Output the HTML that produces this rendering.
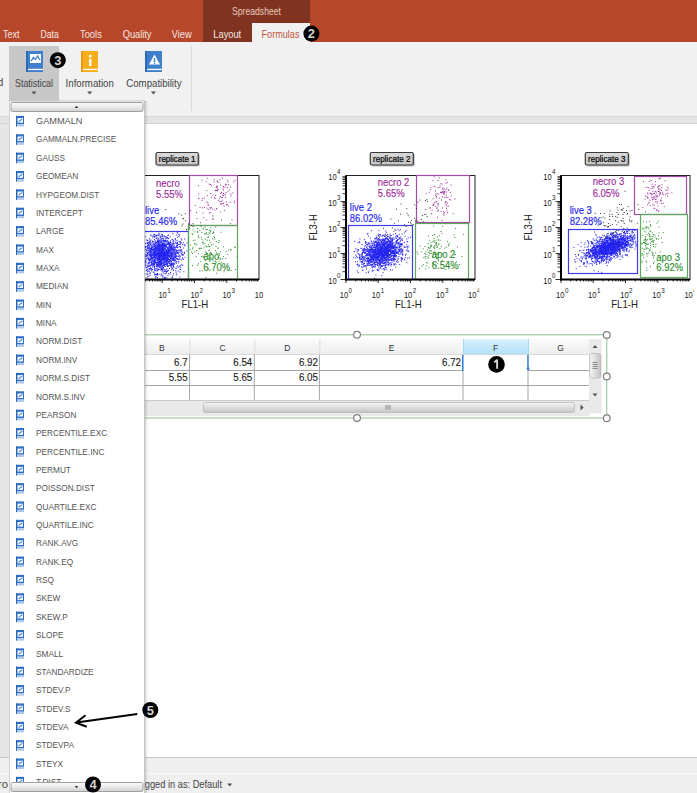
<!DOCTYPE html>
<html><head><meta charset="utf-8"><style>
html,body{margin:0;padding:0;width:697px;height:793px;overflow:hidden;background:#fff}
svg{display:block}
text{font-family:"Liberation Sans", sans-serif}
</style></head><body>
<svg width="697" height="793" viewBox="0 0 697 793" shape-rendering="auto">
<rect x="0" y="0" width="697" height="42" fill="#B7472A" />
<rect x="203" y="0" width="107" height="42" fill="#7F3320" />
<rect x="252" y="23" width="58" height="20" fill="#F1F1F1" />
<text x="232" y="15" font-size="11" fill="#EBC8BC" text-anchor="start" font-weight="normal" textLength="49" lengthAdjust="spacingAndGlyphs" >Spreadsheet</text>
<text x="3.1" y="38" font-size="11" fill="#F8E6E0" text-anchor="start" font-weight="normal" textLength="16.5" lengthAdjust="spacingAndGlyphs" >Text</text>
<text x="40.5" y="38" font-size="11" fill="#F8E6E0" text-anchor="start" font-weight="normal" textLength="18.3" lengthAdjust="spacingAndGlyphs" >Data</text>
<text x="80" y="38" font-size="11" fill="#F8E6E0" text-anchor="start" font-weight="normal" textLength="21.8" lengthAdjust="spacingAndGlyphs" >Tools</text>
<text x="122.7" y="38" font-size="11" fill="#F8E6E0" text-anchor="start" font-weight="normal" textLength="28.8" lengthAdjust="spacingAndGlyphs" >Quality</text>
<text x="171.8" y="38" font-size="11" fill="#F8E6E0" text-anchor="start" font-weight="normal" textLength="19.8" lengthAdjust="spacingAndGlyphs" >View</text>
<text x="213.3" y="38" font-size="11" fill="#F8E6E0" text-anchor="start" font-weight="normal" textLength="27.9" lengthAdjust="spacingAndGlyphs" >Layout</text>
<text x="261.5" y="38" font-size="11" fill="#C2553A" text-anchor="start" font-weight="normal" textLength="38" lengthAdjust="spacingAndGlyphs" >Formulas</text>
<rect x="0" y="42" width="697" height="72" fill="#F1F1F1" />
<rect x="0" y="114" width="697" height="2" fill="#F3F3F3" />
<rect x="0" y="116" width="697" height="1" fill="#D8D8D8" />
<rect x="0" y="117" width="697" height="6" fill="#E4E4E4" />
<rect x="0" y="123" width="697" height="1" fill="#D5D5D5" />
<rect x="9" y="46" width="50" height="55" fill="#C8C8C8" />
<rect x="191" y="46" width="1" height="65" fill="#DADADA" />
<g transform="translate(26,51)">
<rect x="0" y="0" width="17" height="21" fill="#3F7FCB"/>
<rect x="0" y="0" width="2" height="21" fill="#2F6BB5"/>
<rect x="2" y="17.8" width="15" height="1.3" fill="#FFFFFF"/>
<rect x="4" y="3" width="11" height="9" fill="#fff"/><path d="M5 10 L7.5 6.5 L9.5 8.5 L11.5 5 L14 9" stroke="#3F7FCB" stroke-width="1.3" fill="none"/>
</g>
<g transform="translate(81,51)">
<rect x="0" y="0" width="17" height="21" fill="#F8AD1A"/>
<rect x="0" y="0" width="2" height="21" fill="#EB9C0E"/>
<rect x="2" y="17.8" width="15" height="1.3" fill="#FFFFFF"/>
<rect x="8" y="4" width="2.5" height="2.5" fill="#fff"/><rect x="8" y="8" width="2.5" height="7" fill="#fff"/>
</g>
<g transform="translate(145,51)">
<rect x="0" y="0" width="17" height="21" fill="#3F7FCB"/>
<rect x="0" y="0" width="2" height="21" fill="#2F6BB5"/>
<rect x="2" y="17.8" width="15" height="1.3" fill="#FFFFFF"/>
<path d="M9.5 3.5 L15 13.5 L4 13.5 Z" fill="#fff"/><rect x="8.8" y="7" width="1.4" height="4" fill="#3F7FCB"/><rect x="8.8" y="11.6" width="1.4" height="1.3" fill="#3F7FCB"/>
</g>
<text x="15" y="86.5" font-size="10.5" fill="#444444" text-anchor="start" font-weight="normal" textLength="38" lengthAdjust="spacingAndGlyphs" >Statistical</text>
<text x="65.6" y="86.5" font-size="10.5" fill="#444444" text-anchor="start" font-weight="normal" textLength="48.2" lengthAdjust="spacingAndGlyphs" >Information</text>
<text x="126.3" y="86.5" font-size="10.5" fill="#444444" text-anchor="start" font-weight="normal" textLength="55.2" lengthAdjust="spacingAndGlyphs" >Compatibility</text>
<text x="-2.2" y="86" font-size="10.5" fill="#444444" text-anchor="start" font-weight="normal" textLength="5.5" lengthAdjust="spacingAndGlyphs" >d</text>
<path d="M31.5 91.5 h5 l-2.5 3 z" fill="#555"/>
<path d="M87.2 91.5 h5 l-2.5 3 z" fill="#555"/>
<path d="M150.9 91.5 h5 l-2.5 3 z" fill="#555"/>
<rect x="0" y="124" width="697" height="633" fill="#FFFFFF" />
<rect x="0" y="124" width="10" height="633" fill="#E5E5E5" />
<rect x="0" y="757" width="697" height="1" fill="#C8C8C8" />
<rect x="0" y="758" width="697" height="15" fill="#EFEFEF" />
<rect x="0" y="773" width="697" height="1" fill="#F8F8F8" />
<rect x="0" y="774" width="697" height="19" fill="#EFEFEF" />
<text x="-2" y="788" font-size="10.5" fill="#444444" text-anchor="start" font-weight="normal" textLength="10" lengthAdjust="spacingAndGlyphs" >ro</text>
<text x="134.5" y="788" font-size="11" fill="#444444" text-anchor="start" font-weight="normal" textLength="87.5" lengthAdjust="spacingAndGlyphs" >Logged in as: Default</text>
<path d="M227.2 783.5 h5 l-2.5 3 z" fill="#555"/>
<defs><linearGradient id="btng" x1="0" y1="0" x2="0" y2="1"><stop offset="0" stop-color="#DADADA"/><stop offset="1" stop-color="#C4C4C4"/></linearGradient></defs>
<g>
<rect x="157.5" y="154" width="42.3" height="12.5" rx="1.5" fill="#BDBDBD"/>
<rect x="156" y="152.5" width="42.3" height="12.5" rx="1.5" fill="url(#btng)" stroke="#3A3A3A" stroke-width="1.2"/>
<text x="177.15" y="161.8" font-size="8.6" fill="#000" text-anchor="middle" font-weight="normal" textLength="36.8" lengthAdjust="spacingAndGlyphs" stroke="#000" stroke-width="0.2">replicate 1</text>
<rect x="130" y="175.5" width="129" height="104.0" fill="#fff" stroke="#222" stroke-width="1"/>
<rect x="130.5" y="231.5" width="58.0" height="48.0" fill="none" stroke="#3C3CE8" stroke-width="1.2"/>
<rect x="189.5" y="175.5" width="48.0" height="50.0" fill="none" stroke="#A84AA8" stroke-width="1.2"/>
<rect x="188.5" y="225.5" width="49.0" height="54.0" fill="none" stroke="#5AAA5A" stroke-width="1.2"/>
<path d="M161.0 257.8h1M158.3 246.8h1M156.5 246.1h1M161.6 267.6h1M156.1 249.6h1M165.9 257.9h1M162.1 246.1h1M160.7 261.6h1M147.6 252.0h1M142.0 244.6h1M142.6 254.5h1M148.3 258.8h1M162.6 253.1h1M135.8 252.3h1M160.5 256.1h1M145.7 251.9h1M151.2 248.3h1M171.6 246.4h1M160.7 263.4h1M155.2 254.5h1M162.1 255.5h1M148.7 256.9h1M174.6 239.1h1M169.6 255.3h1M154.6 274.5h1M168.6 242.9h1M161.7 260.4h1M159.1 261.6h1M160.3 261.4h1M175.4 247.2h1M163.0 250.4h1M162.3 243.7h1M155.2 253.7h1M170.0 265.0h1M147.8 248.7h1M167.5 235.6h1M156.4 254.5h1M173.6 260.3h1M157.7 251.8h1M158.5 269.6h1M156.7 252.5h1M164.5 253.5h1M159.0 244.7h1M160.9 250.8h1M172.7 260.1h1M160.8 261.3h1M157.6 265.3h1M160.9 260.5h1M148.1 259.5h1M144.1 237.4h1M158.0 246.8h1M162.6 276.1h1M152.7 249.9h1M163.1 259.5h1M159.2 253.2h1M168.0 259.2h1M150.7 255.2h1M161.4 245.0h1M163.6 246.6h1M170.7 255.9h1M161.9 249.3h1M159.8 236.2h1M149.7 259.5h1M139.7 265.0h1M143.5 263.8h1M152.5 263.2h1M162.3 240.3h1M173.5 267.4h1M160.3 252.5h1M159.4 245.9h1M172.0 248.8h1M160.5 247.6h1M154.7 243.5h1M173.6 252.3h1M170.7 254.2h1M154.1 252.6h1M155.4 255.6h1M157.2 252.5h1M147.2 248.7h1M177.5 247.1h1M150.5 259.2h1M175.1 239.9h1M158.9 249.2h1M143.4 263.6h1M160.8 255.7h1M153.5 260.0h1M155.6 254.2h1M149.9 244.6h1M174.4 248.9h1M163.9 254.4h1M156.6 250.6h1M167.3 251.5h1M159.5 255.4h1M172.8 260.3h1M164.8 249.3h1M147.2 265.3h1M170.7 252.8h1M166.4 261.9h1M169.3 262.9h1M156.4 269.8h1M148.5 264.3h1M165.9 262.8h1M179.8 267.2h1M149.5 240.1h1M169.2 244.6h1M160.9 262.9h1M144.6 236.6h1M163.6 255.2h1M158.5 255.6h1M152.4 241.5h1M159.3 246.0h1M144.6 261.3h1M160.4 258.9h1M151.1 249.7h1M151.0 247.6h1M163.0 247.4h1M164.6 257.9h1M181.3 239.9h1M169.9 253.3h1M160.9 241.3h1M156.4 262.5h1M160.2 255.8h1M158.1 266.2h1M160.8 234.2h1M154.1 237.0h1M174.3 254.2h1M149.3 247.2h1M172.3 255.4h1M161.5 254.4h1M161.4 262.6h1M166.5 256.5h1M150.6 260.8h1M154.2 266.0h1M148.3 254.9h1M160.9 242.5h1M178.2 267.2h1M156.4 262.7h1M163.5 254.2h1M161.8 244.7h1M158.3 253.6h1M172.9 257.0h1M160.9 269.5h1M155.4 251.8h1M142.8 271.6h1M170.6 262.8h1M167.7 255.4h1M163.2 252.4h1M159.0 255.7h1M176.1 258.8h1M160.4 249.6h1M154.7 270.8h1M166.1 255.2h1M157.5 244.8h1M160.3 263.3h1M157.1 253.2h1M158.8 256.2h1M145.1 254.3h1M152.5 264.2h1M153.3 261.2h1M176.2 250.6h1M155.0 257.4h1M161.0 245.6h1M165.6 273.6h1M158.4 253.3h1M150.6 259.0h1M148.5 245.7h1M173.8 245.2h1M171.8 268.4h1M163.6 260.0h1M180.5 251.3h1M155.1 242.8h1M161.4 268.9h1M170.6 245.2h1M152.4 251.0h1M163.9 252.8h1M163.1 257.6h1M158.0 254.9h1M163.1 254.0h1M166.0 272.2h1M166.9 255.0h1M144.1 260.3h1M141.5 243.5h1M169.5 260.9h1M159.5 239.0h1M157.3 248.9h1M167.4 275.7h1M163.2 247.4h1M149.3 255.6h1M159.2 244.3h1M162.2 244.0h1M172.1 264.0h1M171.8 249.5h1M166.1 253.3h1M157.1 252.2h1M148.0 242.6h1M168.9 252.4h1M163.2 264.3h1M143.7 249.2h1M162.8 258.5h1M157.2 265.1h1M163.1 243.3h1M151.7 263.5h1M165.6 236.6h1M174.5 259.4h1M174.4 250.1h1M158.0 244.6h1M186.4 250.9h1M176.9 247.4h1M162.6 239.0h1M157.2 264.7h1M148.5 266.3h1M164.4 244.8h1M156.0 251.1h1M160.5 250.0h1M152.7 252.9h1M150.7 243.8h1M160.5 263.4h1M145.7 256.5h1M154.5 246.4h1M169.5 249.3h1M176.0 246.2h1M164.9 252.5h1M153.5 261.3h1M159.5 260.8h1M160.5 244.8h1M160.0 255.6h1M170.6 245.5h1M160.6 238.8h1M167.5 244.2h1M142.9 256.2h1M172.1 239.5h1M150.1 249.0h1M149.7 259.7h1M152.9 248.9h1M166.8 247.3h1M165.3 245.4h1M148.9 238.8h1M179.6 250.2h1M163.4 254.5h1M162.6 255.3h1M180.1 243.4h1M145.4 246.9h1M147.7 263.3h1M169.2 245.1h1M147.1 253.0h1M166.3 244.3h1M171.4 243.8h1M158.1 241.0h1M151.2 269.0h1M169.2 250.4h1M152.3 237.9h1M157.1 255.1h1M160.2 254.2h1M149.8 255.4h1M160.6 267.2h1M179.7 251.9h1M153.3 255.1h1M154.9 248.6h1M160.4 245.2h1M167.1 253.4h1M163.5 253.0h1M153.7 246.7h1M158.6 250.0h1M163.3 254.7h1M147.4 256.9h1M147.6 250.4h1M158.1 235.7h1M161.9 256.3h1M159.4 251.1h1M157.3 246.1h1M158.3 250.0h1M161.9 243.5h1M163.4 256.1h1M159.6 251.0h1M166.5 238.7h1M165.6 256.9h1M163.8 258.4h1M154.5 253.2h1M167.4 258.5h1M163.1 240.5h1M166.4 265.5h1M171.1 256.3h1M145.4 265.4h1M164.8 240.5h1M148.0 250.2h1M173.7 250.3h1M163.7 271.3h1M176.9 252.5h1M158.6 243.3h1M154.1 259.7h1M165.0 255.7h1M170.9 246.8h1M160.4 262.0h1M166.8 264.6h1M165.0 251.7h1M164.6 245.2h1M144.6 262.0h1M160.4 258.0h1M144.0 253.2h1M155.0 247.4h1M138.4 254.0h1M170.0 257.7h1M155.0 255.4h1M159.8 260.3h1M167.8 270.4h1M172.4 256.9h1M164.0 262.2h1M155.6 255.1h1M170.1 272.6h1M159.4 254.7h1M163.0 267.5h1M160.7 268.9h1M151.3 254.2h1M159.0 262.6h1M171.5 239.7h1M151.8 259.1h1M154.4 241.2h1M171.4 258.7h1M165.9 250.0h1M171.3 251.8h1M172.0 245.3h1M152.5 257.7h1M154.0 262.1h1M163.6 246.0h1M161.7 251.6h1M170.2 248.2h1M156.6 266.9h1M183.4 271.8h1M161.6 257.0h1M176.3 252.4h1M151.2 257.0h1M165.5 246.7h1M144.5 243.0h1M167.7 247.2h1M159.6 257.1h1M167.2 251.2h1M166.0 246.1h1M157.4 245.7h1M172.3 253.7h1M153.6 252.4h1M158.8 261.8h1M145.0 246.7h1M170.6 253.0h1M168.1 273.8h1M158.7 251.8h1M173.1 258.5h1M167.7 249.6h1M180.2 269.3h1M166.7 260.9h1M140.7 263.0h1M159.1 259.3h1M167.8 251.1h1M144.1 260.1h1M153.6 252.6h1M155.0 252.3h1M137.9 268.7h1M163.5 265.3h1M180.8 253.3h1M143.0 248.3h1M148.9 251.4h1M161.8 236.0h1M164.4 240.4h1M164.0 253.7h1M157.9 254.6h1M155.6 249.7h1M144.2 256.3h1M179.5 272.0h1M174.2 260.4h1M154.2 269.3h1M160.4 254.4h1M158.1 256.1h1M156.6 254.6h1M150.2 252.5h1M183.8 252.2h1M158.6 260.3h1M168.1 243.8h1M158.9 263.9h1M163.7 255.9h1M176.5 247.1h1M161.8 250.0h1M175.9 235.1h1M154.3 250.6h1M167.6 260.1h1M175.0 238.8h1M168.5 251.5h1M154.3 260.7h1M151.8 236.2h1M157.3 241.2h1M154.5 259.1h1M164.1 269.7h1M159.0 240.7h1M153.4 247.0h1M148.8 260.3h1M154.5 236.9h1M168.0 253.3h1M164.6 255.7h1M167.3 254.8h1M173.4 257.8h1M164.9 258.5h1M146.4 254.8h1M158.4 257.2h1M147.4 271.7h1M162.0 243.5h1M143.9 254.0h1M160.1 248.3h1M161.9 248.9h1M166.5 247.6h1M160.6 264.3h1M186.7 243.0h1M156.4 247.5h1M168.8 243.4h1M156.2 255.2h1M151.2 246.9h1M156.2 235.6h1M146.5 252.5h1M162.5 253.1h1M143.3 252.3h1M169.0 259.5h1M160.2 246.7h1M167.3 248.9h1M149.3 248.5h1M175.5 255.7h1M172.6 249.4h1M170.4 248.4h1M168.7 249.5h1M160.2 258.2h1M173.1 249.2h1M143.6 254.0h1M161.2 256.0h1M174.2 256.7h1M169.1 243.8h1M169.7 274.0h1M168.7 256.7h1M162.5 271.7h1M151.7 254.8h1M165.6 261.6h1M156.6 258.3h1M158.2 256.4h1M159.7 244.3h1M160.8 263.3h1M151.3 253.6h1M167.6 244.3h1M162.8 244.8h1M172.3 275.8h1M181.2 251.0h1M168.4 255.4h1M162.0 269.5h1M147.8 266.2h1M160.5 268.4h1M162.9 248.5h1M163.8 261.7h1M161.4 259.6h1M155.8 235.3h1M170.0 260.8h1M162.5 255.5h1M171.4 249.7h1M153.9 253.9h1M172.9 240.8h1M172.9 247.8h1M150.0 268.0h1M160.0 242.8h1M157.4 264.1h1M172.9 249.8h1M165.1 261.4h1M154.6 259.0h1M160.7 250.0h1M156.1 256.1h1M161.3 249.6h1M156.7 265.9h1M163.1 263.2h1M173.0 259.4h1M183.7 245.0h1M169.1 251.2h1M179.6 269.3h1M141.5 247.7h1M167.6 261.8h1M168.4 253.6h1M165.6 260.7h1M160.2 264.8h1M138.4 263.1h1M150.7 265.0h1M158.7 246.8h1M164.7 246.0h1M151.9 241.1h1M160.7 259.7h1M171.2 252.7h1M171.5 254.2h1M160.1 260.5h1M171.6 250.8h1M158.6 253.7h1M161.8 246.4h1M171.3 250.2h1M165.6 246.8h1M164.6 258.4h1M156.8 274.5h1M164.7 271.4h1M170.6 247.8h1M157.2 259.5h1M161.6 255.4h1M158.1 238.2h1M158.7 234.2h1M164.7 247.8h1M153.8 253.6h1M163.7 241.2h1M143.5 246.6h1M140.6 247.8h1M176.9 243.5h1M167.5 241.4h1M164.0 251.7h1M160.4 260.4h1M178.6 255.2h1M162.2 245.7h1M166.8 252.1h1M169.3 253.8h1M178.4 234.6h1M158.0 263.6h1M157.5 247.8h1M158.3 242.2h1M162.2 278.0h1M172.5 243.4h1M152.3 252.0h1M171.0 246.3h1M154.1 264.0h1M169.6 250.6h1M149.8 241.4h1M154.0 234.6h1M168.5 248.3h1M165.8 272.2h1M172.7 243.0h1M169.7 265.1h1M153.5 246.7h1M159.9 240.0h1M149.9 253.5h1M158.7 256.8h1M163.7 252.7h1M172.4 233.7h1M161.0 248.2h1M162.3 257.0h1M151.9 249.8h1M168.9 257.5h1M154.2 274.9h1M184.1 239.0h1M164.0 278.4h1M168.8 256.3h1M158.9 250.1h1M158.9 250.0h1M168.4 250.5h1M156.6 244.1h1M160.5 246.6h1M159.2 265.0h1M164.7 259.4h1M164.6 255.2h1M159.7 252.2h1M168.6 244.0h1M174.4 254.0h1M153.5 251.1h1M154.2 257.2h1M153.8 266.5h1M153.2 234.3h1M153.7 236.7h1M160.6 265.0h1M167.5 241.7h1M153.4 272.5h1M164.2 254.7h1M171.6 277.2h1M174.0 255.1h1M164.5 260.5h1M154.9 245.6h1M161.5 246.0h1M160.4 256.0h1M184.4 244.7h1M159.8 253.6h1M165.4 264.5h1M156.1 247.7h1M144.6 247.8h1M166.4 254.9h1M150.8 252.4h1M161.3 259.7h1M155.1 253.2h1M142.8 245.8h1M177.2 232.8h1M157.6 257.4h1M157.3 247.7h1M160.4 255.0h1M160.2 237.3h1M159.5 247.1h1M155.5 257.7h1M167.4 262.9h1M156.0 264.2h1M172.7 264.6h1M174.9 252.3h1M159.3 263.0h1M147.3 258.3h1M155.7 252.0h1M143.6 248.2h1M160.8 263.4h1M170.9 253.3h1M159.1 247.3h1M165.0 252.3h1M167.1 271.0h1M160.7 240.9h1M152.4 242.0h1M149.0 268.5h1M163.3 240.4h1M167.5 266.3h1M157.4 249.0h1M157.6 258.0h1M167.4 265.6h1M173.1 265.1h1M174.6 260.0h1M145.7 255.2h1M164.1 251.1h1M170.1 250.7h1M151.7 269.5h1M167.7 256.4h1M170.3 264.2h1M154.2 251.3h1M151.2 257.8h1M172.9 249.3h1M149.7 275.2h1M156.5 243.8h1M163.4 258.8h1M153.9 263.1h1M156.1 246.7h1M162.8 262.1h1M154.7 258.7h1M153.9 268.8h1M160.5 253.9h1M168.2 262.8h1M173.7 256.9h1M155.0 250.5h1M166.1 260.0h1M175.0 257.6h1M171.6 268.3h1M162.6 240.8h1M149.2 242.5h1M176.9 245.5h1M173.3 259.4h1M178.2 262.9h1M160.0 253.2h1M161.9 256.6h1M155.7 255.2h1M177.1 237.4h1M163.6 246.2h1M162.9 262.8h1M160.4 262.4h1M145.1 267.0h1M155.0 261.5h1M153.4 257.8h1M176.5 256.2h1M163.6 241.4h1M175.3 270.7h1M161.3 252.9h1M144.8 264.9h1M173.6 258.9h1M151.1 268.6h1M148.7 254.2h1M163.8 263.1h1M165.2 258.3h1M153.4 243.5h1M161.6 248.2h1M147.9 244.3h1M156.1 238.0h1M147.5 240.8h1M162.8 258.7h1M181.1 238.9h1M154.2 264.3h1M158.8 252.1h1M178.1 250.2h1M149.4 243.7h1M164.4 257.6h1M147.3 247.0h1M166.3 259.9h1M154.6 261.5h1M166.7 237.6h1M157.9 259.2h1M155.3 235.3h1M158.2 262.4h1M176.8 232.8h1M170.6 265.8h1M170.8 255.5h1M149.4 262.0h1M179.2 244.7h1M175.7 268.6h1M176.5 253.3h1M149.0 254.5h1M139.0 241.0h1M161.9 245.5h1M159.4 254.1h1M180.3 265.4h1M160.6 266.5h1M153.2 252.6h1M170.1 242.4h1M158.2 242.8h1M162.2 270.3h1M153.5 257.8h1M152.0 245.0h1M148.6 269.9h1M184.6 257.3h1M153.8 262.3h1M157.7 262.9h1M163.9 257.4h1M167.1 248.9h1M157.0 239.1h1M156.6 242.0h1M159.6 246.1h1M162.0 259.2h1M146.8 248.7h1M151.6 263.0h1M178.1 261.4h1M157.5 269.2h1M145.9 270.6h1M150.7 257.6h1M158.9 256.2h1M146.2 250.0h1M165.7 256.7h1M173.0 254.6h1M184.5 246.0h1M163.6 236.6h1M148.5 268.7h1M151.6 260.9h1M160.4 245.2h1M157.5 250.5h1M156.1 262.6h1M167.5 248.9h1M151.9 258.5h1M160.0 264.8h1M160.7 253.4h1M152.4 247.2h1M151.0 252.2h1M156.7 262.4h1M157.0 253.5h1M148.8 271.7h1M166.1 271.4h1M169.0 268.3h1M158.5 262.0h1M172.8 269.9h1M165.2 261.8h1M173.8 247.4h1M165.2 246.2h1M154.1 249.7h1M159.5 256.6h1M165.6 240.8h1M181.3 264.3h1M168.4 250.8h1M160.1 260.4h1M165.2 238.3h1M142.1 266.4h1M164.8 253.6h1M175.1 242.2h1M162.7 269.0h1M159.0 251.1h1M162.2 250.6h1M176.9 244.7h1M170.0 242.0h1M167.9 253.3h1M134.4 257.5h1M150.0 251.7h1M176.8 242.6h1M150.1 270.0h1M162.2 269.9h1M164.3 246.1h1M160.3 267.0h1M170.7 254.1h1M161.5 253.9h1M155.1 274.3h1M161.1 244.0h1M156.1 262.5h1M167.6 253.0h1M154.1 255.9h1M143.8 244.0h1M169.2 249.6h1M164.9 266.5h1M167.7 254.6h1M182.9 259.4h1M157.4 262.5h1M165.2 246.3h1M161.8 253.3h1M140.8 255.2h1M158.1 251.0h1M144.1 253.2h1M160.6 256.0h1M149.3 262.3h1M148.5 254.0h1M174.4 247.0h1M155.7 265.9h1M157.1 252.5h1M163.3 265.0h1M138.4 249.1h1M150.7 245.4h1M152.2 247.7h1M164.1 246.1h1M162.3 258.8h1M153.5 257.0h1M177.8 256.5h1M154.5 255.0h1M151.6 258.5h1M169.8 246.2h1M158.9 266.0h1M155.9 257.3h1M150.5 248.1h1M155.8 276.1h1M156.9 250.4h1M155.4 254.0h1M167.6 256.2h1M181.6 255.1h1M175.5 256.2h1M167.1 240.8h1M159.7 254.5h1M158.6 234.9h1M169.8 250.5h1M156.6 253.0h1M158.7 259.1h1M148.3 247.4h1M163.9 256.1h1M157.2 249.9h1M152.7 255.2h1M172.8 243.9h1M176.2 261.5h1M156.5 262.8h1M146.3 240.0h1M148.1 252.4h1M157.7 250.4h1M162.0 234.7h1M166.0 241.1h1M154.4 251.7h1M149.4 243.1h1M150.9 255.8h1M166.9 259.8h1M151.1 248.5h1M151.8 260.1h1M140.6 268.6h1M156.2 248.1h1M164.4 264.4h1M164.4 264.6h1M162.3 266.5h1M173.5 252.9h1M175.4 255.2h1M161.9 246.2h1M158.1 262.6h1M147.9 262.4h1M164.5 257.3h1M138.9 256.1h1M167.5 247.2h1M167.7 248.1h1M169.7 236.8h1M167.9 252.1h1M169.1 245.5h1M154.8 276.8h1M152.7 249.1h1M158.2 245.6h1M172.9 270.2h1M154.0 239.4h1M172.7 264.4h1M169.2 265.2h1M152.3 254.2h1M147.2 242.9h1M170.8 247.7h1M183.8 253.5h1M154.6 263.2h1M179.0 257.9h1M148.8 259.7h1M174.8 249.0h1M153.3 265.3h1M162.4 244.4h1M157.2 248.2h1M164.0 255.8h1M172.5 260.6h1M145.4 260.3h1M170.0 258.5h1M171.3 248.8h1M151.5 264.7h1M150.3 235.6h1M171.3 247.2h1M157.9 242.1h1M147.7 245.3h1M157.4 258.8h1M138.0 264.3h1M149.2 246.0h1M167.8 253.7h1M145.6 273.9h1M152.4 258.2h1M163.0 268.2h1M156.4 265.0h1M153.6 266.3h1M153.4 252.3h1M180.0 256.2h1M162.1 276.1h1M164.6 246.9h1M168.3 243.1h1M172.3 265.3h1M155.3 249.6h1M162.8 255.0h1M151.2 261.3h1M140.6 252.8h1M157.0 252.8h1M164.1 243.1h1M166.9 252.7h1M154.5 242.7h1M149.2 259.5h1M151.4 256.5h1M171.6 263.8h1M176.6 250.7h1M150.1 265.7h1M164.1 265.3h1M161.1 266.3h1M169.5 261.0h1M166.0 258.3h1M163.3 256.9h1M170.9 249.2h1M178.4 252.3h1M170.9 253.2h1M158.5 274.4h1M157.9 243.2h1M153.9 252.7h1M182.6 254.9h1M170.3 244.6h1M164.5 261.0h1M179.0 246.7h1M167.0 257.3h1M150.8 255.8h1M158.4 233.3h1M167.0 259.5h1M156.6 242.8h1M175.8 256.1h1M171.2 267.4h1M155.8 263.2h1M158.6 254.6h1M160.1 255.1h1M172.1 255.1h1M159.5 252.5h1M164.4 246.2h1M156.0 255.0h1M155.3 254.4h1M154.9 274.5h1M174.3 258.0h1M160.5 275.8h1M164.2 253.9h1M164.0 257.6h1M175.1 253.5h1M182.0 244.7h1M167.9 244.9h1M179.2 250.1h1M160.4 263.8h1M173.6 243.3h1M157.5 242.1h1M162.4 253.9h1M157.5 248.9h1M157.1 248.3h1M166.3 268.8h1M141.7 255.7h1M156.8 260.1h1M151.5 254.5h1M150.6 262.6h1M162.0 253.4h1M164.7 252.3h1M145.5 262.1h1M163.9 253.3h1M170.8 265.6h1M150.1 248.7h1M176.5 266.9h1M153.6 244.5h1M154.6 250.9h1M145.2 256.8h1M148.2 244.8h1M170.2 247.7h1M160.3 261.0h1M169.1 251.0h1M161.4 247.2h1M178.5 259.5h1M150.0 256.1h1M168.1 258.9h1M179.3 266.2h1M155.6 254.7h1M148.2 258.6h1M162.0 235.1h1M154.3 256.7h1M148.4 248.0h1M157.3 258.6h1M159.3 246.8h1M168.9 249.2h1M156.0 242.4h1M153.1 261.9h1M144.8 255.9h1M168.2 250.8h1M163.4 244.2h1M174.1 264.2h1M163.4 238.2h1M150.5 265.2h1M178.1 256.2h1M173.5 248.1h1M159.1 255.2h1M165.2 240.1h1M170.4 266.6h1M149.5 243.3h1M164.5 248.5h1M137.3 264.9h1M162.6 250.3h1M182.1 254.3h1M153.5 256.7h1M150.6 248.8h1M164.9 249.4h1M156.5 271.2h1M169.6 261.8h1M166.3 259.1h1M175.6 253.4h1M179.6 244.2h1M158.4 242.2h1M157.6 260.2h1M175.5 247.4h1M161.1 251.6h1M153.6 244.5h1M161.6 238.6h1M162.1 255.1h1M154.4 246.1h1M147.2 274.0h1M147.6 271.0h1M167.0 251.0h1M149.4 266.0h1M178.3 244.5h1M158.0 265.2h1M164.4 273.6h1M155.3 260.7h1M148.5 276.0h1M153.7 234.8h1M159.7 253.8h1M180.2 250.0h1M160.9 260.6h1M176.9 252.9h1M171.4 258.9h1M158.0 256.0h1M161.3 246.3h1M173.1 240.7h1M172.7 262.9h1M160.1 247.9h1M158.7 259.7h1M168.4 257.0h1M170.9 248.8h1M163.3 240.0h1M168.6 255.7h1M156.8 266.4h1M161.4 241.2h1M171.7 277.5h1M155.8 256.2h1M158.5 258.6h1M167.4 266.6h1M151.1 270.8h1M151.7 258.5h1M172.6 260.6h1M151.6 249.3h1M156.4 255.0h1M172.5 241.7h1M165.7 260.3h1M166.6 258.9h1M176.2 258.2h1M169.6 259.5h1M178.9 235.3h1M173.8 251.3h1M158.2 246.1h1M142.3 253.2h1M154.1 260.3h1M146.3 269.9h1M163.7 252.4h1M153.9 248.2h1M149.7 250.9h1M161.1 253.3h1M146.9 253.8h1M152.1 257.4h1M179.6 259.1h1M157.9 239.9h1M146.9 240.4h1M168.3 247.1h1M161.6 249.1h1M161.9 268.2h1M154.2 252.4h1M152.9 264.0h1M150.7 245.3h1M147.1 243.0h1M151.0 264.9h1M163.5 244.3h1M158.2 253.1h1M154.1 273.9h1M141.9 260.4h1M164.3 249.2h1M162.5 263.2h1M162.5 258.8h1M167.9 235.1h1M175.8 275.1h1M170.8 263.6h1M146.9 255.2h1M152.9 250.2h1M170.7 246.5h1M159.7 237.1h1M159.4 256.0h1M154.0 248.9h1M179.9 241.8h1M150.5 248.4h1M173.0 273.7h1M164.3 247.9h1M156.7 265.5h1M151.9 269.6h1M175.2 254.3h1M167.5 261.5h1M176.5 243.6h1M172.8 250.3h1M153.3 256.7h1M158.9 245.9h1M145.0 247.6h1M175.5 272.2h1M167.5 265.6h1M155.8 254.8h1M163.8 244.5h1M151.1 256.9h1M157.8 245.3h1M164.9 252.1h1M171.2 254.0h1M158.0 256.5h1M159.3 248.8h1M157.0 262.5h1M167.5 266.5h1M144.1 252.9h1M156.9 257.0h1M156.5 250.6h1M168.8 255.9h1M149.3 268.7h1M171.0 248.6h1M169.3 247.3h1M172.3 251.9h1M153.0 252.2h1M153.3 257.5h1M162.8 255.2h1M161.9 237.0h1M163.4 265.5h1M163.7 251.1h1M159.2 253.9h1M155.5 250.0h1M151.8 267.1h1M160.8 264.1h1M158.5 255.9h1M159.3 259.5h1M169.3 256.5h1M154.3 248.3h1M177.6 250.8h1M158.1 269.1h1M171.9 259.0h1M157.0 277.6h1M164.9 259.8h1M159.3 241.8h1M147.7 260.1h1M164.9 252.4h1M149.3 242.5h1M157.7 241.5h1M170.0 265.0h1M155.1 247.3h1M159.2 264.3h1M167.1 260.0h1M163.1 261.0h1M175.5 243.6h1M156.4 242.3h1M177.2 265.7h1M168.5 243.0h1M162.7 252.6h1M161.8 253.1h1M166.2 250.8h1M169.5 256.5h1M158.1 254.2h1M156.6 263.1h1M158.3 258.0h1M157.1 241.3h1M170.1 244.1h1M167.8 258.3h1M144.4 247.6h1M155.9 247.7h1M149.2 263.1h1M158.6 258.9h1M156.7 258.3h1M153.5 255.5h1M166.8 254.9h1M156.4 245.2h1M162.7 258.1h1M158.4 248.0h1M166.4 277.9h1M158.0 258.5h1M162.2 248.2h1M174.8 251.3h1M153.2 253.7h1M162.7 249.5h1M160.5 242.2h1M158.7 262.5h1M180.7 259.8h1M163.7 265.9h1M171.2 269.8h1M171.8 252.9h1M163.6 256.4h1M164.0 256.6h1M153.2 235.9h1M154.3 236.5h1M161.7 255.0h1M144.2 263.1h1M169.7 255.1h1M177.7 271.1h1M148.9 265.9h1M165.4 258.5h1M170.3 247.3h1M155.1 247.7h1M153.5 254.8h1M146.5 246.5h1M166.8 253.8h1M164.8 236.8h1M153.2 250.5h1M161.3 249.4h1M170.3 253.6h1M161.2 255.1h1M168.1 249.9h1M172.2 258.3h1M162.5 255.2h1M166.2 264.1h1M170.5 257.7h1M169.8 255.3h1M173.5 253.6h1M140.2 269.6h1M162.1 243.8h1M159.0 246.8h1M182.0 257.7h1M145.3 261.7h1M157.0 273.5h1M150.5 234.8h1M161.7 251.6h1M156.8 235.2h1M165.3 270.4h1M141.9 267.9h1M155.3 277.7h1M165.4 252.8h1M172.1 258.9h1M155.1 262.3h1M155.9 238.6h1M181.3 249.8h1M154.9 258.8h1M145.4 243.7h1M156.0 250.6h1M161.7 265.5h1M156.3 260.1h1M167.0 244.2h1M163.3 245.9h1M171.6 258.3h1M161.2 242.3h1M162.2 247.6h1M168.1 253.2h1M152.9 264.5h1M168.2 248.7h1M172.6 251.1h1M157.9 256.5h1M153.5 251.5h1M159.4 269.6h1M176.0 251.1h1M177.1 253.1h1M164.8 263.0h1M163.9 277.6h1M163.4 243.4h1M174.1 249.9h1M171.0 261.8h1M169.0 263.5h1M177.9 253.0h1M170.4 247.1h1M157.5 265.3h1M164.9 242.0h1M164.6 252.9h1M152.8 259.9h1M157.0 240.5h1M149.9 272.8h1M145.9 258.5h1M167.1 260.5h1M148.7 253.1h1M162.4 262.4h1M154.6 244.6h1M171.0 264.5h1M164.7 248.9h1M165.1 255.6h1M169.4 242.4h1M162.2 253.4h1M149.9 258.1h1M161.3 251.1h1M165.0 241.2h1M160.5 259.1h1M163.8 264.9h1M149.0 241.9h1M163.4 259.1h1M182.2 258.8h1M152.3 263.4h1M152.5 241.8h1M168.1 259.6h1M179.1 256.0h1M173.2 244.1h1M147.1 269.8h1M175.7 258.4h1M163.3 256.4h1M154.1 270.2h1M167.6 259.2h1M164.8 264.5h1M166.1 261.6h1M149.3 260.9h1M182.9 248.0h1M159.7 263.6h1M170.6 260.0h1M144.8 261.3h1M149.2 248.3h1M166.5 251.7h1M168.8 261.1h1M152.0 249.8h1M150.4 251.0h1M150.1 249.8h1M158.9 245.7h1M146.8 243.5h1M165.5 255.1h1M171.3 263.9h1M157.6 261.7h1M146.6 277.9h1M173.0 251.8h1M149.4 259.7h1M142.3 249.4h1M168.5 255.0h1M156.1 264.5h1M150.6 258.7h1M156.0 247.5h1M165.6 245.2h1M180.0 247.7h1M180.9 242.8h1M167.1 243.1h1M147.6 257.8h1M167.8 242.3h1M172.8 246.3h1M162.3 258.5h1M166.9 237.4h1M177.2 258.8h1M156.7 245.7h1M144.1 243.7h1M166.4 251.3h1M149.7 251.1h1M176.6 250.4h1M155.2 268.3h1M165.6 255.0h1M154.9 240.9h1M149.3 251.6h1M158.8 258.6h1M166.5 256.6h1M163.2 245.3h1M139.5 252.1h1M151.5 249.7h1M158.3 243.5h1M149.9 255.1h1M162.2 248.7h1M166.0 252.5h1M150.8 256.4h1M179.8 246.8h1M172.7 266.9h1M176.0 245.8h1M181.2 254.2h1M158.5 253.1h1M167.0 254.9h1M159.2 267.3h1M153.8 245.8h1M168.9 260.9h1M171.9 243.8h1M171.8 258.5h1M178.6 241.5h1M163.2 252.2h1M145.1 249.8h1M172.3 249.5h1M153.8 263.9h1M170.9 263.4h1M153.1 255.2h1M171.3 247.8h1M153.5 263.5h1M176.6 242.6h1M135.0 243.8h1M150.9 254.7h1M167.2 253.0h1M154.0 257.1h1M151.4 255.5h1M169.2 246.3h1M151.0 251.8h1M144.6 249.7h1M153.6 264.1h1M156.7 247.9h1M147.6 245.2h1M160.3 253.0h1M172.3 248.0h1M171.6 256.4h1M161.0 236.0h1M148.1 263.2h1M175.0 255.6h1M168.6 250.4h1M157.3 249.1h1M170.7 257.3h1M158.7 252.1h1M166.6 257.5h1M152.7 272.0h1M163.6 254.9h1M175.8 263.3h1M160.1 260.1h1M150.3 250.0h1M138.4 268.7h1M142.0 263.2h1M152.7 246.5h1M159.0 257.7h1M167.1 271.2h1M164.6 263.0h1M155.0 262.3h1M162.5 250.5h1M160.0 254.5h1M162.9 258.6h1M155.9 248.5h1M168.5 238.3h1M154.8 270.3h1M133.9 251.0h1M167.9 238.7h1M175.4 268.4h1M170.2 252.0h1M164.6 246.2h1M169.1 243.6h1M158.3 264.7h1M149.9 252.6h1M162.6 242.2h1M172.6 257.1h1M145.8 256.0h1M153.2 249.5h1M161.8 248.2h1M170.6 247.4h1M170.8 253.7h1M169.6 249.1h1M155.9 244.6h1M166.8 263.3h1M182.2 265.2h1M163.5 252.8h1M164.9 254.4h1M175.6 262.5h1M152.6 249.3h1M174.7 256.6h1M158.7 266.4h1M157.1 252.7h1M156.4 236.9h1M169.6 242.8h1M155.3 248.5h1M168.3 253.7h1M161.2 239.1h1M160.1 241.1h1M164.1 258.2h1M160.8 274.3h1M166.3 260.1h1M162.4 253.0h1M170.7 264.5h1M148.0 266.2h1M166.1 263.6h1M165.7 242.8h1M149.3 273.4h1M163.5 241.4h1M164.5 251.2h1M142.6 235.1h1M145.0 259.1h1M160.5 252.7h1M163.8 260.4h1M140.0 254.2h1M152.7 244.1h1M155.5 254.4h1M158.3 241.5h1M156.2 274.5h1M150.5 240.1h1M163.8 260.4h1M165.6 244.0h1M171.0 246.6h1M149.7 250.3h1M159.9 261.9h1M167.2 254.2h1M170.3 254.9h1M170.0 240.9h1M145.3 263.8h1M147.1 253.5h1M160.0 250.5h1M156.5 268.6h1M135.7 265.8h1M184.0 253.0h1M160.8 261.9h1M179.3 242.0h1M161.9 253.2h1M166.6 256.0h1M167.6 250.4h1M161.5 248.6h1M154.4 254.3h1M159.6 244.1h1M176.7 252.2h1M147.2 266.7h1M153.5 260.5h1M160.8 257.4h1M162.7 249.4h1M161.4 274.2h1M138.6 257.7h1M165.3 244.6h1M147.3 276.7h1M157.3 275.0h1M166.4 255.2h1M165.8 260.6h1M172.8 258.0h1M162.4 256.5h1M174.5 261.4h1M151.0 249.9h1M164.3 248.8h1M157.2 246.3h1M158.4 259.3h1M171.0 254.1h1M181.7 252.3h1M166.0 249.8h1M132.8 256.2h1M162.8 273.0h1M147.2 274.3h1M158.5 262.1h1M135.6 258.7h1M157.6 261.8h1M161.9 244.1h1M170.5 260.7h1M167.0 264.0h1M172.0 253.7h1M147.4 243.2h1M174.5 260.4h1M162.0 250.8h1M161.3 255.2h1M157.6 248.7h1M182.6 255.1h1M154.9 243.3h1M153.7 262.5h1M168.6 252.2h1M161.5 252.1h1M149.9 268.4h1M164.7 278.1h1M153.4 254.4h1M169.8 251.8h1M147.1 247.3h1M162.0 258.1h1M160.1 264.6h1M170.9 257.1h1M161.3 252.6h1M166.5 263.2h1M161.6 259.2h1M157.8 242.0h1M151.0 263.2h1M165.5 269.6h1M161.6 263.1h1M174.2 263.1h1M154.9 253.8h1M162.3 245.6h1M165.7 264.2h1M156.2 274.1h1M158.1 253.4h1M158.6 248.5h1M165.2 254.8h1M177.6 259.2h1M166.4 252.4h1M146.9 255.5h1M152.5 264.8h1M160.7 270.8h1M168.4 262.2h1M163.3 256.8h1M167.5 263.1h1M153.9 260.3h1M158.4 248.7h1M146.5 267.6h1M161.6 257.8h1M179.4 277.0h1M152.1 265.8h1M167.2 258.2h1M165.8 254.3h1M176.9 259.3h1M164.5 266.5h1M170.0 258.5h1M164.3 271.3h1M166.1 253.7h1M152.5 252.6h1M150.5 257.0h1M163.6 235.4h1M161.2 261.1h1M162.7 245.8h1M173.7 247.2h1M148.7 246.0h1M160.9 264.3h1M172.7 255.9h1M149.1 249.9h1M152.0 254.2h1M143.3 257.7h1M167.5 253.0h1M165.6 245.7h1M146.5 250.4h1M172.6 263.6h1M156.4 266.8h1M157.8 269.6h1M165.8 250.3h1M169.0 246.9h1M151.6 242.2h1M163.6 254.3h1M160.2 251.2h1M175.4 249.6h1M153.8 267.5h1M175.2 256.9h1M143.6 251.0h1M167.1 254.6h1M176.5 240.6h1M167.8 248.4h1M174.2 253.0h1M171.3 247.9h1M146.9 245.8h1M154.9 245.9h1M173.0 266.5h1M163.7 245.0h1M159.8 248.6h1M175.5 256.6h1M165.9 250.8h1M140.9 249.6h1M149.8 259.6h1M162.0 247.3h1M157.1 270.2h1M151.4 247.2h1M158.7 248.6h1M156.7 260.4h1M178.3 236.5h1M160.8 255.4h1M160.2 253.3h1M157.6 264.8h1M156.3 254.2h1M161.0 256.0h1M159.3 264.6h1M160.9 256.7h1M160.5 245.6h1M152.7 245.9h1M162.9 248.1h1M150.4 258.3h1M166.3 237.9h1M177.9 253.7h1M159.9 265.2h1M161.7 249.2h1M182.9 242.8h1M160.0 263.1h1M150.3 255.1h1M164.9 277.3h1M152.1 255.4h1M167.6 255.1h1M149.0 260.0h1M162.1 259.1h1M172.3 263.5h1M165.1 257.5h1M150.0 254.8h1M163.2 251.0h1M162.0 247.1h1M176.3 273.9h1M157.1 259.2h1M158.7 267.2h1M165.3 255.3h1M158.8 256.4h1M151.0 262.3h1M153.9 260.7h1M162.3 265.2h1M160.8 264.7h1M151.8 261.6h1M158.8 257.0h1M161.7 263.8h1M140.8 260.0h1M146.1 267.8h1M141.3 247.4h1" stroke="#2424F0" stroke-width="1" opacity="1.0"/>
<ellipse cx="161" cy="255" rx="7.0" ry="6.2509999999999994" fill="#2424F0" opacity="0.45" transform="rotate(4.0 161 255)"/>
<path d="M192.0 253.5h1.0M202.5 228.6h1.0M205.3 260.6h1.0M207.4 264.2h1.0M204.9 252.1h1.0M204.6 256.5h1.0M236.6 256.7h1.0M212.7 244.0h1.0M199.4 271.0h1.0M194.4 240.1h1.0M208.6 246.5h1.0M215.1 261.3h1.0M194.3 243.6h1.0M216.1 273.2h1.0M197.1 231.5h1.0M223.6 271.8h1.0M230.3 249.4h1.0M225.7 251.4h1.0M204.7 246.1h1.0M230.6 270.6h1.0M234.9 247.2h1.0M191.0 252.1h1.0M208.5 250.7h1.0M203.3 248.0h1.0M203.6 256.3h1.0M198.6 248.2h1.0M208.0 269.0h1.0M215.2 250.6h1.0M217.5 257.3h1.0M225.2 258.6h1.0M235.1 269.5h1.0M209.4 246.6h1.0M222.4 258.7h1.0M208.7 232.8h1.0M220.8 262.4h1.0M192.0 265.5h1.0M202.5 257.0h1.0M215.8 241.6h1.0M197.2 228.6h1.0M216.1 252.8h1.0M222.8 256.6h1.0M201.1 256.5h1.0M204.5 259.9h1.0M214.4 239.1h1.0M210.0 252.7h1.0M205.7 263.6h1.0M234.0 247.2h1.0M208.2 246.3h1.0M218.3 242.5h1.0M204.8 239.4h1.0M220.7 232.3h1.0M205.6 277.4h1.0M210.7 258.1h1.0M207.9 236.7h1.0M209.5 257.3h1.0M195.7 256.4h1.0M227.4 265.9h1.0M218.5 261.1h1.0M197.7 236.8h1.0M211.1 253.3h1.0M198.0 253.8h1.0M219.0 255.0h1.0M206.4 254.1h1.0M206.4 246.4h1.0M200.3 261.3h1.0M209.3 253.6h1.0M196.4 243.9h1.0M212.3 238.9h1.0M192.4 247.7h1.0M226.8 254.5h1.0M230.4 250.3h1.0M205.7 233.9h1.0M201.9 270.7h1.0M214.6 261.5h1.0M219.9 251.9h1.0M207.1 253.5h1.0M219.4 258.0h1.0M216.9 254.0h1.0M199.2 248.6h1.0M196.8 265.1h1.0M194.1 251.8h1.0M228.1 249.9h1.0M218.6 253.3h1.0M211.0 245.0h1.0M203.1 256.9h1.0M215.7 262.0h1.0M212.0 233.4h1.0M217.4 248.0h1.0M206.0 232.7h1.0M202.0 242.6h1.0M209.5 233.1h1.0M210.7 253.6h1.0M194.3 243.9h1.0M198.0 263.8h1.0" stroke="#2E8E2E" stroke-width="1.0" opacity="1.0"/>
<path d="M207.6 234.3h1.0M201.2 232.4h1.0M217.5 248.2h1.0M210.1 228.0h1.0M190.1 249.7h1.0M198.3 237.7h1.0M203.0 228.7h1.0M207.0 240.2h1.0M204.3 234.0h1.0M204.6 233.7h1.0M208.6 250.2h1.0M208.2 244.6h1.0M207.5 237.5h1.0M200.9 237.4h1.0M205.9 252.8h1.0M194.4 231.9h1.0M213.1 232.1h1.0M218.7 240.5h1.0M192.0 248.9h1.0M215.2 227.1h1.0M214.0 237.5h1.0M213.4 236.6h1.0M208.3 258.9h1.0M215.5 246.3h1.0M197.9 235.3h1.0M197.3 232.5h1.0M201.6 239.7h1.0M223.1 246.8h1.0M195.7 245.1h1.0M205.3 229.4h1.0M199.5 248.5h1.0M204.5 243.4h1.0M192.3 234.3h1.0M200.9 248.3h1.0M192.5 229.9h1.0M210.3 231.6h1.0M209.7 242.2h1.0M207.9 255.7h1.0M206.2 247.0h1.0M191.7 233.7h1.0M205.8 253.8h1.0M212.5 260.8h1.0M202.8 241.8h1.0M209.1 240.2h1.0M199.4 230.6h1.0M208.9 230.4h1.0M204.6 227.2h1.0M209.9 230.7h1.0M196.0 250.6h1.0M192.8 240.6h1.0M202.8 243.9h1.0M190.0 245.2h1.0" stroke="#2E8E2E" stroke-width="1.0" opacity="1.0"/>
<path d="M213.6 182.0h1.0M220.1 185.2h1.0M225.9 201.9h1.0M224.5 187.2h1.0M223.1 203.4h1.0M217.0 181.4h1.0M198.2 194.0h1.0M212.6 195.1h1.0M221.9 178.2h1.0M233.8 202.8h1.0M226.8 180.2h1.0M216.7 186.5h1.0M216.7 180.8h1.0M223.5 194.3h1.0M222.9 186.9h1.0M230.3 193.9h1.0M198.1 185.6h1.0M219.5 201.7h1.0M217.6 189.5h1.0M214.7 198.7h1.0M216.4 186.0h1.0M214.1 197.6h1.0M225.0 185.0h1.0M222.9 195.7h1.0M229.6 202.4h1.0M215.4 190.3h1.0M209.7 208.8h1.0M223.5 205.9h1.0M232.3 192.9h1.0M221.1 192.6h1.0M225.2 197.3h1.0M207.3 202.9h1.0M215.8 187.3h1.0M233.8 201.2h1.0M221.3 197.4h1.0M219.4 179.5h1.0M213.7 179.4h1.0M221.7 200.2h1.0M228.2 184.7h1.0M221.9 197.5h1.0M215.9 190.5h1.0M227.1 187.7h1.0M219.8 203.9h1.0M225.5 192.5h1.0M215.2 190.4h1.0M224.9 184.1h1.0M227.5 182.2h1.0M205.8 181.9h1.0M206.7 178.3h1.0M229.1 190.0h1.0M221.7 203.6h1.0M230.1 187.0h1.0M230.6 195.8h1.0M220.0 196.4h1.0M208.6 184.1h1.0M219.1 198.1h1.0M217.0 190.7h1.0M227.8 206.1h1.0M226.1 204.7h1.0M216.8 188.9h1.0M222.5 189.0h1.0M215.9 208.5h1.0M218.4 182.3h1.0M223.9 210.4h1.0M220.6 204.3h1.0M216.5 187.1h1.0M214.5 190.6h1.0M234.7 180.4h1.0M233.1 181.9h1.0M218.1 200.4h1.0M225.0 194.8h1.0M206.8 195.6h1.0" stroke="#9C2C9C" stroke-width="1.0" opacity="1.0"/>
<path d="M209.4 207.6h1.0M198.2 198.3h1.0M196.5 218.7h1.0M208.9 212.9h1.0M203.8 198.0h1.0M227.5 191.4h1.0M190.4 210.7h1.0M198.3 198.8h1.0M222.9 193.5h1.0M222.5 195.5h1.0M229.9 223.6h1.0M206.3 202.0h1.0M202.0 207.8h1.0M225.8 184.7h1.0M223.0 186.5h1.0M201.7 180.0h1.0M214.9 195.5h1.0M207.4 205.2h1.0M220.1 193.6h1.0M212.3 218.5h1.0M214.3 210.2h1.0M207.8 209.4h1.0M220.7 201.6h1.0M221.1 192.2h1.0M223.1 190.1h1.0M206.5 208.1h1.0M226.7 204.7h1.0M210.8 197.3h1.0M231.6 219.9h1.0M210.9 185.4h1.0M202.5 213.1h1.0M203.3 217.5h1.0M216.3 209.1h1.0M219.8 212.0h1.0M201.7 200.4h1.0M206.3 219.9h1.0M210.1 193.6h1.0M196.1 212.5h1.0M212.6 219.6h1.0M199.6 207.4h1.0M203.9 207.4h1.0M221.0 220.0h1.0M200.1 222.7h1.0M206.3 190.6h1.0M210.0 184.5h1.0M212.1 209.1h1.0M209.6 212.5h1.0M208.2 205.1h1.0M194.7 205.6h1.0M201.8 198.7h1.0M210.9 207.7h1.0" stroke="#9C2C9C" stroke-width="1.0" opacity="1.0"/>
<path d="M165.2 209.5h1.0M181.4 225.8h1.0M189.3 229.1h1.0M200.6 226.0h1.0M184.8 213.7h1.0M173.6 218.3h1.0M188.2 223.8h1.0M185.1 220.8h1.0M192.6 223.7h1.0M188.6 224.5h1.0M178.4 213.8h1.0M190.9 225.3h1.0M182.4 218.7h1.0M212.3 215.9h1.0M182.4 224.1h1.0M171.1 222.9h1.0M206.6 229.5h1.0M192.6 226.7h1.0M186.3 229.7h1.0M183.1 218.6h1.0M186.2 229.2h1.0M189.0 227.4h1.0M160.7 231.5h1.0M213.1 232.7h1.0M181.2 215.2h1.0" stroke="#333333" stroke-width="1.0" opacity="1.0"/>
<rect x="129" y="175.5" width="2" height="105.0" fill="#000" />
<rect x="129" y="278.5" width="130" height="2" fill="#000" />
<path d="M130.0 279.5v3.5M139.7 279.5v2M145.4 279.5v2M149.4 279.5v2M152.5 279.5v2M155.1 279.5v2M157.3 279.5v2M159.1 279.5v2M160.8 279.5v2M162.2 279.5v3.5M172.0 279.5v2M177.6 279.5v2M181.7 279.5v2M184.8 279.5v2M187.3 279.5v2M189.5 279.5v2M191.4 279.5v2M193.0 279.5v2M194.5 279.5v3.5M204.2 279.5v2M209.9 279.5v2M213.9 279.5v2M217.0 279.5v2M219.6 279.5v2M221.8 279.5v2M223.6 279.5v2M225.3 279.5v2M226.8 279.5v3.5M236.5 279.5v2M242.1 279.5v2M246.2 279.5v2M249.3 279.5v2M251.8 279.5v2M254.0 279.5v2M255.9 279.5v2M257.5 279.5v2M129 279.5h-4.5M129 271.7h-2.5M129 267.1h-2.5M129 263.8h-2.5M129 261.3h-2.5M129 259.3h-2.5M129 257.5h-2.5M129 256.0h-2.5M129 254.7h-2.5M129 253.5h-4.5M129 245.7h-2.5M129 241.1h-2.5M129 237.8h-2.5M129 235.3h-2.5M129 233.3h-2.5M129 231.5h-2.5M129 230.0h-2.5M129 228.7h-2.5M129 227.5h-4.5M129 219.7h-2.5M129 215.1h-2.5M129 211.8h-2.5M129 209.3h-2.5M129 207.3h-2.5M129 205.5h-2.5M129 204.0h-2.5M129 202.7h-2.5M129 201.5h-4.5M129 193.7h-2.5M129 189.1h-2.5M129 185.8h-2.5M129 183.3h-2.5M129 181.3h-2.5M129 179.5h-2.5M129 178.0h-2.5M129 176.7h-2.5" stroke="#000" stroke-width="0.8"/>
<text x="156" y="187" font-size="11" fill="#9C2C9C" text-anchor="start" font-weight="normal" textLength="23.7" lengthAdjust="spacingAndGlyphs" stroke="#9C2C9C" stroke-width="0.15">necro</text>
<text x="156" y="198.3" font-size="11" fill="#9C2C9C" text-anchor="start" font-weight="normal" textLength="26.8" lengthAdjust="spacingAndGlyphs" stroke="#9C2C9C" stroke-width="0.15">5.55%</text>
<text x="145" y="213.6" font-size="11" fill="#2424F0" text-anchor="start" font-weight="normal" textLength="14.2" lengthAdjust="spacingAndGlyphs" stroke="#2424F0" stroke-width="0.15">live</text>
<text x="145" y="224.7" font-size="11" fill="#2424F0" text-anchor="start" font-weight="normal" textLength="32.1" lengthAdjust="spacingAndGlyphs" stroke="#2424F0" stroke-width="0.15">85.46%</text>
<text x="203.5" y="260.3" font-size="11" fill="#2E8E2E" text-anchor="start" font-weight="normal" textLength="18.4" lengthAdjust="spacingAndGlyphs" stroke="#2E8E2E" stroke-width="0.15">apo.</text>
<text x="203.3" y="271.3" font-size="11" fill="#2E8E2E" text-anchor="start" font-weight="normal" textLength="26.8" lengthAdjust="spacingAndGlyphs" stroke="#2E8E2E" stroke-width="0.15">6.70%</text>
<text x="126.3" y="297.7" font-size="9.5" fill="#222" text-anchor="start" font-weight="normal" textLength="8.4" lengthAdjust="spacingAndGlyphs" >10</text>
<text x="135.2" y="292.8" font-size="6.4" fill="#222" text-anchor="start" font-weight="normal" textLength="3.5" lengthAdjust="spacingAndGlyphs" >0</text>
<text x="158.4" y="297.7" font-size="9.5" fill="#222" text-anchor="start" font-weight="normal" textLength="8.4" lengthAdjust="spacingAndGlyphs" >10</text>
<text x="167.3" y="292.8" font-size="6.4" fill="#222" text-anchor="start" font-weight="normal" textLength="3.5" lengthAdjust="spacingAndGlyphs" >1</text>
<text x="190.5" y="297.7" font-size="9.5" fill="#222" text-anchor="start" font-weight="normal" textLength="8.4" lengthAdjust="spacingAndGlyphs" >10</text>
<text x="199.4" y="292.8" font-size="6.4" fill="#222" text-anchor="start" font-weight="normal" textLength="3.5" lengthAdjust="spacingAndGlyphs" >2</text>
<text x="222.6" y="297.7" font-size="9.5" fill="#222" text-anchor="start" font-weight="normal" textLength="8.4" lengthAdjust="spacingAndGlyphs" >10</text>
<text x="231.5" y="292.8" font-size="6.4" fill="#222" text-anchor="start" font-weight="normal" textLength="3.5" lengthAdjust="spacingAndGlyphs" >3</text>
<text x="254.7" y="297.7" font-size="9.5" fill="#222" text-anchor="start" font-weight="normal" textLength="8.4" lengthAdjust="spacingAndGlyphs" >10</text>
<clipPath id="sc130"><rect x="90" y="280" width="173.2" height="20"/></clipPath>
<g clip-path="url(#sc130)">
<text x="263.6" y="292.8" font-size="6.4" fill="#222" text-anchor="start" font-weight="normal" textLength="3.5" lengthAdjust="spacingAndGlyphs" >4</text>
</g>
<text x="194.9" y="307.5" font-size="10.5" fill="#222" text-anchor="middle" font-weight="normal" textLength="26.7" lengthAdjust="spacingAndGlyphs" >FL1-H</text>
<text x="112.3" y="284.0" font-size="9.5" fill="#222" text-anchor="start" font-weight="normal" textLength="8.4" lengthAdjust="spacingAndGlyphs" >10</text>
<text x="121" y="277.5" font-size="6.4" fill="#222" text-anchor="start" font-weight="normal" textLength="3.5" lengthAdjust="spacingAndGlyphs" >0</text>
<text x="112.3" y="258.0" font-size="9.5" fill="#222" text-anchor="start" font-weight="normal" textLength="8.4" lengthAdjust="spacingAndGlyphs" >10</text>
<text x="121" y="251.5" font-size="6.4" fill="#222" text-anchor="start" font-weight="normal" textLength="3.5" lengthAdjust="spacingAndGlyphs" >1</text>
<text x="112.3" y="232.0" font-size="9.5" fill="#222" text-anchor="start" font-weight="normal" textLength="8.4" lengthAdjust="spacingAndGlyphs" >10</text>
<text x="121" y="225.5" font-size="6.4" fill="#222" text-anchor="start" font-weight="normal" textLength="3.5" lengthAdjust="spacingAndGlyphs" >2</text>
<text x="112.3" y="206.0" font-size="9.5" fill="#222" text-anchor="start" font-weight="normal" textLength="8.4" lengthAdjust="spacingAndGlyphs" >10</text>
<text x="121" y="199.5" font-size="6.4" fill="#222" text-anchor="start" font-weight="normal" textLength="3.5" lengthAdjust="spacingAndGlyphs" >3</text>
<text x="112.3" y="180.0" font-size="9.5" fill="#222" text-anchor="start" font-weight="normal" textLength="8.4" lengthAdjust="spacingAndGlyphs" >10</text>
<text x="121" y="173.5" font-size="6.4" fill="#222" text-anchor="start" font-weight="normal" textLength="3.5" lengthAdjust="spacingAndGlyphs" >4</text>
<text x="0" y="0" font-size="10.5" fill="#222" text-anchor="middle" textLength="26.2" lengthAdjust="spacingAndGlyphs" transform="translate(100.7,227.3) rotate(-90)">FL3-H</text>
</g>
<g>
<rect x="371.8" y="154" width="43" height="12.5" rx="1.5" fill="#BDBDBD"/>
<rect x="370.3" y="152.5" width="43" height="12.5" rx="1.5" fill="url(#btng)" stroke="#3A3A3A" stroke-width="1.2"/>
<text x="391.8" y="161.8" font-size="8.6" fill="#000" text-anchor="middle" font-weight="normal" textLength="37.5" lengthAdjust="spacingAndGlyphs" stroke="#000" stroke-width="0.2">replicate 2</text>
<rect x="346" y="175.5" width="129" height="104.0" fill="#fff" stroke="#222" stroke-width="1"/>
<rect x="348.5" y="225.5" width="64.0" height="54.0" fill="none" stroke="#3C3CE8" stroke-width="1.2"/>
<rect x="416.5" y="175.5" width="53.0" height="47.0" fill="none" stroke="#A84AA8" stroke-width="1.2"/>
<rect x="415.5" y="223.5" width="53.0" height="56.0" fill="none" stroke="#5AAA5A" stroke-width="1.2"/>
<path d="M385.1 243.8h1M390.0 246.2h1M392.6 260.1h1M359.6 259.1h1M374.3 242.9h1M375.2 251.8h1M393.4 237.9h1M393.6 264.9h1M388.6 254.7h1M381.9 243.1h1M387.9 253.6h1M390.0 269.8h1M390.0 253.5h1M399.2 238.0h1M369.4 251.9h1M374.8 258.9h1M378.5 266.0h1M398.7 254.2h1M377.8 257.6h1M390.9 241.9h1M385.8 256.6h1M384.4 263.5h1M395.4 242.8h1M383.4 245.3h1M388.4 244.0h1M392.2 252.7h1M392.7 248.6h1M366.0 269.0h1M380.1 262.9h1M386.7 256.1h1M402.1 250.2h1M397.4 237.3h1M391.6 248.1h1M380.5 252.4h1M385.8 263.8h1M361.6 256.8h1M374.1 262.6h1M377.3 256.5h1M377.6 258.1h1M393.2 246.5h1M382.5 241.0h1M385.4 257.8h1M375.9 261.9h1M359.2 242.8h1M366.7 251.6h1M382.2 251.4h1M381.3 257.7h1M376.8 243.5h1M368.3 271.1h1M356.1 256.3h1M398.0 252.2h1M372.9 254.0h1M391.5 259.1h1M372.1 260.0h1M384.8 259.8h1M397.3 246.0h1M366.1 258.5h1M401.5 253.0h1M384.5 269.8h1M370.6 261.4h1M375.7 253.7h1M383.0 263.3h1M371.7 250.2h1M364.5 259.5h1M377.0 256.3h1M370.2 251.8h1M393.4 248.2h1M388.9 254.5h1M378.1 240.9h1M392.8 250.9h1M392.8 234.3h1M363.8 239.6h1M372.4 262.1h1M388.2 250.4h1M383.4 257.5h1M378.7 255.7h1M383.5 235.0h1M377.8 263.3h1M377.6 251.9h1M375.3 249.8h1M394.4 247.3h1M370.8 230.7h1M375.7 238.4h1M361.9 262.4h1M389.8 235.7h1M391.4 253.5h1M373.4 259.5h1M364.1 246.7h1M366.2 247.0h1M391.7 239.7h1M369.3 247.5h1M384.2 248.9h1M391.5 244.5h1M367.8 251.2h1M382.4 244.8h1M385.0 265.2h1M375.5 253.7h1M396.8 243.8h1M372.6 245.6h1M386.2 254.9h1M380.2 252.6h1M395.8 255.5h1M366.4 255.2h1M382.9 257.1h1M379.3 247.5h1M376.7 239.4h1M381.4 247.4h1M386.8 242.9h1M376.9 245.4h1M369.9 259.7h1M376.5 256.3h1M369.3 255.2h1M363.0 252.2h1M376.1 257.4h1M383.5 250.0h1M390.8 251.2h1M387.5 256.3h1M380.8 249.7h1M385.1 247.8h1M385.8 259.3h1M390.9 246.8h1M367.4 254.4h1M380.1 260.5h1M377.3 251.1h1M389.6 246.4h1M379.7 265.2h1M397.8 253.0h1M384.4 243.7h1M387.6 250.9h1M383.9 247.3h1M381.3 250.4h1M384.9 261.9h1M385.4 238.3h1M370.8 242.0h1M372.8 257.9h1M385.9 246.2h1M384.4 245.3h1M365.9 244.4h1M372.0 264.6h1M366.8 264.4h1M396.0 247.2h1M380.9 247.2h1M381.2 256.8h1M381.6 259.3h1M394.5 251.5h1M385.0 250.5h1M385.2 242.4h1M385.9 252.3h1M372.0 270.2h1M370.8 247.4h1M384.5 236.3h1M372.7 242.0h1M370.8 253.0h1M384.9 259.4h1M390.3 258.8h1M387.9 246.7h1M393.7 245.3h1M374.7 264.8h1M390.1 251.5h1M389.7 256.6h1M366.4 254.3h1M368.4 255.5h1M374.0 263.7h1M387.1 244.3h1M381.2 242.5h1M381.8 255.8h1M384.3 236.4h1M377.7 256.4h1M384.7 259.8h1M367.3 258.8h1M374.2 254.8h1M385.8 256.0h1M375.0 254.5h1M368.5 243.7h1M387.5 250.0h1M363.6 249.1h1M381.6 263.5h1M392.9 255.3h1M361.7 255.2h1M386.6 253.6h1M385.9 248.9h1M400.7 258.7h1M380.3 244.4h1M403.9 242.6h1M394.5 263.4h1M371.0 256.2h1M377.5 256.5h1M384.9 265.8h1M387.8 250.2h1M393.7 246.9h1M377.3 269.6h1M372.3 249.9h1M381.8 243.5h1M358.2 264.8h1M372.7 249.4h1M377.3 245.1h1M369.5 255.5h1M407.7 251.6h1M389.6 238.4h1M381.1 242.7h1M389.8 248.1h1M381.8 250.9h1M374.9 241.5h1M387.7 239.7h1M368.4 252.3h1M373.6 255.4h1M392.5 251.2h1M383.5 251.4h1M390.8 235.5h1M385.4 243.7h1M367.8 254.7h1M377.1 257.1h1M393.5 231.3h1M380.6 266.8h1M390.9 260.6h1M382.5 240.5h1M369.0 259.8h1M391.9 243.8h1M378.4 254.3h1M362.1 253.2h1M399.2 264.5h1M380.2 265.9h1M375.6 246.8h1M356.7 264.4h1M377.2 270.4h1M385.0 252.3h1M361.5 267.5h1M377.4 251.3h1M357.1 264.1h1M392.2 244.7h1M382.4 254.5h1M392.0 250.2h1M400.3 245.7h1M374.7 249.6h1M353.5 251.6h1M392.5 251.3h1M372.4 256.3h1M359.2 254.4h1M387.2 255.8h1M372.9 260.5h1M402.0 244.0h1M389.6 238.1h1M359.8 261.1h1M381.9 253.1h1M375.0 250.9h1M390.3 262.9h1M379.0 239.6h1M395.4 253.3h1M388.9 251.5h1M407.0 246.7h1M387.1 236.3h1M375.1 247.9h1M381.1 254.5h1M373.2 266.7h1M369.7 250.9h1M384.1 241.6h1M387.7 255.2h1M378.2 267.0h1M382.3 253.7h1M370.9 241.3h1M374.5 250.8h1M376.4 258.7h1M355.2 248.8h1M361.3 266.4h1M375.2 249.2h1M369.3 261.2h1M376.9 254.4h1M359.0 265.6h1M385.8 255.0h1M395.1 247.3h1M379.6 257.6h1M386.1 248.8h1M381.9 247.8h1M389.3 257.2h1M381.5 266.1h1M364.5 253.7h1M400.3 244.4h1M363.8 266.3h1M387.5 241.3h1M390.0 242.1h1M366.7 253.8h1M376.2 244.5h1M377.4 244.9h1M382.1 251.4h1M389.7 246.5h1M366.8 244.9h1M378.8 264.1h1M390.8 244.8h1M391.9 240.6h1M392.7 246.4h1M390.0 254.7h1M378.4 254.9h1M369.7 253.8h1M389.2 250.7h1M370.3 262.3h1M363.2 249.6h1M385.4 241.7h1M398.5 256.4h1M375.2 248.9h1M366.9 244.2h1M386.4 255.5h1M385.4 252.9h1M375.3 255.9h1M365.2 255.4h1M397.8 258.3h1M376.4 250.3h1M396.7 262.1h1M365.0 252.1h1M384.1 260.5h1M372.2 258.7h1M378.2 270.7h1M386.2 249.7h1M377.8 260.7h1M389.0 241.8h1M383.9 241.0h1M373.2 243.7h1M366.9 249.7h1M370.7 258.2h1M390.3 248.0h1M369.1 260.6h1M359.1 241.8h1M389.5 255.0h1M392.3 247.8h1M367.6 250.9h1M387.8 244.5h1M373.8 242.8h1M368.7 261.0h1M386.5 241.8h1M369.6 250.1h1M387.6 241.5h1M379.6 235.7h1M367.6 258.0h1M391.4 240.7h1M373.0 259.7h1M377.2 248.6h1M387.2 252.0h1M393.8 255.2h1M375.2 252.2h1M380.9 241.5h1M370.8 261.6h1M364.0 263.2h1M384.7 250.0h1M387.5 254.1h1M394.9 245.8h1M379.0 250.4h1M402.3 254.5h1M371.3 251.5h1M373.7 253.6h1M383.9 268.8h1M361.4 264.1h1M386.4 245.4h1M379.9 248.4h1M382.1 259.4h1M364.8 265.5h1M377.4 264.2h1M386.1 260.3h1M387.8 258.8h1M382.2 245.3h1M389.0 255.6h1M404.8 231.4h1M379.4 260.4h1M367.8 253.1h1M405.0 257.6h1M371.9 264.9h1M394.7 254.9h1M385.8 252.7h1M372.1 250.0h1M389.7 251.2h1M402.0 244.8h1M355.2 255.1h1M384.7 254.1h1M382.4 245.4h1M398.2 243.2h1M389.5 247.9h1M368.5 265.5h1M354.1 251.4h1M386.5 248.1h1M390.0 249.3h1M376.7 269.5h1M379.3 251.2h1M369.8 248.8h1M388.9 254.6h1M381.8 246.5h1M389.3 237.2h1M378.0 250.8h1M372.5 255.1h1M374.4 247.4h1M401.6 253.2h1M395.0 249.4h1M392.5 255.6h1M395.2 267.1h1M379.4 254.5h1M366.5 255.4h1M388.9 246.0h1M394.4 259.0h1M377.4 263.8h1M401.2 251.3h1M371.1 265.5h1M380.2 249.5h1M383.2 247.6h1M393.8 255.4h1M395.4 253.5h1M373.3 252.7h1M391.6 246.8h1M375.5 262.2h1M390.2 250.0h1M379.5 255.8h1M391.2 255.8h1M378.7 256.0h1M391.3 255.8h1M373.5 252.1h1M384.0 258.6h1M388.8 249.5h1M382.3 265.4h1M375.3 255.8h1M399.2 250.9h1M359.5 259.8h1M377.7 252.1h1M393.6 253.1h1M379.1 259.4h1M386.8 251.8h1M385.3 253.2h1M378.3 249.3h1M382.3 244.7h1M368.2 264.9h1M379.4 252.4h1M380.5 252.5h1M382.2 252.4h1M373.1 261.0h1M374.4 261.6h1M360.9 248.5h1M392.9 248.5h1M374.6 256.5h1M370.5 255.1h1M357.6 253.9h1M374.9 257.7h1M391.6 243.4h1M399.7 243.6h1M359.4 238.8h1M398.9 247.6h1M374.9 247.8h1M370.0 264.9h1M381.1 265.9h1M379.8 234.5h1M391.3 247.2h1M379.4 264.5h1M379.1 261.5h1M381.9 246.3h1M387.6 246.2h1M395.5 256.4h1M382.7 256.5h1M388.2 248.5h1M391.8 248.1h1M388.8 243.3h1M383.1 254.9h1M373.3 250.7h1M376.2 258.9h1M374.1 257.1h1M398.8 251.1h1M364.3 256.9h1M393.5 247.4h1M394.3 254.1h1M386.7 249.0h1M376.4 251.3h1M382.8 255.9h1M386.7 248.7h1M382.8 254.9h1M364.2 250.1h1M373.3 252.4h1M379.1 250.8h1M372.5 259.3h1M385.2 238.9h1M382.3 243.4h1M400.9 244.5h1M377.8 253.7h1M380.0 252.1h1M399.2 250.1h1M391.4 258.7h1M371.5 267.3h1M389.8 257.7h1M372.7 260.4h1M386.7 247.0h1M407.3 250.9h1M379.6 254.2h1M392.2 258.5h1M388.6 260.0h1M398.4 239.1h1M376.9 246.1h1M383.3 262.9h1M389.4 242.6h1M379.0 260.7h1M376.4 252.6h1M385.6 237.5h1M390.8 252.8h1M388.5 243.3h1M373.8 249.4h1M385.0 252.0h1M383.6 265.5h1M396.6 243.5h1M375.0 266.8h1M378.7 263.4h1M399.8 244.1h1M379.3 253.4h1M372.7 246.7h1M377.8 259.6h1M377.3 251.6h1M377.1 242.8h1M398.5 230.7h1M375.0 257.9h1M366.9 260.1h1M396.0 242.5h1M384.5 243.1h1M387.8 251.6h1M384.6 262.0h1M387.4 261.2h1M389.2 241.4h1M385.1 255.2h1M366.3 265.7h1M383.0 254.7h1M372.4 254.8h1M385.5 248.9h1M383.1 235.7h1M397.2 240.3h1M358.2 250.0h1M373.0 258.3h1M372.2 256.5h1M371.7 271.2h1M388.2 265.7h1M371.0 259.6h1M371.7 258.8h1M389.7 238.3h1M369.7 245.9h1M365.6 250.1h1M371.6 243.4h1M383.2 256.0h1M367.7 251.0h1M382.2 250.3h1M374.4 259.9h1M391.5 255.2h1M379.8 267.7h1M401.3 244.8h1M380.8 261.4h1M373.3 257.0h1M382.6 246.6h1M379.6 240.6h1M376.1 238.1h1M407.2 258.1h1M395.6 251.4h1M393.1 259.4h1M393.3 256.6h1M372.0 257.5h1M376.2 244.3h1M369.5 258.0h1M393.6 239.1h1M401.3 259.0h1M377.9 249.4h1M381.2 259.7h1M377.8 244.5h1M385.8 235.4h1M383.6 260.5h1M385.4 257.2h1M387.4 256.4h1M383.6 245.3h1M379.5 252.0h1M395.8 261.4h1M386.6 245.2h1M374.0 252.3h1M397.3 251.2h1M381.4 246.3h1M391.7 252.1h1M381.4 252.9h1M400.6 246.7h1M400.6 257.4h1M382.6 258.6h1M380.6 246.0h1M379.1 245.7h1M387.6 250.9h1M388.2 256.9h1M362.2 257.6h1M372.3 254.9h1M397.0 235.7h1M384.1 250.9h1M361.2 261.5h1M382.4 248.0h1M374.1 278.2h1M377.7 239.2h1M371.8 251.4h1M377.8 252.3h1M370.5 258.6h1M376.7 242.8h1M373.0 251.0h1M391.3 253.7h1M378.3 253.0h1M384.4 267.0h1M375.2 257.0h1M390.0 243.0h1M384.1 252.8h1M376.8 257.5h1M393.3 258.2h1M379.9 253.9h1M407.9 237.9h1M384.4 258.3h1M383.7 256.6h1M383.9 257.3h1M396.1 247.2h1M384.2 251.1h1M377.6 252.8h1M369.6 260.4h1M400.7 260.9h1M396.0 241.6h1M398.7 242.9h1M381.4 266.2h1M370.2 261.0h1M385.1 250.2h1M372.4 257.3h1M376.9 261.1h1M395.5 238.5h1M376.4 250.8h1M369.0 246.3h1M383.0 250.2h1M363.8 251.9h1M387.7 241.5h1M371.8 266.3h1M396.5 236.5h1M367.1 258.1h1M368.9 252.9h1M377.0 257.4h1M354.2 241.3h1M368.5 262.7h1M380.3 239.3h1M387.4 256.2h1M379.3 250.1h1M386.8 260.2h1M383.7 255.7h1M381.5 249.2h1M371.9 256.2h1M378.7 250.9h1M392.2 253.5h1M391.6 237.9h1M388.1 246.2h1M373.1 247.4h1M395.3 255.4h1M374.1 245.0h1M382.2 248.5h1M400.3 236.9h1M361.9 254.4h1M382.1 253.0h1M390.3 266.0h1M378.2 248.7h1M362.6 258.1h1M391.4 248.0h1M395.0 249.4h1M398.7 250.9h1M370.4 249.7h1M365.1 242.4h1M384.9 258.0h1M403.5 246.9h1M379.4 244.1h1M392.9 252.6h1M375.5 258.7h1M388.2 236.4h1M390.2 251.3h1M377.7 249.8h1M401.2 259.5h1M402.1 238.9h1M374.8 260.5h1M368.7 249.4h1M362.2 270.5h1M393.7 252.9h1M384.4 248.3h1M377.6 257.7h1M374.2 263.1h1M376.6 246.5h1M396.3 247.8h1M388.1 247.5h1M357.2 261.6h1M367.2 263.5h1M364.9 241.5h1M385.4 254.5h1M383.2 242.5h1M391.8 238.7h1M376.9 247.1h1M377.8 259.4h1M375.0 257.8h1M389.6 237.3h1M369.2 251.9h1M375.5 255.8h1M360.8 262.1h1M390.2 248.9h1M366.8 255.4h1M376.1 257.6h1M381.1 257.8h1M377.2 264.0h1M356.6 249.8h1M387.4 239.3h1M390.1 240.9h1M383.0 244.8h1M377.1 254.4h1M380.8 249.3h1M405.7 246.9h1M371.3 261.4h1M391.0 259.4h1M401.7 240.5h1M393.7 258.2h1M382.0 253.9h1M401.7 234.1h1M376.1 255.5h1M388.3 263.1h1M362.6 256.6h1M391.5 239.9h1M381.6 266.5h1M396.5 253.0h1M353.2 257.3h1M386.3 248.7h1M381.3 275.7h1M379.6 245.1h1M384.7 249.0h1M378.6 252.1h1M390.5 252.0h1M368.8 253.9h1M387.2 247.3h1M394.6 255.2h1M371.1 256.8h1M403.8 259.1h1M381.4 259.0h1M374.6 242.6h1M388.1 252.6h1M387.7 250.6h1M385.6 247.3h1M387.2 257.2h1M381.4 258.4h1M362.5 250.3h1M397.9 262.0h1M384.8 250.6h1M368.1 257.8h1M390.6 238.8h1M388.1 254.4h1M386.8 242.3h1M388.0 239.3h1M398.4 249.5h1M369.2 265.1h1M394.7 244.3h1M406.2 239.0h1M385.4 260.3h1M357.0 265.1h1M381.3 252.0h1M370.2 257.1h1M369.8 247.3h1M377.1 243.7h1M399.3 238.1h1M373.7 251.4h1M382.0 258.0h1M391.0 247.7h1M377.8 253.2h1M391.0 255.3h1M376.3 237.5h1M405.6 254.1h1M384.9 254.0h1M376.3 245.6h1M378.3 251.1h1M375.1 242.4h1M378.6 257.2h1M376.6 253.4h1M359.2 255.4h1M380.7 242.9h1M363.0 259.3h1M373.1 257.7h1M377.4 257.8h1M378.3 241.3h1M381.0 249.7h1M389.2 247.0h1M377.7 259.5h1M394.8 255.0h1M393.4 253.0h1M390.5 256.9h1M386.4 251.5h1M383.6 270.0h1M382.2 250.2h1M378.0 252.6h1M384.7 242.8h1M360.2 259.0h1M364.3 257.8h1M383.5 260.5h1M400.4 250.8h1M375.9 244.4h1M373.3 254.2h1M359.2 257.5h1M381.9 256.9h1M378.3 253.6h1M373.9 250.2h1M362.5 257.2h1M399.0 249.5h1M386.0 243.6h1M397.7 242.7h1M390.8 250.9h1M371.4 262.1h1M382.2 253.3h1M387.0 250.8h1M377.8 256.5h1M377.5 253.5h1M374.7 242.2h1M374.6 249.8h1M382.2 261.0h1M363.4 257.0h1M357.7 249.3h1M376.4 236.0h1M361.6 257.6h1M382.9 250.9h1M373.2 270.4h1M380.2 245.8h1M400.5 252.7h1M377.9 262.0h1M383.7 256.5h1M384.6 243.6h1M392.7 250.9h1M370.9 248.6h1M392.5 246.9h1M382.5 256.9h1M383.4 240.0h1M389.0 257.6h1M391.5 262.3h1M386.0 257.1h1M399.5 246.0h1M401.1 261.1h1M390.6 264.2h1M391.4 243.2h1M394.5 251.8h1M386.5 252.2h1M397.0 253.0h1M374.3 257.4h1M390.0 244.7h1M377.2 250.1h1M375.3 256.1h1M393.2 264.0h1M395.1 256.9h1M394.6 259.4h1M377.9 258.2h1M385.5 250.2h1M377.0 249.2h1M379.1 243.2h1M387.7 250.6h1M383.2 254.3h1M390.0 245.7h1M380.8 240.0h1M357.6 242.5h1M398.9 234.4h1M387.2 262.1h1M377.0 265.5h1M402.3 254.8h1M408.1 251.1h1M374.0 257.7h1M377.2 243.1h1M368.0 272.7h1M376.1 253.1h1M374.8 254.7h1M379.5 249.5h1M368.8 244.2h1M373.9 256.1h1M405.0 255.1h1M402.2 251.4h1M381.2 242.2h1M382.2 235.7h1M378.9 265.2h1M385.8 259.9h1M378.0 242.5h1M376.9 250.2h1M395.5 264.3h1M374.1 251.2h1M380.6 249.8h1M368.6 255.8h1M386.2 254.2h1M369.0 254.2h1M363.1 263.3h1M371.1 252.5h1M377.4 248.8h1M370.7 241.2h1M401.4 249.9h1M385.2 267.5h1M381.2 256.6h1M382.6 261.2h1M387.9 253.4h1M379.5 254.9h1M395.1 233.5h1M380.9 249.3h1M379.0 237.8h1M390.4 244.0h1M379.9 248.9h1M364.0 252.8h1M362.1 249.4h1M378.9 252.9h1M383.0 251.0h1M405.9 250.4h1M368.9 250.4h1M375.1 252.4h1M375.7 247.1h1M400.5 248.6h1M378.7 251.1h1M380.0 263.3h1M387.6 259.6h1M394.0 264.7h1M382.7 239.0h1M388.9 246.2h1M362.7 251.8h1M394.0 258.8h1M390.3 242.5h1M410.1 237.2h1M381.5 241.4h1M396.9 252.4h1M392.2 250.8h1M381.7 253.7h1M361.7 264.3h1M392.5 247.0h1M382.3 254.5h1M399.7 251.7h1M382.9 248.2h1M365.9 251.3h1M383.3 250.1h1M383.3 257.7h1M387.3 253.3h1M389.7 252.1h1M382.2 255.9h1M363.5 265.9h1M368.3 261.7h1M382.7 260.7h1M382.9 245.0h1M394.3 251.1h1M383.8 252.6h1M393.6 256.1h1M385.1 239.9h1M378.1 254.0h1M402.3 250.9h1M381.6 261.6h1M381.4 252.3h1M384.3 240.5h1M393.1 253.2h1M379.5 244.2h1M384.9 262.5h1M375.5 245.7h1M387.2 239.1h1M358.2 254.2h1M375.0 251.8h1M376.6 256.2h1M380.2 248.3h1M377.6 258.2h1M393.2 256.9h1M371.6 252.3h1M384.9 239.5h1M398.3 251.2h1M375.8 255.0h1M378.8 247.3h1M388.2 247.6h1M367.1 250.9h1M381.4 244.4h1M396.5 241.0h1M402.0 254.9h1M372.3 255.6h1M395.7 248.0h1M369.6 256.0h1M404.6 236.2h1M388.8 251.1h1M381.4 249.7h1M379.2 261.0h1M389.3 243.3h1M399.9 238.7h1M390.0 252.2h1M395.9 252.2h1M394.4 249.6h1M393.5 252.7h1M406.4 241.9h1M395.9 253.1h1M384.7 247.6h1M387.7 240.1h1M367.7 261.1h1M365.7 267.1h1M379.8 255.0h1M383.6 255.4h1M379.7 250.3h1M381.4 260.7h1M395.3 259.4h1M386.8 250.0h1M364.4 261.3h1M392.1 247.3h1M391.7 260.3h1M383.9 260.2h1M386.2 238.4h1M377.6 250.4h1M388.7 244.5h1M378.0 246.1h1M382.4 253.0h1M393.6 256.1h1M384.7 253.8h1M384.0 253.0h1M399.9 229.7h1M380.9 255.2h1M395.3 241.3h1M386.7 258.1h1M377.9 238.9h1M378.9 244.1h1M390.0 244.3h1M402.4 249.2h1M374.0 250.5h1M370.8 258.0h1M399.3 247.2h1M393.0 243.0h1M386.2 269.2h1M367.4 265.2h1M395.8 235.2h1M367.1 248.4h1M393.5 246.8h1M381.0 258.2h1M384.1 253.8h1M379.3 261.8h1M374.3 267.0h1M379.1 247.1h1M389.9 254.3h1M361.0 258.8h1M368.0 249.3h1M391.5 243.9h1M386.7 248.6h1M404.1 247.0h1M369.9 246.8h1M372.8 255.5h1M382.7 259.8h1M384.6 252.9h1M386.3 250.6h1M386.0 257.6h1M391.4 246.3h1M363.3 250.4h1M385.8 232.7h1M377.5 256.9h1M376.5 245.1h1M402.0 258.7h1M379.8 263.0h1M397.0 240.6h1M379.8 244.6h1M383.5 242.1h1M382.6 260.6h1M385.0 249.8h1M399.6 241.7h1M393.2 247.7h1M385.0 252.0h1M384.0 251.6h1M374.0 249.8h1M387.4 250.4h1M369.7 249.7h1M374.9 253.5h1M384.5 252.5h1M375.3 253.9h1M367.4 233.5h1M381.9 239.7h1M372.0 245.3h1M389.3 241.4h1M385.4 247.8h1M368.8 243.1h1M387.4 254.0h1M390.8 264.3h1M385.3 253.6h1M380.9 253.2h1M378.4 246.1h1M404.2 233.1h1M385.0 254.9h1M383.8 244.4h1M380.1 249.0h1M370.3 254.3h1M377.6 248.8h1M389.6 242.3h1M386.9 246.3h1M386.7 251.5h1M384.7 244.0h1M373.5 247.3h1M383.9 257.3h1M393.8 245.6h1M382.9 239.4h1M357.6 250.7h1M374.6 241.7h1M362.4 260.3h1M373.1 241.1h1M407.4 247.7h1M378.4 257.8h1M373.5 265.8h1M364.9 245.6h1M380.3 246.4h1M397.2 236.3h1M373.7 255.4h1M387.9 258.1h1M385.5 267.8h1M376.5 254.3h1M391.1 247.4h1M378.4 249.0h1M374.6 244.8h1M375.5 241.4h1M385.8 238.8h1M404.2 259.8h1M393.7 247.5h1M375.1 262.5h1M383.5 255.6h1M373.6 261.6h1M372.7 254.5h1M362.5 250.9h1M387.0 247.1h1M376.6 258.8h1M380.7 261.4h1M355.0 261.8h1M387.0 238.8h1M367.2 261.5h1M369.7 249.4h1M388.0 247.8h1M386.7 244.0h1M384.7 259.2h1M385.0 234.3h1M388.6 250.6h1M371.5 264.5h1M362.3 270.1h1M374.5 265.2h1M380.9 241.7h1M382.5 254.0h1M387.3 258.5h1M371.6 257.6h1M389.5 247.9h1M371.1 246.7h1M389.6 256.0h1M372.3 243.5h1M395.0 236.9h1M383.1 245.2h1M362.2 256.8h1M379.3 263.1h1M406.3 244.9h1M392.6 257.2h1M375.7 246.4h1M399.0 245.1h1M381.1 249.6h1M379.9 247.4h1M389.6 259.5h1M377.3 242.1h1M381.9 240.3h1M374.4 262.6h1M406.8 249.0h1M369.7 260.2h1M356.8 251.8h1M398.1 253.7h1M366.3 242.4h1M390.7 249.3h1M374.9 256.3h1M375.1 238.5h1M390.2 244.9h1M370.4 244.0h1M384.1 245.0h1M388.2 248.2h1M393.2 246.2h1M374.2 238.3h1M369.4 259.8h1M370.0 256.8h1M386.6 245.4h1M382.3 239.3h1M378.1 259.3h1M399.3 246.5h1M378.6 255.8h1M393.5 252.8h1M373.2 256.2h1M392.0 244.0h1M366.8 258.8h1M385.4 258.2h1M382.4 246.6h1M376.6 245.0h1M371.1 249.7h1M376.1 261.3h1M368.0 254.3h1M375.0 264.4h1M384.3 248.3h1M390.4 250.3h1M376.2 264.5h1M389.2 263.2h1M394.1 254.9h1M382.9 243.2h1M389.2 250.6h1M388.9 250.1h1M374.0 245.8h1M389.2 259.9h1M378.4 255.9h1M396.6 242.1h1M377.8 244.1h1M394.4 251.0h1M376.5 240.3h1M379.6 259.8h1M378.3 249.3h1M388.6 240.9h1M382.1 256.2h1M373.0 247.4h1M384.3 250.4h1M379.0 253.9h1M384.0 244.3h1M374.3 256.8h1M393.8 259.4h1M372.3 262.1h1M389.9 249.8h1M386.9 256.9h1M401.1 239.6h1M388.2 249.3h1M379.4 261.0h1M390.6 242.2h1M378.5 254.2h1M366.2 261.7h1M380.8 253.2h1M385.3 264.7h1M382.0 249.0h1M400.6 243.9h1M375.9 242.6h1M393.4 251.3h1M386.8 252.0h1M380.2 246.2h1M373.2 257.0h1M383.0 263.9h1M373.4 250.0h1M370.6 264.7h1M368.3 260.6h1M397.3 247.4h1M389.6 234.1h1M377.5 240.3h1M383.6 251.5h1M373.3 260.8h1M385.6 247.1h1M376.1 242.0h1M379.7 268.3h1M374.0 256.7h1M375.7 259.2h1M386.5 249.1h1M362.3 252.2h1M394.8 247.2h1M388.6 246.8h1M361.4 259.5h1M385.2 246.7h1M377.7 254.9h1M375.3 255.9h1M379.5 234.6h1M380.2 247.7h1M372.6 256.9h1M376.4 257.1h1M393.6 250.4h1M364.9 250.0h1M391.7 247.8h1M373.0 253.1h1M387.2 252.6h1M388.8 244.1h1M378.8 250.6h1M381.5 236.1h1M379.2 242.3h1M396.9 260.3h1M400.1 254.0h1M376.5 260.3h1M379.6 257.0h1M372.0 249.6h1M386.8 264.2h1M381.5 269.0h1M381.5 244.8h1M380.3 248.2h1M381.1 259.3h1M392.0 251.6h1M381.9 252.8h1M383.2 255.9h1M381.9 255.7h1M367.6 261.0h1M400.8 249.2h1M366.5 265.5h1M378.3 230.2h1M379.5 257.0h1M386.0 260.4h1M388.6 251.4h1M360.4 248.2h1M383.8 256.6h1M370.7 249.8h1M387.0 236.4h1M360.7 254.8h1M384.6 247.7h1M356.9 257.6h1M367.4 260.0h1M380.8 254.2h1M388.8 246.4h1M390.9 259.4h1M386.2 261.0h1M375.0 260.3h1M384.8 243.8h1M381.0 248.1h1M375.9 253.9h1M393.4 247.0h1M383.2 240.6h1M383.0 260.4h1M390.7 253.6h1M376.1 245.8h1M380.9 242.1h1M368.4 262.0h1M371.9 267.7h1M366.3 258.6h1M369.1 256.0h1M370.5 254.7h1M380.2 248.9h1M387.5 262.1h1M375.4 260.0h1M382.8 251.5h1M405.8 230.3h1M374.5 239.9h1M378.5 251.0h1M401.4 257.5h1M377.1 256.6h1M400.1 249.3h1M384.1 255.2h1M365.5 249.4h1M385.5 255.3h1M371.9 251.7h1M380.5 251.1h1M389.4 251.1h1M383.7 240.8h1M370.4 256.9h1M364.5 257.8h1M374.6 247.4h1M388.9 245.3h1M372.5 248.9h1M382.5 272.6h1M358.7 256.8h1M379.2 259.7h1M377.8 234.1h1M396.3 240.5h1M381.1 241.7h1M369.8 250.7h1M391.1 256.2h1M375.2 257.1h1M377.7 253.6h1M383.4 256.2h1M375.0 252.3h1M384.1 252.0h1M373.0 266.8h1M376.7 258.7h1M383.9 260.6h1M357.8 272.6h1M379.4 243.0h1M383.1 268.7h1M387.2 241.3h1M376.6 263.1h1M366.3 253.8h1M378.5 269.0h1M378.5 262.5h1M374.3 247.4h1M392.6 254.2h1M362.8 260.8h1M388.7 245.7h1M384.1 253.4h1M376.3 248.6h1M374.3 251.4h1M367.1 254.7h1M365.3 256.0h1M380.7 244.2h1M391.0 264.5h1M396.1 238.3h1M395.5 250.4h1M381.1 247.4h1M381.6 262.4h1M387.6 247.4h1M374.3 250.3h1M388.0 264.6h1M370.1 254.3h1M377.4 247.0h1M386.0 255.0h1M366.2 247.4h1M394.7 251.4h1M387.3 246.8h1M377.5 256.2h1M376.2 244.6h1M381.6 258.7h1M370.4 262.3h1M389.3 243.6h1M381.7 251.5h1M388.5 255.4h1M367.4 244.7h1M392.8 250.2h1M386.2 253.4h1M398.3 239.1h1M393.5 243.0h1M389.5 260.2h1M366.6 258.2h1M378.6 250.3h1M382.1 243.8h1M371.1 259.1h1M390.8 245.5h1M365.8 272.8h1M393.6 251.9h1M370.4 249.9h1M384.3 244.0h1M399.0 249.1h1M385.9 243.1h1M371.8 248.0h1M384.6 249.2h1M378.5 254.9h1M384.1 262.5h1M379.5 244.7h1M381.5 262.9h1M375.6 253.5h1M377.8 255.7h1M384.4 245.1h1M379.2 259.4h1M393.5 256.2h1M391.0 247.3h1M377.7 259.7h1M368.9 254.2h1M361.5 253.4h1M374.0 244.5h1M387.9 244.9h1M377.7 250.8h1M373.7 264.2h1M376.3 254.5h1M367.5 251.4h1M378.1 250.3h1M375.3 254.3h1M398.5 247.2h1M380.1 249.2h1M409.0 257.9h1M387.7 255.8h1M374.0 252.4h1M383.9 252.2h1M372.4 248.0h1M387.2 253.0h1M358.9 257.5h1M395.4 244.0h1M384.2 240.4h1M390.6 241.5h1M368.2 252.4h1M407.2 241.7h1M368.0 258.3h1M384.1 263.7h1M368.0 242.9h1M378.3 255.4h1M385.5 259.1h1M365.6 249.2h1M380.2 258.4h1M386.8 247.6h1M370.7 260.8h1M391.9 269.9h1M379.8 264.4h1M368.6 250.6h1M374.4 250.0h1M372.2 249.8h1M381.1 248.6h1M388.8 249.7h1M381.7 262.9h1M385.1 252.3h1M381.5 252.4h1M387.9 244.5h1M394.0 260.9h1M394.1 245.5h1M364.5 252.3h1M383.3 257.7h1M379.7 250.0h1M398.1 243.3h1M393.2 256.1h1M367.3 257.1h1M375.7 246.1h1M361.7 244.5h1M386.1 248.0h1M384.6 243.3h1M378.2 250.6h1M365.0 243.1h1M386.4 251.9h1M371.6 253.3h1M388.8 264.0h1M372.1 258.5h1M404.5 247.4h1M397.5 229.1h1M397.3 248.4h1M361.5 262.1h1M393.0 258.4h1M394.6 248.8h1M373.6 250.2h1M381.3 255.0h1M376.5 253.3h1M391.1 252.2h1M406.4 262.6h1M369.3 250.3h1M367.6 246.2h1M387.6 243.1h1M370.4 252.3h1M390.3 247.3h1M377.8 259.6h1M386.8 254.2h1M391.9 242.0h1M384.0 246.6h1M392.8 255.5h1M370.4 264.3h1M369.1 263.4h1M383.9 244.8h1M369.6 252.2h1M381.4 246.6h1M387.8 240.0h1M381.6 251.9h1M361.4 258.6h1M368.0 236.1h1M375.0 251.6h1M391.5 246.1h1M397.6 259.2h1M393.5 259.2h1M385.5 246.8h1M388.7 257.6h1M384.3 249.4h1M364.7 260.6h1M385.5 241.2h1M382.7 257.0h1M380.5 258.0h1M389.8 238.9h1M378.4 256.2h1M391.6 260.3h1M360.9 255.9h1M389.4 259.4h1M400.0 240.8h1M377.6 244.8h1M390.5 239.9h1M394.5 256.1h1M387.0 234.3h1M374.3 259.1h1M366.3 253.4h1M380.5 258.8h1M384.7 253.2h1M376.9 252.9h1M380.2 257.6h1M379.7 260.1h1M363.2 264.9h1M379.8 260.7h1M382.6 258.1h1M397.9 244.1h1M382.5 250.4h1M383.9 239.1h1M379.8 250.4h1M373.1 252.2h1M364.9 266.0h1M386.5 265.0h1M372.1 245.1h1M384.7 238.6h1M384.1 246.0h1M378.0 254.5h1M382.1 265.8h1M388.5 240.6h1M392.3 239.4h1M382.6 242.2h1M372.6 263.7h1M375.6 248.3h1M375.5 250.8h1M397.3 239.5h1M368.2 259.1h1M364.3 252.8h1M393.9 249.1h1M376.4 247.6h1M371.6 249.5h1M383.0 260.8h1M392.0 245.2h1M373.6 258.7h1M361.8 252.8h1M378.0 244.2h1M370.7 256.7h1M363.5 248.8h1M374.4 253.9h1M366.5 263.2h1M378.1 250.5h1M377.5 247.5h1M370.7 262.7h1M383.6 250.4h1M392.1 244.0h1M388.2 250.3h1M371.6 259.5h1M365.1 260.1h1M371.7 256.8h1M396.2 252.6h1M374.7 252.8h1M377.2 243.7h1M369.2 254.6h1M387.0 237.1h1M380.4 255.6h1M382.3 243.8h1M392.3 240.0h1M388.1 262.1h1M359.0 258.3h1M384.5 252.5h1M372.8 251.0h1M365.9 255.8h1M386.8 245.3h1M371.0 250.2h1M380.9 252.0h1M379.9 252.3h1M366.8 234.1h1M387.6 260.7h1M365.7 249.9h1M384.2 257.9h1M388.0 259.5h1M380.4 254.7h1M385.4 247.3h1M393.9 253.3h1M391.5 246.3h1M392.0 241.2h1M385.2 231.0h1M370.0 259.4h1M376.1 253.8h1M363.4 266.9h1M387.3 249.9h1M385.4 253.0h1M396.2 249.8h1M365.1 253.0h1M394.7 252.7h1M376.4 257.0h1M382.2 255.8h1M363.8 248.5h1M388.1 248.3h1M384.7 265.3h1M377.6 254.0h1M374.9 248.1h1M380.1 240.8h1M358.3 266.6h1M379.8 260.1h1M382.2 252.3h1M388.1 255.3h1M368.0 263.3h1M370.5 255.3h1M408.4 246.1h1M398.8 245.0h1M387.5 250.4h1M385.4 244.1h1M371.0 256.1h1M364.1 248.9h1M387.8 245.4h1M371.4 245.3h1M382.5 248.4h1M382.5 249.7h1M400.8 243.9h1M359.9 256.9h1M380.9 252.6h1M363.7 263.7h1M380.6 251.2h1M363.9 258.7h1M380.2 261.7h1M376.5 243.3h1M382.3 244.4h1M385.4 242.5h1M379.5 250.1h1M380.6 247.7h1M372.2 252.9h1M374.7 254.0h1M378.0 235.5h1M380.3 261.9h1M384.2 255.2h1M385.8 246.9h1M366.7 260.6h1M392.2 253.2h1M385.5 253.4h1M380.6 253.6h1M381.1 253.9h1M370.9 249.0h1M387.0 247.7h1M355.2 258.0h1M356.6 270.9h1M388.6 254.8h1M373.9 244.7h1M378.7 252.1h1M372.8 254.4h1M388.2 254.3h1M370.0 238.0h1M381.0 246.7h1M385.7 262.5h1M398.3 249.8h1M392.7 261.0h1M381.5 253.4h1M390.0 249.3h1M375.8 247.2h1M381.1 247.0h1M389.5 247.3h1M396.5 257.0h1M368.0 262.3h1M376.9 262.5h1M386.5 250.1h1M388.2 246.0h1M384.6 253.6h1M379.6 254.8h1M370.7 258.0h1M368.5 258.9h1M386.1 255.7h1M375.4 275.0h1M378.9 253.3h1M373.4 263.8h1M376.3 260.0h1M371.4 256.1h1M377.4 259.3h1M378.3 246.1h1M386.1 242.0h1M371.4 259.5h1M361.8 261.5h1" stroke="#2424F0" stroke-width="1" opacity="1.0"/>
<ellipse cx="382" cy="252" rx="6.6" ry="4.512" fill="#2424F0" opacity="0.45" transform="rotate(12.0 382 252)"/>
<path d="M428.0 243.7h1.0M432.3 256.9h1.0M426.8 250.0h1.0M436.0 258.0h1.0M430.3 245.0h1.0M424.4 246.5h1.0M435.2 256.5h1.0M432.7 263.5h1.0M428.7 248.4h1.0M428.2 267.9h1.0M417.1 254.1h1.0M433.7 252.2h1.0M446.2 261.7h1.0M435.9 244.1h1.0M434.1 248.6h1.0M431.1 253.4h1.0M427.6 257.1h1.0M441.6 260.6h1.0M432.3 235.4h1.0M438.0 260.9h1.0M429.6 247.8h1.0M435.2 245.0h1.0M436.1 242.7h1.0M424.8 252.0h1.0M421.3 251.9h1.0M434.4 240.7h1.0M437.0 247.1h1.0M434.5 253.7h1.0M427.9 247.5h1.0M419.7 246.0h1.0M425.9 265.8h1.0M437.6 240.3h1.0M436.2 253.8h1.0M428.4 255.8h1.0M436.1 247.1h1.0M429.1 253.3h1.0M424.5 253.5h1.0M430.4 246.2h1.0M425.4 254.5h1.0M436.7 254.7h1.0M425.4 258.3h1.0M432.1 257.0h1.0M438.6 244.4h1.0M430.1 246.9h1.0M425.2 268.9h1.0M437.1 237.1h1.0M433.8 247.3h1.0M438.5 252.7h1.0M429.8 253.2h1.0M433.5 252.2h1.0M429.5 250.8h1.0M434.3 242.5h1.0M431.0 251.0h1.0M427.8 258.2h1.0M422.6 248.9h1.0M425.4 256.6h1.0M427.9 252.4h1.0M433.5 238.6h1.0M434.0 245.7h1.0M429.3 251.0h1.0M436.3 258.2h1.0M442.5 253.5h1.0M427.9 247.8h1.0M435.3 265.5h1.0M433.2 247.2h1.0M432.8 254.1h1.0M431.2 245.8h1.0M437.9 253.8h1.0M416.6 252.0h1.0M418.9 268.7h1.0M432.2 241.9h1.0M436.2 245.4h1.0M434.7 252.2h1.0M423.3 257.6h1.0" stroke="#2E8E2E" stroke-width="1.0" opacity="1.0"/>
<path d="M426.2 262.5h1.0M440.6 231.5h1.0M421.4 266.1h1.0M454.9 228.6h1.0M456.9 247.2h1.0M437.7 243.9h1.0M437.2 263.7h1.0M461.5 256.5h1.0M428.8 240.3h1.0M430.7 245.6h1.0M444.1 248.1h1.0M433.9 234.5h1.0M448.7 243.7h1.0M463.1 234.4h1.0M448.1 245.6h1.0M432.2 262.8h1.0M441.3 233.3h1.0M436.7 258.3h1.0M427.4 263.0h1.0M447.0 241.4h1.0M453.9 267.9h1.0M446.2 247.2h1.0M459.0 264.6h1.0M430.5 242.3h1.0M437.8 239.6h1.0M424.6 256.8h1.0M440.9 246.3h1.0M454.5 237.6h1.0M439.4 248.6h1.0M435.5 243.5h1.0M447.9 244.9h1.0M453.7 235.1h1.0M442.1 226.3h1.0M438.8 235.8h1.0M454.1 254.8h1.0M445.3 269.3h1.0M454.9 254.5h1.0M432.9 226.0h1.0M439.7 240.3h1.0M433.3 241.2h1.0M422.9 264.6h1.0M428.2 236.1h1.0M449.5 257.4h1.0" stroke="#2E8E2E" stroke-width="1.0" opacity="1.0"/>
<path d="M439.5 185.8h1.0M438.8 177.8h1.0M447.5 197.6h1.0M437.5 187.6h1.0M443.7 212.6h1.0M435.0 191.0h1.0M432.7 204.0h1.0M441.7 220.5h1.0M440.4 192.5h1.0M437.6 205.9h1.0M433.3 204.8h1.0M442.2 191.7h1.0M436.7 208.0h1.0M449.8 192.4h1.0M443.5 215.2h1.0M438.1 194.4h1.0M435.2 195.5h1.0M440.6 192.6h1.0M437.5 180.5h1.0M434.6 186.8h1.0M444.0 191.7h1.0M437.0 203.9h1.0M443.7 189.1h1.0M438.0 203.9h1.0M442.7 188.3h1.0M442.1 196.7h1.0M446.3 187.9h1.0M445.2 201.5h1.0M436.2 208.0h1.0M445.3 183.2h1.0M450.4 185.0h1.0M436.6 193.6h1.0M444.7 203.1h1.0M440.5 211.3h1.0M442.9 211.7h1.0M454.5 199.0h1.0M428.7 192.2h1.0M435.8 198.0h1.0M441.5 184.1h1.0M435.5 194.2h1.0M445.7 197.3h1.0M441.0 200.1h1.0M436.1 196.5h1.0M446.0 208.4h1.0M443.2 194.0h1.0M437.0 211.0h1.0M443.5 192.5h1.0M430.5 187.7h1.0M431.6 210.3h1.0M441.9 189.0h1.0M446.9 182.6h1.0M440.4 183.8h1.0M432.6 198.9h1.0M452.8 213.8h1.0M441.2 193.0h1.0M442.0 208.1h1.0M433.8 176.9h1.0M450.2 200.0h1.0M448.9 199.6h1.0M448.3 190.4h1.0M443.4 213.8h1.0M446.0 192.0h1.0M445.4 189.8h1.0M434.0 202.7h1.0M447.9 206.2h1.0M434.8 206.4h1.0M444.4 192.0h1.0M428.7 208.0h1.0M445.4 202.4h1.0M432.4 180.8h1.0M446.0 205.8h1.0M443.5 194.3h1.0M443.0 191.1h1.0M439.4 187.5h1.0M442.3 192.4h1.0M445.7 204.9h1.0M437.0 217.1h1.0M435.4 201.9h1.0M446.4 211.0h1.0M430.0 208.0h1.0M447.1 212.8h1.0M429.9 189.6h1.0M440.5 192.1h1.0M447.7 189.6h1.0M447.1 203.2h1.0M433.7 186.1h1.0M438.7 198.1h1.0M446.0 195.0h1.0M445.5 179.7h1.0M425.8 193.3h1.0M443.3 193.0h1.0M436.0 201.6h1.0M450.7 195.9h1.0" stroke="#9C2C9C" stroke-width="1.0" opacity="1.0"/>
<path d="M390.5 219.0h1.0M444.3 197.2h1.0M417.2 221.1h1.0M426.5 199.6h1.0M424.1 214.6h1.0M414.8 220.8h1.0M393.8 223.3h1.0M394.5 229.4h1.0M391.9 227.9h1.0M383.1 228.4h1.0M397.8 220.9h1.0M407.7 215.2h1.0M400.6 204.1h1.0M427.1 201.6h1.0M400.1 214.1h1.0M425.0 200.6h1.0M415.1 221.9h1.0M437.9 210.2h1.0M417.4 202.2h1.0M430.8 213.8h1.0M421.8 215.5h1.0M406.6 213.2h1.0M426.7 216.7h1.0M384.4 235.9h1.0M410.0 222.3h1.0M410.6 223.8h1.0M425.6 214.2h1.0M377.7 238.7h1.0M406.2 208.7h1.0M419.4 200.0h1.0M423.1 221.9h1.0M395.3 230.3h1.0M414.3 218.3h1.0M378.5 236.7h1.0M408.0 222.3h1.0M405.6 226.4h1.0M410.9 220.4h1.0M432.6 205.2h1.0M425.2 209.4h1.0M415.9 208.5h1.0M420.9 219.4h1.0M403.9 224.9h1.0M414.1 205.0h1.0M412.6 224.5h1.0M396.0 209.2h1.0" stroke="#333333" stroke-width="1.0" opacity="1.0"/>
<rect x="345" y="175.5" width="2" height="105.0" fill="#000" />
<rect x="345" y="278.5" width="130" height="2" fill="#000" />
<path d="M346.0 279.5v3.5M355.7 279.5v2M361.4 279.5v2M365.4 279.5v2M368.5 279.5v2M371.1 279.5v2M373.3 279.5v2M375.1 279.5v2M376.8 279.5v2M378.2 279.5v3.5M388.0 279.5v2M393.6 279.5v2M397.7 279.5v2M400.8 279.5v2M403.3 279.5v2M405.5 279.5v2M407.4 279.5v2M409.0 279.5v2M410.5 279.5v3.5M420.2 279.5v2M425.9 279.5v2M429.9 279.5v2M433.0 279.5v2M435.6 279.5v2M437.8 279.5v2M439.6 279.5v2M441.3 279.5v2M442.8 279.5v3.5M452.5 279.5v2M458.1 279.5v2M462.2 279.5v2M465.3 279.5v2M467.8 279.5v2M470.0 279.5v2M471.9 279.5v2M473.5 279.5v2M345 279.5h-4.5M345 271.7h-2.5M345 267.1h-2.5M345 263.8h-2.5M345 261.3h-2.5M345 259.3h-2.5M345 257.5h-2.5M345 256.0h-2.5M345 254.7h-2.5M345 253.5h-4.5M345 245.7h-2.5M345 241.1h-2.5M345 237.8h-2.5M345 235.3h-2.5M345 233.3h-2.5M345 231.5h-2.5M345 230.0h-2.5M345 228.7h-2.5M345 227.5h-4.5M345 219.7h-2.5M345 215.1h-2.5M345 211.8h-2.5M345 209.3h-2.5M345 207.3h-2.5M345 205.5h-2.5M345 204.0h-2.5M345 202.7h-2.5M345 201.5h-4.5M345 193.7h-2.5M345 189.1h-2.5M345 185.8h-2.5M345 183.3h-2.5M345 181.3h-2.5M345 179.5h-2.5M345 178.0h-2.5M345 176.7h-2.5" stroke="#000" stroke-width="0.8"/>
<text x="377.8" y="185.8" font-size="11" fill="#9C2C9C" text-anchor="start" font-weight="normal" textLength="31.6" lengthAdjust="spacingAndGlyphs" stroke="#9C2C9C" stroke-width="0.15">necro 2</text>
<text x="377.8" y="197.1" font-size="11" fill="#9C2C9C" text-anchor="start" font-weight="normal" textLength="26.8" lengthAdjust="spacingAndGlyphs" stroke="#9C2C9C" stroke-width="0.15">5.65%</text>
<text x="349.8" y="210.5" font-size="11" fill="#2424F0" text-anchor="start" font-weight="normal" textLength="22.1" lengthAdjust="spacingAndGlyphs" stroke="#2424F0" stroke-width="0.15">live 2</text>
<text x="349.8" y="221.8" font-size="11" fill="#2424F0" text-anchor="start" font-weight="normal" textLength="32.1" lengthAdjust="spacingAndGlyphs" stroke="#2424F0" stroke-width="0.15">86.02%</text>
<text x="431.7" y="257.6" font-size="11" fill="#2E8E2E" text-anchor="start" font-weight="normal" textLength="23.7" lengthAdjust="spacingAndGlyphs" stroke="#2E8E2E" stroke-width="0.15">apo 2</text>
<text x="431.8" y="269.4" font-size="11" fill="#2E8E2E" text-anchor="start" font-weight="normal" textLength="26.8" lengthAdjust="spacingAndGlyphs" stroke="#2E8E2E" stroke-width="0.15">6.54%</text>
<text x="339.7" y="297.7" font-size="9.5" fill="#222" text-anchor="start" font-weight="normal" textLength="8.4" lengthAdjust="spacingAndGlyphs" >10</text>
<text x="348.6" y="292.8" font-size="6.4" fill="#222" text-anchor="start" font-weight="normal" textLength="3.5" lengthAdjust="spacingAndGlyphs" >0</text>
<text x="371.8" y="297.7" font-size="9.5" fill="#222" text-anchor="start" font-weight="normal" textLength="8.4" lengthAdjust="spacingAndGlyphs" >10</text>
<text x="380.7" y="292.8" font-size="6.4" fill="#222" text-anchor="start" font-weight="normal" textLength="3.5" lengthAdjust="spacingAndGlyphs" >1</text>
<text x="403.9" y="297.7" font-size="9.5" fill="#222" text-anchor="start" font-weight="normal" textLength="8.4" lengthAdjust="spacingAndGlyphs" >10</text>
<text x="412.8" y="292.8" font-size="6.4" fill="#222" text-anchor="start" font-weight="normal" textLength="3.5" lengthAdjust="spacingAndGlyphs" >2</text>
<text x="436.0" y="297.7" font-size="9.5" fill="#222" text-anchor="start" font-weight="normal" textLength="8.4" lengthAdjust="spacingAndGlyphs" >10</text>
<text x="444.9" y="292.8" font-size="6.4" fill="#222" text-anchor="start" font-weight="normal" textLength="3.5" lengthAdjust="spacingAndGlyphs" >3</text>
<text x="468.1" y="297.7" font-size="9.5" fill="#222" text-anchor="start" font-weight="normal" textLength="8.4" lengthAdjust="spacingAndGlyphs" >10</text>
<clipPath id="sc346"><rect x="306" y="280" width="173.2" height="20"/></clipPath>
<g clip-path="url(#sc346)">
<text x="477.0" y="292.8" font-size="6.4" fill="#222" text-anchor="start" font-weight="normal" textLength="3.5" lengthAdjust="spacingAndGlyphs" >4</text>
</g>
<text x="408.3" y="307.5" font-size="10.5" fill="#222" text-anchor="middle" font-weight="normal" textLength="26.7" lengthAdjust="spacingAndGlyphs" >FL1-H</text>
<text x="328.3" y="284.0" font-size="9.5" fill="#222" text-anchor="start" font-weight="normal" textLength="8.4" lengthAdjust="spacingAndGlyphs" >10</text>
<text x="337" y="277.5" font-size="6.4" fill="#222" text-anchor="start" font-weight="normal" textLength="3.5" lengthAdjust="spacingAndGlyphs" >0</text>
<text x="328.3" y="258.0" font-size="9.5" fill="#222" text-anchor="start" font-weight="normal" textLength="8.4" lengthAdjust="spacingAndGlyphs" >10</text>
<text x="337" y="251.5" font-size="6.4" fill="#222" text-anchor="start" font-weight="normal" textLength="3.5" lengthAdjust="spacingAndGlyphs" >1</text>
<text x="328.3" y="232.0" font-size="9.5" fill="#222" text-anchor="start" font-weight="normal" textLength="8.4" lengthAdjust="spacingAndGlyphs" >10</text>
<text x="337" y="225.5" font-size="6.4" fill="#222" text-anchor="start" font-weight="normal" textLength="3.5" lengthAdjust="spacingAndGlyphs" >2</text>
<text x="328.3" y="206.0" font-size="9.5" fill="#222" text-anchor="start" font-weight="normal" textLength="8.4" lengthAdjust="spacingAndGlyphs" >10</text>
<text x="337" y="199.5" font-size="6.4" fill="#222" text-anchor="start" font-weight="normal" textLength="3.5" lengthAdjust="spacingAndGlyphs" >3</text>
<text x="328.3" y="180.0" font-size="9.5" fill="#222" text-anchor="start" font-weight="normal" textLength="8.4" lengthAdjust="spacingAndGlyphs" >10</text>
<text x="337" y="173.5" font-size="6.4" fill="#222" text-anchor="start" font-weight="normal" textLength="3.5" lengthAdjust="spacingAndGlyphs" >4</text>
<text x="0" y="0" font-size="10.5" fill="#222" text-anchor="middle" textLength="26.2" lengthAdjust="spacingAndGlyphs" transform="translate(316.7,227.3) rotate(-90)">FL3-H</text>
</g>
<g>
<rect x="586.8" y="154" width="43" height="12.5" rx="1.5" fill="#BDBDBD"/>
<rect x="585.3" y="152.5" width="43" height="12.5" rx="1.5" fill="url(#btng)" stroke="#3A3A3A" stroke-width="1.2"/>
<text x="606.8" y="161.8" font-size="8.6" fill="#000" text-anchor="middle" font-weight="normal" textLength="37.5" lengthAdjust="spacingAndGlyphs" stroke="#000" stroke-width="0.2">replicate 3</text>
<rect x="561" y="175.5" width="129" height="104.0" fill="#fff" stroke="#222" stroke-width="1"/>
<rect x="568.5" y="229.5" width="69.0" height="44.0" fill="none" stroke="#3C3CE8" stroke-width="1.2"/>
<rect x="634.5" y="176.5" width="52.0" height="38.0" fill="none" stroke="#A84AA8" stroke-width="1.2"/>
<rect x="640.5" y="214.5" width="47.0" height="63.0" fill="none" stroke="#5AAA5A" stroke-width="1.2"/>
<path d="M611.8 242.6h1M631.8 239.6h1M609.3 243.5h1M612.4 242.9h1M598.7 250.1h1M599.8 257.7h1M595.6 251.1h1M601.3 241.7h1M626.6 233.5h1M610.5 259.7h1M584.4 247.2h1M624.9 243.1h1M603.0 249.0h1M598.1 251.4h1M627.0 239.2h1M611.1 253.4h1M632.8 236.2h1M613.0 242.7h1M601.8 247.2h1M602.0 239.5h1M586.0 250.4h1M611.0 253.5h1M603.2 248.1h1M617.2 248.8h1M608.1 247.2h1M631.4 238.1h1M603.7 239.6h1M614.5 243.9h1M631.9 238.0h1M619.0 249.4h1M628.8 233.4h1M627.8 241.2h1M608.2 245.7h1M604.8 246.6h1M582.0 258.8h1M610.2 241.4h1M608.7 260.5h1M613.9 243.4h1M629.5 236.1h1M607.6 244.5h1M606.6 252.1h1M616.2 240.7h1M607.9 248.0h1M604.6 248.4h1M601.0 245.6h1M609.9 241.0h1M614.3 244.4h1M598.6 247.0h1M603.8 247.9h1M610.7 245.4h1M599.2 258.5h1M619.9 244.3h1M620.5 245.4h1M606.4 248.5h1M621.5 240.9h1M616.4 257.6h1M614.3 251.6h1M624.0 246.0h1M627.7 242.5h1M615.1 241.6h1M610.6 254.5h1M603.7 248.8h1M600.2 250.1h1M604.8 251.6h1M607.9 244.1h1M605.9 247.5h1M603.4 254.3h1M617.1 245.4h1M595.5 254.4h1M594.5 252.9h1M609.9 243.5h1M599.7 246.2h1M633.2 237.9h1M606.9 253.2h1M614.2 251.5h1M595.1 245.5h1M606.0 249.0h1M620.8 236.7h1M612.6 245.8h1M617.1 245.5h1M603.2 244.1h1M581.1 261.6h1M592.3 250.2h1M628.5 238.5h1M616.4 243.6h1M617.4 244.6h1M603.4 256.5h1M606.2 240.5h1M605.5 251.3h1M596.5 255.6h1M618.2 256.1h1M601.9 253.1h1M590.0 250.9h1M610.5 249.0h1M608.7 246.7h1M602.2 246.8h1M612.8 249.1h1M616.7 250.3h1M623.0 232.5h1M603.3 248.1h1M601.9 255.3h1M617.9 243.7h1M610.7 253.7h1M605.3 246.6h1M619.7 246.3h1M625.6 243.9h1M617.9 241.2h1M598.5 250.5h1M578.8 259.1h1M620.5 243.9h1M606.8 254.0h1M608.8 252.7h1M634.5 243.0h1M620.1 246.4h1M612.2 247.7h1M610.1 252.9h1M590.8 251.5h1M616.9 239.9h1M608.1 243.6h1M614.4 250.3h1M626.0 244.5h1M601.1 251.1h1M615.9 252.8h1M584.7 257.0h1M588.4 257.8h1M614.4 248.2h1M619.5 245.9h1M601.9 251.4h1M623.1 242.0h1M609.6 240.2h1M622.6 240.0h1M600.8 247.3h1M599.4 248.8h1M623.9 246.8h1M625.6 250.1h1M599.1 253.0h1M626.5 254.4h1M593.1 244.3h1M614.7 243.5h1M597.9 252.8h1M600.3 237.3h1M609.0 247.8h1M616.6 250.0h1M611.4 245.1h1M601.7 240.3h1M604.3 254.2h1M616.7 256.1h1M607.5 237.6h1M618.7 249.8h1M595.9 242.3h1M611.0 250.5h1M596.4 249.3h1M600.4 243.3h1M594.2 252.7h1M605.0 244.7h1M579.3 266.4h1M598.4 249.7h1M596.2 253.3h1M591.9 253.1h1M607.0 252.8h1M596.6 247.4h1M606.5 259.6h1M592.3 254.1h1M601.7 251.2h1M616.6 245.4h1M612.2 247.6h1M602.4 248.0h1M590.2 251.1h1M600.3 248.4h1M617.6 246.4h1M614.5 251.4h1M581.8 258.2h1M608.8 246.6h1M594.1 254.9h1M622.2 248.5h1M608.1 250.9h1M619.6 253.8h1M623.1 243.3h1M610.2 247.6h1M611.7 243.4h1M617.9 240.3h1M599.9 251.9h1M602.5 247.8h1M585.3 259.1h1M609.0 246.3h1M614.3 246.5h1M601.0 260.8h1M603.9 254.1h1M630.0 236.8h1M610.1 242.1h1M621.1 241.3h1M596.4 258.4h1M619.5 238.7h1M622.6 243.7h1M602.7 247.5h1M599.0 251.0h1M609.6 250.9h1M610.0 238.5h1M599.7 257.9h1M622.2 241.9h1M607.5 246.6h1M609.3 237.6h1M619.3 240.0h1M610.7 232.4h1M611.7 253.6h1M583.4 263.7h1M614.4 241.2h1M590.8 259.3h1M612.0 249.4h1M605.9 243.5h1M619.0 238.5h1M619.3 234.4h1M598.4 242.3h1M624.0 232.4h1M595.9 254.9h1M611.6 258.4h1M630.1 243.7h1M616.9 234.3h1M598.9 248.4h1M607.0 240.0h1M598.3 245.7h1M621.2 245.5h1M605.2 246.7h1M612.3 242.0h1M606.0 238.3h1M616.7 249.9h1M613.2 248.3h1M613.2 257.1h1M611.3 238.9h1M597.0 254.8h1M621.2 247.4h1M618.6 244.9h1M591.9 248.5h1M588.2 251.5h1M593.3 252.6h1M607.0 236.7h1M617.4 248.6h1M593.0 252.9h1M617.2 242.7h1M618.8 244.9h1M621.3 244.1h1M607.0 250.5h1M617.9 245.5h1M603.7 244.2h1M604.6 245.1h1M611.2 247.2h1M607.9 247.3h1M610.8 255.1h1M622.8 239.3h1M613.7 243.6h1M607.7 246.0h1M601.6 241.6h1M580.4 257.2h1M622.5 237.5h1M614.7 242.9h1M612.0 241.4h1M606.1 247.2h1M581.3 257.0h1M607.2 233.5h1M616.3 244.4h1M611.1 248.2h1M603.9 242.4h1M603.6 246.2h1M634.5 249.1h1M603.1 246.4h1M612.5 248.9h1M600.7 243.9h1M631.2 245.7h1M590.7 242.7h1M599.1 251.3h1M615.0 243.0h1M589.9 254.2h1M615.7 244.7h1M602.9 252.1h1M608.0 240.8h1M609.8 239.2h1M619.9 246.0h1M597.0 251.9h1M607.0 256.8h1M590.5 251.8h1M592.0 251.9h1M580.6 246.7h1M602.4 249.7h1M613.1 247.9h1M622.1 246.6h1M617.3 238.6h1M606.8 265.7h1M635.2 243.1h1M617.3 249.8h1M603.9 259.7h1M604.2 247.9h1M612.9 235.7h1M601.0 248.9h1M604.5 249.3h1M599.6 249.2h1M594.6 249.2h1M592.3 256.0h1M593.4 255.8h1M603.8 246.8h1M622.6 243.1h1M586.2 257.0h1M574.3 259.5h1M603.9 240.4h1M609.6 244.9h1M632.4 236.8h1M631.7 247.5h1M601.4 244.5h1M624.3 241.1h1M610.5 244.9h1M594.3 249.4h1M597.2 241.7h1M605.2 258.4h1M627.9 240.4h1M610.3 249.4h1M624.8 243.6h1M603.0 246.5h1M622.1 257.7h1M601.2 237.4h1M618.3 243.4h1M610.3 253.6h1M609.5 239.0h1M585.2 254.2h1M594.8 253.1h1M593.4 249.8h1M591.1 250.5h1M603.3 252.1h1M624.7 240.7h1M598.3 261.6h1M613.0 249.1h1M615.9 253.1h1M620.7 247.0h1M617.8 239.0h1M601.4 248.7h1M609.8 246.7h1M612.4 245.9h1M603.6 239.1h1M618.7 247.2h1M598.2 253.2h1M613.4 245.9h1M586.7 247.0h1M601.5 258.7h1M598.4 248.2h1M595.4 248.3h1M612.8 233.5h1M574.7 261.7h1M609.1 243.3h1M620.3 248.9h1M583.6 254.0h1M622.0 238.8h1M604.9 253.7h1M605.5 241.0h1M600.5 241.8h1M615.3 234.7h1M620.7 233.5h1M609.2 238.2h1M604.9 254.1h1M622.1 250.3h1M607.6 247.9h1M611.5 249.7h1M603.9 254.9h1M612.6 252.4h1M614.4 249.1h1M599.9 247.3h1M593.2 250.2h1M606.6 252.5h1M593.6 270.7h1M607.2 254.8h1M605.5 256.6h1M579.6 260.8h1M597.7 247.7h1M611.4 235.2h1M611.0 242.4h1M599.7 253.9h1M615.3 244.5h1M600.0 251.2h1M626.9 242.2h1M619.3 242.2h1M615.7 247.9h1M611.8 239.4h1M595.0 249.9h1M609.8 239.5h1M595.8 254.3h1M621.0 239.7h1M600.2 245.4h1M607.8 253.1h1M636.1 244.9h1M591.4 251.9h1M603.7 246.5h1M593.9 249.3h1M595.5 253.1h1M609.1 238.5h1M588.0 250.7h1M616.4 247.3h1M602.6 244.5h1M604.5 241.1h1M603.3 244.7h1M606.2 247.4h1M607.1 248.5h1M603.6 248.4h1M620.9 247.8h1M612.2 253.5h1M611.2 240.3h1M587.5 249.6h1M607.8 249.5h1M621.5 239.4h1M598.8 254.6h1M622.7 239.6h1M612.6 253.7h1M612.4 245.4h1M583.5 262.7h1M616.3 245.2h1M602.9 241.4h1M607.3 246.7h1M621.7 235.6h1M625.9 241.6h1M622.8 236.7h1M612.7 252.7h1M609.9 237.9h1M604.5 251.3h1M591.7 243.9h1M611.3 240.4h1M616.7 237.4h1M586.4 249.5h1M626.5 236.1h1M608.5 248.4h1M597.1 257.0h1M610.7 248.8h1M588.3 243.2h1M575.4 256.4h1M605.8 252.0h1M626.4 239.7h1M605.3 250.6h1M626.9 236.2h1M616.1 243.1h1M604.5 253.0h1M599.1 243.7h1M616.6 244.2h1M605.4 247.2h1M614.5 242.8h1M617.8 246.4h1M626.4 248.6h1M618.9 242.4h1M610.0 243.0h1M615.3 252.7h1M592.2 247.4h1M603.8 242.6h1M593.4 248.8h1M624.1 246.2h1M609.0 247.0h1M588.7 257.4h1M613.7 239.0h1M611.1 245.0h1M602.4 243.1h1M600.5 244.0h1M614.2 247.3h1M612.5 244.6h1M603.7 260.5h1M586.3 261.1h1M612.9 246.0h1M602.5 247.6h1M594.4 243.4h1M607.3 237.7h1M618.7 250.2h1M611.9 247.1h1M610.0 249.0h1M617.6 249.1h1M630.1 240.2h1M619.0 234.1h1M607.1 240.3h1M625.4 255.2h1M615.2 237.3h1M607.3 247.6h1M611.1 252.6h1M625.1 238.8h1M602.0 257.4h1M605.5 240.0h1M592.8 252.4h1M619.6 252.2h1M606.7 244.9h1M628.2 238.0h1M626.2 242.7h1M611.6 244.7h1M612.3 243.1h1M600.6 248.8h1M600.9 251.2h1M609.7 245.1h1M606.3 246.4h1M629.6 240.2h1M601.6 247.5h1M616.7 243.2h1M606.9 246.0h1M610.7 248.6h1M614.0 235.7h1M595.9 235.7h1M618.3 250.3h1M624.3 242.8h1M622.5 242.3h1M607.3 238.4h1M599.3 246.5h1M619.7 253.1h1M603.1 250.9h1M612.0 241.4h1M588.1 249.2h1M591.5 250.6h1M607.0 246.4h1M606.7 250.4h1M597.5 255.7h1M588.7 253.7h1M613.3 240.8h1M589.6 256.8h1M600.6 254.1h1M617.9 244.0h1M608.7 252.7h1M613.2 240.1h1M610.7 249.5h1M611.1 247.3h1M606.9 246.8h1M597.5 242.2h1M622.1 238.9h1M611.3 237.3h1M610.6 241.5h1M597.1 256.1h1M622.3 230.3h1M611.7 251.1h1M594.1 255.6h1M602.4 243.2h1M604.5 245.6h1M592.1 265.3h1M603.2 244.3h1M618.8 243.3h1M624.6 240.3h1M612.8 246.1h1M610.6 245.1h1M607.4 257.1h1M600.5 246.4h1M604.6 251.6h1M613.4 250.8h1M592.7 253.6h1M606.6 246.0h1M610.6 234.9h1M611.9 246.7h1M591.6 251.8h1M627.1 238.8h1M615.7 243.4h1M599.0 244.7h1M603.9 256.0h1M618.4 239.7h1M620.5 242.4h1M600.4 252.1h1M597.8 241.3h1M624.0 231.4h1M615.1 236.1h1M608.3 245.9h1M603.4 236.0h1M607.4 247.1h1M598.0 250.0h1M620.5 239.0h1M611.7 239.3h1M613.2 249.2h1M613.8 253.4h1M596.9 256.9h1M602.2 245.4h1M621.7 244.1h1M624.4 233.6h1M611.9 242.9h1M605.5 237.0h1M619.8 244.6h1M597.1 242.9h1M598.5 258.3h1M607.6 245.4h1M614.6 245.2h1M611.5 250.4h1M612.7 250.8h1M594.7 251.8h1M604.6 248.9h1M608.4 243.5h1M604.7 253.7h1M602.3 241.9h1M615.9 250.3h1M605.7 248.7h1M599.0 249.0h1M621.9 247.4h1M610.7 244.9h1M589.8 254.9h1M614.3 251.3h1M632.7 241.5h1M620.2 237.0h1M623.1 247.4h1M625.0 245.7h1M614.3 253.8h1M601.2 253.2h1M621.7 238.4h1M595.5 253.8h1M610.5 250.0h1M616.6 240.2h1M613.0 252.2h1M604.9 246.7h1M595.9 255.9h1M632.0 231.9h1M618.0 249.3h1M602.6 247.0h1M596.9 246.5h1M611.1 250.1h1M610.5 251.5h1M611.6 239.6h1M626.2 248.3h1M600.9 259.8h1M614.7 246.0h1M590.4 257.1h1M606.4 242.6h1M626.9 244.2h1M594.3 248.1h1M619.2 254.1h1M585.9 256.0h1M604.8 238.5h1M607.4 238.5h1M603.0 258.3h1M615.3 249.6h1M616.4 246.8h1M620.7 236.8h1M605.2 253.3h1M600.9 247.3h1M623.5 251.3h1M602.3 244.7h1M616.3 246.4h1M601.5 253.0h1M615.9 245.5h1M619.0 249.9h1M601.1 251.6h1M610.3 243.6h1M612.5 247.5h1M608.8 244.5h1M619.2 234.9h1M619.2 244.0h1M612.7 232.5h1M629.2 230.9h1M599.4 254.0h1M602.4 247.0h1M583.3 253.0h1M612.0 250.2h1M606.1 249.4h1M614.7 241.6h1M600.7 261.1h1M599.5 257.3h1M610.4 255.2h1M602.0 252.5h1M613.4 244.5h1M613.2 241.5h1M608.6 245.1h1M618.5 243.7h1M593.2 250.2h1M608.4 242.3h1M625.2 244.4h1M619.5 239.5h1M604.9 254.4h1M592.7 254.6h1M610.6 243.9h1M610.6 240.6h1M612.2 239.3h1M594.5 259.9h1M601.3 237.6h1M621.0 239.0h1M620.5 245.6h1M629.8 239.9h1M616.6 239.0h1M611.5 255.3h1M615.5 246.1h1M586.2 252.4h1M594.4 256.4h1M600.8 252.0h1M597.7 261.7h1M595.7 252.3h1M599.3 253.9h1M621.3 248.3h1M586.3 255.8h1M584.4 266.1h1M610.4 244.2h1M617.5 247.4h1M595.6 261.0h1M606.7 237.9h1M626.1 250.6h1M624.4 245.5h1M599.0 255.9h1M631.6 244.7h1M628.6 236.5h1M621.7 248.6h1M591.9 243.4h1M601.1 250.3h1M615.0 244.1h1M608.8 246.7h1M610.7 250.1h1M615.5 244.9h1M612.7 243.5h1M619.1 241.1h1M629.1 240.7h1M612.9 241.7h1M605.5 249.4h1M609.9 243.4h1M595.8 251.8h1M611.5 249.7h1M624.5 240.5h1M585.9 253.9h1M587.7 246.7h1M621.9 246.5h1M602.0 245.9h1M608.6 237.3h1M615.4 243.2h1M631.6 233.9h1M621.6 239.3h1M621.8 237.5h1M618.4 241.7h1M599.8 249.4h1M615.4 247.6h1M628.5 245.8h1M578.2 254.9h1M585.9 252.5h1M617.1 236.9h1M595.6 252.5h1M606.2 257.4h1M613.5 249.0h1M630.6 237.5h1M609.7 241.3h1M612.8 252.2h1M626.1 241.7h1M601.2 245.4h1M593.0 253.2h1M583.7 263.6h1M590.4 255.2h1M594.6 256.5h1M619.1 245.1h1M619.6 244.2h1M616.5 255.6h1M622.9 239.1h1M600.1 248.8h1M607.0 248.4h1M602.5 253.3h1M610.2 249.1h1M609.9 250.7h1M595.5 261.0h1M614.0 248.4h1M617.2 251.1h1M618.7 245.7h1M607.7 238.2h1M612.4 244.5h1M606.1 262.4h1M587.6 254.6h1M624.4 248.1h1M624.8 235.0h1M598.4 254.5h1M606.4 258.3h1M612.7 247.4h1M615.2 243.9h1M611.4 242.8h1M609.5 244.5h1M613.0 237.9h1M592.1 255.6h1M612.7 240.7h1M607.3 241.9h1M634.5 230.2h1M630.6 235.8h1M615.1 244.0h1M605.5 254.1h1M619.8 242.3h1M599.1 262.8h1M626.9 242.6h1M606.5 250.0h1M611.0 253.9h1M598.5 251.0h1M600.7 257.8h1M631.7 239.7h1M616.5 253.3h1M606.5 242.9h1M622.6 246.1h1M607.6 256.5h1M612.9 235.9h1M614.2 245.5h1M632.7 239.8h1M607.6 250.5h1M613.0 238.0h1M611.5 244.8h1M627.0 255.8h1M596.7 245.8h1M600.0 246.6h1M601.8 250.2h1M623.2 235.4h1M591.6 242.3h1M623.4 250.7h1M591.7 243.6h1M611.7 253.1h1M622.3 244.4h1M618.3 246.5h1M603.5 260.5h1M610.1 240.7h1M604.5 240.0h1M610.3 253.5h1M594.9 258.7h1M635.3 241.3h1M596.2 246.7h1M606.1 241.0h1M595.1 250.5h1M608.0 251.4h1M595.7 262.8h1M622.9 248.3h1M602.3 259.9h1M606.0 259.1h1M623.0 237.8h1M604.7 259.9h1M622.2 242.4h1M612.6 247.6h1M600.9 249.0h1M602.2 247.2h1M615.7 239.8h1M618.9 245.0h1M619.3 249.5h1M625.1 246.1h1M618.6 243.4h1M617.0 239.7h1M607.2 252.5h1M609.5 250.0h1M597.4 259.3h1M603.2 251.7h1M609.9 252.7h1M605.5 242.8h1M587.3 252.7h1M595.8 254.9h1M594.6 254.0h1M625.0 244.2h1M614.0 248.9h1M617.1 254.6h1M617.5 237.5h1M604.4 250.2h1M600.4 248.8h1M603.8 245.1h1M618.5 242.2h1M597.0 247.2h1M610.6 259.4h1M613.3 254.9h1M616.1 232.7h1M614.7 240.7h1M593.8 246.1h1M631.7 231.0h1M602.6 256.4h1M618.2 234.6h1M608.8 244.6h1M607.8 252.4h1M603.2 247.5h1M627.7 230.7h1M605.6 251.4h1M595.1 248.3h1M594.2 253.2h1M602.6 254.2h1M622.4 243.5h1M605.5 250.2h1M610.8 239.8h1M623.0 244.4h1M619.6 236.1h1M620.7 256.2h1M617.5 236.2h1M610.5 246.7h1M612.7 245.0h1M616.1 242.5h1M612.9 242.2h1M611.3 252.7h1M604.1 253.0h1M599.3 248.4h1M607.2 255.4h1M600.8 257.3h1M592.3 251.9h1M621.1 247.7h1M597.8 243.9h1M620.7 236.3h1M617.1 241.8h1M609.9 260.9h1M628.8 246.1h1M593.3 254.4h1M610.7 246.4h1M626.2 231.8h1M613.9 246.7h1M600.9 260.3h1M594.6 252.3h1M611.0 233.9h1M592.6 247.0h1M619.5 249.7h1M617.2 246.3h1M583.3 257.0h1M603.7 256.1h1M626.3 255.2h1M618.6 249.2h1M597.4 251.6h1M595.0 257.3h1M595.4 250.5h1M600.0 247.6h1M615.5 242.0h1M612.6 240.4h1M626.9 237.9h1M622.2 255.9h1M580.3 250.8h1M607.4 254.9h1M604.0 251.3h1M601.0 253.3h1M595.1 256.9h1M573.5 247.6h1M632.1 241.1h1M599.0 263.7h1M622.7 249.7h1M604.7 252.5h1M616.1 235.3h1M617.1 243.7h1M625.6 249.9h1M602.0 246.1h1M612.2 250.3h1M604.8 248.1h1M617.3 247.3h1M624.1 244.0h1M599.0 240.1h1M619.8 242.0h1M605.6 246.8h1M590.6 251.0h1M577.9 255.0h1M598.8 261.6h1M615.3 244.1h1M611.8 250.9h1M600.5 248.7h1M605.4 263.4h1M610.7 235.1h1M619.6 259.5h1M598.0 271.8h1M609.0 253.4h1M602.8 247.7h1M594.6 245.7h1M583.4 262.5h1M595.6 253.9h1M613.8 241.9h1M610.4 246.4h1M603.6 249.4h1M610.4 240.8h1M593.7 247.2h1M611.2 255.0h1M627.9 243.2h1M621.4 244.1h1M623.4 243.5h1M614.6 243.8h1M609.6 258.6h1M594.9 251.9h1M602.4 255.3h1M632.2 238.0h1M575.3 261.9h1M617.3 234.5h1M606.7 247.7h1M581.0 260.4h1M615.1 246.8h1M596.5 247.0h1M601.8 252.5h1M597.4 259.9h1M614.4 232.4h1M630.6 241.3h1M602.8 249.9h1M586.9 255.5h1M579.0 250.7h1M626.5 249.3h1M605.4 242.6h1M621.2 243.1h1M612.2 250.1h1M596.2 256.2h1M583.2 264.4h1M590.0 249.6h1M601.2 254.2h1M618.9 246.3h1M616.3 247.8h1M608.6 235.7h1M580.7 242.3h1M608.9 245.9h1M607.8 249.0h1M606.5 241.9h1M590.7 241.5h1M624.7 247.7h1M592.5 250.8h1M615.0 255.0h1M601.9 250.6h1M623.9 231.8h1M600.2 249.8h1M600.4 262.9h1M620.3 244.8h1M597.4 256.2h1M617.3 241.4h1M603.9 239.9h1M608.4 252.7h1M621.9 246.6h1M619.7 240.1h1M603.5 256.3h1M615.0 240.4h1M615.6 250.1h1M618.2 244.9h1M602.9 251.6h1M630.6 241.1h1M601.0 251.8h1M593.9 253.4h1M605.6 254.1h1M610.6 253.0h1M598.9 253.2h1M608.2 248.3h1M601.8 252.9h1M610.2 233.6h1M606.3 250.0h1M624.0 238.8h1M599.3 257.3h1M601.7 250.1h1M615.2 249.6h1M609.4 240.2h1M621.9 240.4h1M602.8 261.3h1M620.2 237.1h1M603.3 247.5h1M599.9 238.4h1M619.3 248.5h1M612.3 243.6h1M611.9 250.1h1M596.3 249.2h1M602.3 253.5h1M612.5 238.1h1M601.6 260.2h1M597.1 251.8h1M601.4 257.1h1M608.4 244.6h1M594.6 250.2h1M619.5 247.8h1M592.7 261.8h1M606.1 241.6h1M610.8 242.8h1M602.0 245.5h1M608.1 244.4h1M587.9 257.0h1M602.7 256.3h1M615.8 248.6h1M611.4 254.1h1M605.1 242.3h1M604.6 249.8h1M604.0 256.3h1M617.8 244.9h1M604.2 255.2h1M600.7 247.2h1M618.4 247.6h1M634.4 237.6h1M585.8 258.5h1M624.7 241.0h1M628.4 251.6h1M600.8 246.8h1M593.6 255.3h1M618.0 247.8h1M593.8 247.3h1M591.3 243.0h1M592.4 242.8h1M606.8 250.3h1M616.8 244.4h1M600.7 249.6h1M616.1 243.0h1M609.7 244.9h1M602.5 249.3h1M595.2 257.8h1M589.7 256.0h1M592.2 261.5h1M619.8 238.7h1M603.5 242.0h1M608.3 249.7h1M624.3 238.6h1M612.4 251.2h1M615.7 247.4h1M606.6 247.7h1M610.9 253.6h1M590.9 249.9h1M593.6 246.1h1M599.1 256.8h1M635.5 246.7h1M594.4 252.1h1M595.0 254.2h1M624.7 245.5h1M619.7 242.7h1M584.7 242.9h1M607.8 250.8h1M624.7 239.9h1M609.9 248.2h1M622.1 242.4h1M595.5 257.8h1M614.1 247.7h1M593.3 252.0h1M587.8 241.7h1M606.1 245.3h1M616.0 253.4h1M608.6 257.9h1M601.7 253.9h1M593.4 252.8h1M605.1 247.0h1M616.3 233.4h1M610.4 241.7h1M610.4 248.9h1M604.4 246.2h1M594.8 254.9h1M600.7 252.3h1M591.4 260.8h1M596.4 258.0h1M603.5 252.0h1M607.2 251.6h1M609.1 254.6h1M617.3 248.4h1M629.6 236.2h1M625.0 242.3h1M590.8 255.7h1M606.5 257.9h1M602.9 249.2h1M611.9 234.6h1M615.3 239.0h1M626.3 251.4h1M608.9 237.5h1M611.2 247.3h1M617.9 242.4h1M594.3 250.8h1M597.6 261.3h1M600.3 245.9h1M608.4 239.7h1M603.5 247.9h1M603.0 247.4h1M624.3 244.7h1M592.5 249.7h1M618.2 240.2h1M610.0 246.5h1M615.5 243.8h1M607.3 242.4h1M613.4 240.0h1M630.3 240.0h1M606.2 252.6h1M608.0 247.9h1M608.4 242.9h1M597.7 246.4h1M622.9 238.8h1M604.0 245.9h1M617.6 256.1h1M597.6 253.9h1M610.5 244.7h1M615.2 237.4h1M619.2 245.0h1M596.7 260.5h1M619.5 250.6h1M591.1 251.1h1M602.6 252.8h1M625.6 230.3h1M609.2 246.2h1M621.3 242.8h1M593.4 250.8h1M596.3 246.4h1M609.5 244.0h1M612.4 236.8h1M617.8 236.4h1M582.5 250.3h1M606.1 261.3h1M625.0 238.7h1M623.8 249.6h1M609.2 254.2h1M613.0 241.8h1M594.6 250.9h1M621.2 235.0h1M589.2 256.6h1M575.7 268.6h1M603.6 253.1h1M631.8 231.0h1M596.1 264.5h1M605.5 247.4h1M611.8 252.4h1M625.3 242.4h1M604.9 248.1h1M612.7 253.6h1M610.7 257.3h1M598.5 253.6h1M630.5 247.8h1M613.1 240.4h1M600.3 248.9h1M612.8 244.3h1M591.1 248.3h1M615.4 250.0h1M591.8 250.3h1M588.5 250.2h1M604.8 244.8h1M594.2 240.7h1M608.5 245.5h1M627.1 231.4h1M614.3 253.3h1M585.0 258.6h1M589.2 256.5h1M627.1 241.2h1M612.5 241.7h1M612.5 252.6h1M606.8 246.9h1M613.8 250.4h1M588.9 253.8h1M600.6 252.7h1M621.7 244.8h1M624.9 236.0h1M604.0 242.7h1M609.7 247.3h1M606.6 240.5h1M608.1 244.7h1M616.4 243.0h1M623.3 243.8h1M586.2 253.3h1M591.5 258.4h1M626.6 241.2h1M614.5 236.6h1M581.4 252.5h1M605.9 239.0h1M610.1 248.5h1M616.9 253.7h1M619.0 241.6h1M610.3 250.2h1M596.2 259.1h1M620.1 242.1h1M601.2 272.3h1M619.4 249.3h1M631.1 245.8h1M611.6 250.4h1M597.8 254.9h1M590.1 255.6h1M615.9 235.5h1M632.6 232.6h1M621.9 239.7h1M612.9 241.9h1M631.4 244.6h1M617.7 245.2h1M606.2 251.6h1M611.2 245.5h1M592.3 250.6h1M616.7 241.8h1M613.5 244.8h1M596.6 245.7h1M600.1 248.2h1M606.0 254.8h1M595.9 239.1h1M617.7 241.6h1M607.8 262.8h1M627.3 244.8h1M620.9 244.0h1M621.1 239.6h1M600.6 247.1h1M628.8 250.2h1M601.9 256.4h1M607.4 254.1h1M605.4 254.1h1M608.0 245.8h1M609.1 248.1h1M602.2 241.2h1M630.3 238.0h1M587.0 240.6h1M574.9 254.5h1M626.2 231.9h1M605.5 237.3h1M623.0 244.9h1M613.4 253.9h1M629.7 246.8h1M602.3 241.4h1M596.6 240.7h1M631.7 238.8h1M611.1 247.7h1M634.4 235.7h1M624.1 244.2h1M607.6 236.1h1M620.8 239.0h1M603.8 250.3h1M610.7 253.5h1M601.2 250.7h1M612.9 246.1h1M617.9 242.9h1M624.4 238.0h1M591.7 252.5h1M624.1 239.3h1M601.8 247.5h1M611.5 245.4h1M613.4 235.5h1M628.0 244.7h1M598.9 258.8h1M615.1 254.2h1M595.0 261.7h1M610.1 234.5h1M618.8 242.3h1M597.0 249.8h1M585.5 258.3h1M606.8 246.3h1M627.0 241.7h1M601.3 244.0h1M608.8 253.7h1M602.3 243.1h1M620.9 243.8h1M609.2 259.7h1M594.5 253.1h1M587.6 252.3h1M616.8 251.5h1M593.8 257.2h1M619.2 243.2h1M598.6 253.1h1M586.5 263.9h1M621.7 240.8h1M617.1 247.9h1M633.4 235.7h1M593.6 240.0h1M605.9 238.8h1M607.4 250.2h1M604.0 243.1h1M624.2 241.2h1M612.4 251.9h1M593.4 246.7h1M596.6 249.7h1M602.4 242.0h1M604.4 248.6h1M609.3 250.4h1M588.1 244.9h1M619.2 241.3h1M624.5 244.1h1M592.1 255.9h1M597.0 252.7h1M624.7 254.9h1M608.6 251.6h1M613.2 250.7h1M578.0 254.8h1M613.1 248.8h1M600.2 255.0h1M623.1 243.1h1M606.7 245.8h1M611.2 253.6h1M628.0 238.3h1M598.0 246.0h1M621.6 244.5h1M613.2 248.8h1M614.1 244.9h1M596.7 247.5h1M611.0 249.0h1M604.9 246.1h1M626.4 238.9h1M612.2 244.3h1M598.9 241.4h1M602.9 244.3h1M619.9 236.9h1M604.4 252.6h1M608.1 250.5h1M619.8 233.9h1M604.4 243.0h1M626.1 241.1h1M615.6 255.3h1M605.1 248.9h1M614.5 243.9h1M624.9 247.0h1M621.8 243.4h1M605.3 246.3h1M605.0 238.7h1M613.9 250.5h1M609.4 244.2h1M609.9 248.3h1M613.5 256.5h1M599.0 252.6h1M617.9 244.8h1M606.6 241.9h1M602.2 253.6h1M627.2 237.5h1M615.2 248.3h1M621.8 244.6h1M614.9 250.7h1M595.3 251.9h1M588.0 242.3h1M599.4 241.2h1M615.6 251.0h1M605.7 247.4h1M606.6 246.4h1M611.1 248.6h1M603.8 244.2h1M603.1 253.8h1M604.3 257.3h1M606.5 256.1h1M595.0 247.6h1M615.2 248.1h1M607.5 259.7h1M610.3 248.5h1M602.5 259.0h1M619.8 246.2h1M589.6 255.6h1M603.8 251.2h1M620.4 239.1h1M612.0 251.4h1M611.4 244.5h1M596.6 247.2h1M594.1 257.8h1M610.7 239.5h1M609.3 239.5h1M623.5 233.9h1M600.7 251.0h1M604.8 243.5h1M603.2 247.6h1M602.7 250.4h1M606.6 243.5h1M609.7 237.2h1M626.8 231.3h1M608.4 249.4h1M614.3 247.0h1M624.6 235.6h1M608.5 248.2h1M603.4 245.5h1M624.8 237.9h1M603.6 247.3h1M606.8 248.8h1M606.8 250.0h1M611.0 249.3h1M625.8 236.8h1M629.1 238.1h1M617.3 245.4h1M605.8 236.7h1M628.6 236.4h1M599.9 256.3h1M610.2 257.9h1M629.4 244.7h1M612.3 250.5h1M593.5 253.1h1M611.0 243.7h1M612.3 237.6h1M620.1 251.1h1M593.8 252.9h1M627.7 243.6h1M596.9 245.2h1M619.5 254.4h1M596.3 251.4h1M600.0 248.4h1M612.9 245.6h1M601.1 261.9h1M607.4 246.6h1M622.5 242.9h1M606.8 253.3h1M596.9 255.3h1M621.5 246.9h1M607.1 247.7h1M588.8 252.8h1M612.7 251.0h1M610.9 244.2h1M599.3 250.0h1M610.8 253.5h1M609.3 244.1h1M608.0 244.6h1M606.4 235.2h1M590.3 246.2h1M614.8 244.8h1M611.0 253.2h1M596.8 257.6h1M613.8 241.4h1M626.9 233.1h1M595.8 250.1h1M614.0 244.4h1M583.9 253.4h1M608.2 262.1h1M625.5 242.5h1M596.3 253.2h1M595.4 252.6h1M613.5 243.3h1M612.2 244.2h1M602.4 258.1h1M616.1 243.0h1M600.1 251.0h1M615.9 249.8h1M626.7 244.1h1M595.9 263.0h1M622.9 247.4h1M625.0 233.4h1M604.8 245.5h1M623.3 235.7h1M605.4 257.0h1M616.8 242.3h1M631.4 232.2h1M614.5 244.0h1M615.2 243.5h1M599.3 251.4h1M593.6 255.1h1M605.4 253.6h1M603.9 244.8h1M613.9 252.6h1M584.6 255.6h1M616.6 236.5h1M598.7 254.1h1M599.4 246.5h1M629.5 235.1h1M598.9 237.0h1M596.2 244.1h1M629.4 247.5h1M594.2 263.1h1M618.2 243.1h1M618.7 246.1h1M600.1 239.8h1M598.4 250.4h1M604.9 244.1h1M620.6 237.2h1M619.6 240.9h1M610.4 240.1h1M609.0 242.5h1M588.5 253.5h1M608.5 252.0h1M612.5 240.1h1M601.8 235.0h1M595.8 258.7h1M627.0 245.7h1M612.7 249.3h1M614.8 235.2h1M598.8 257.2h1M623.0 243.9h1M605.4 246.0h1M602.6 243.7h1M586.3 255.2h1M603.7 247.5h1M629.4 243.9h1M600.8 253.0h1M591.2 258.8h1M612.2 244.9h1M615.8 253.2h1M603.6 243.1h1M634.1 239.1h1M626.8 237.4h1M613.5 241.9h1M616.6 243.0h1M601.1 258.5h1M613.1 234.0h1M606.3 242.6h1M594.6 248.3h1M603.4 249.0h1M599.6 239.3h1M602.7 254.1h1M592.8 255.8h1M614.5 242.7h1M612.7 241.5h1M604.3 242.6h1M614.6 253.2h1M600.9 256.5h1M583.6 250.0h1M597.0 260.9h1M602.0 253.8h1M584.6 255.5h1M615.8 244.6h1M576.5 258.5h1M618.7 251.6h1M613.8 235.7h1M606.5 253.1h1M599.2 253.4h1M603.3 249.4h1M618.1 240.0h1M613.1 241.4h1M609.7 245.2h1M591.5 243.7h1M612.4 245.4h1M577.5 244.6h1M605.3 247.8h1M616.3 237.4h1M616.1 242.9h1M602.9 248.1h1M620.8 246.5h1M619.7 239.6h1M605.6 241.3h1M602.4 246.8h1M603.4 253.0h1M614.1 249.8h1M610.5 252.8h1M610.4 252.2h1M615.0 249.4h1M608.2 240.0h1M591.7 264.0h1M613.7 248.1h1M607.0 245.0h1M608.2 246.9h1M595.4 243.9h1M600.6 247.7h1M603.2 253.6h1M594.9 253.9h1M626.6 246.6h1M595.3 234.1h1M619.1 246.6h1M602.0 256.7h1M604.1 249.2h1M596.5 252.9h1M603.8 245.7h1M622.0 244.1h1M591.1 256.8h1M619.0 238.9h1M604.3 248.8h1M606.0 248.7h1M616.8 241.6h1M634.0 234.8h1M602.5 260.6h1M606.8 241.4h1M622.7 243.6h1M598.8 252.6h1M625.4 245.7h1M635.5 245.3h1M614.3 245.1h1M615.6 252.0h1M619.3 249.9h1M611.7 250.6h1M623.6 241.4h1M593.4 262.1h1M616.0 242.2h1M611.8 244.7h1M588.5 252.5h1M591.9 253.7h1M607.7 254.0h1M607.6 249.6h1M605.4 245.9h1M592.2 258.2h1M611.0 242.9h1M611.5 243.8h1M600.3 251.2h1M623.6 240.7h1M591.9 248.9h1M630.6 235.3h1M623.3 241.0h1M617.9 243.5h1M590.1 250.7h1M634.3 238.1h1M615.8 242.9h1M607.4 249.4h1M614.7 258.2h1M608.8 246.0h1M601.1 241.9h1M589.7 257.1h1M586.7 262.4h1M619.3 242.0h1M595.2 251.6h1M609.3 253.5h1M600.1 247.7h1M608.4 245.6h1M601.5 239.4h1M589.4 249.4h1M606.3 253.7h1M613.8 256.5h1M607.6 244.4h1M604.1 247.1h1M626.6 237.9h1M618.4 241.6h1M594.4 253.1h1M611.1 239.6h1M598.7 245.7h1M620.6 246.0h1M611.9 249.0h1M603.3 251.6h1M601.8 241.6h1M600.6 250.9h1M610.1 252.8h1M588.8 252.2h1M613.8 239.9h1M612.1 243.7h1M595.5 257.9h1M592.4 258.2h1M604.1 243.1h1M598.5 246.1h1M598.9 251.8h1M586.7 261.5h1M619.1 251.9h1M597.3 237.3h1M601.6 248.4h1M612.7 242.8h1M608.1 248.2h1M590.5 263.5h1M595.6 252.9h1M622.0 238.3h1M609.2 256.5h1M605.7 254.2h1M612.6 247.2h1M617.7 242.9h1M606.6 253.4h1M612.3 248.9h1M594.8 251.7h1M623.7 247.6h1M613.3 242.7h1M601.8 251.9h1M626.2 241.8h1M624.8 240.3h1M623.6 236.6h1M611.4 240.1h1M617.1 247.8h1M597.8 246.3h1M603.9 240.0h1M598.1 245.5h1M618.6 252.1h1M603.9 247.1h1M611.7 243.2h1M605.8 253.0h1M611.9 245.6h1M602.3 257.8h1M601.8 250.1h1M596.8 247.5h1M610.3 244.4h1M615.6 245.4h1M592.6 238.9h1M621.1 239.8h1M626.9 241.4h1M600.0 253.2h1M605.9 248.1h1M598.0 254.3h1M622.3 239.7h1M630.5 236.8h1M612.2 236.5h1M586.1 266.7h1M626.2 248.3h1M588.8 254.9h1M614.2 245.9h1M612.7 240.5h1M607.2 241.0h1M605.0 250.5h1M599.8 248.4h1M604.0 248.8h1M620.2 244.9h1M613.9 237.1h1M604.8 253.2h1M598.8 247.8h1M597.5 258.5h1M603.7 244.5h1M616.5 251.1h1M615.0 250.9h1M611.7 245.5h1M603.8 245.7h1M602.0 251.5h1M607.8 248.0h1M616.4 244.4h1M592.7 247.7h1M595.7 240.2h1M610.3 239.6h1M593.7 245.7h1M619.6 241.8h1M621.1 242.6h1M603.9 252.0h1M616.2 245.4h1M596.6 248.3h1M594.9 250.0h1M610.2 255.3h1M626.0 245.5h1M620.5 244.7h1M614.0 251.6h1M611.3 248.1h1M597.2 256.3h1M610.7 251.2h1M606.4 237.5h1M615.0 251.9h1M593.7 246.3h1M605.4 246.7h1M588.6 263.8h1M621.1 239.5h1M587.3 256.1h1M632.8 244.2h1M622.9 237.1h1M611.8 237.3h1M632.7 242.7h1M583.7 244.3h1M614.8 246.0h1M605.3 251.8h1M633.1 241.4h1M587.3 253.0h1M593.3 247.3h1M612.9 244.7h1M596.2 250.9h1M599.2 253.2h1M606.0 250.2h1M605.7 252.4h1M607.3 247.4h1" stroke="#2424F0" stroke-width="1" opacity="1.0"/>
<ellipse cx="609" cy="247" rx="7.199999999999999" ry="3.948" fill="#2424F0" opacity="0.45" transform="rotate(22.0 609 247)"/>
<path d="M644.6 243.5h1.0M643.9 243.0h1.0M645.1 236.5h1.0M650.4 236.3h1.0M645.4 226.7h1.0M642.4 229.0h1.0M658.7 227.2h1.0M641.5 244.0h1.0M656.5 223.2h1.0M649.9 226.3h1.0M652.4 241.4h1.0M652.4 240.6h1.0M647.7 248.6h1.0M647.2 244.4h1.0M642.4 235.2h1.0M650.7 239.2h1.0M643.4 249.0h1.0M651.2 241.7h1.0M643.3 251.6h1.0M662.9 232.7h1.0M642.3 227.9h1.0M653.0 258.0h1.0M652.3 236.5h1.0M654.4 235.0h1.0M645.8 228.8h1.0M655.2 252.8h1.0M645.1 238.3h1.0M648.1 243.9h1.0M652.9 242.4h1.0M650.2 225.2h1.0M646.0 222.0h1.0M658.5 257.0h1.0M652.1 253.9h1.0M659.9 252.0h1.0M650.2 231.5h1.0M646.1 244.7h1.0M646.9 239.7h1.0M652.6 244.5h1.0M649.4 230.9h1.0M651.8 232.8h1.0M645.8 240.4h1.0M661.1 238.1h1.0M644.4 249.5h1.0M645.0 243.7h1.0M647.7 227.4h1.0M655.9 239.0h1.0M646.6 227.1h1.0M653.0 234.6h1.0M641.4 243.4h1.0M648.8 236.9h1.0M648.2 253.0h1.0M658.0 235.8h1.0M652.1 238.9h1.0M641.4 255.7h1.0M650.1 243.1h1.0M649.9 239.8h1.0M641.4 261.1h1.0M653.2 244.4h1.0M653.5 255.7h1.0M646.6 248.0h1.0M645.8 248.6h1.0M646.2 268.3h1.0M645.6 247.2h1.0M650.5 237.9h1.0M653.4 240.6h1.0M645.3 241.6h1.0M643.2 254.7h1.0M651.5 252.3h1.0M643.1 242.5h1.0M655.4 244.4h1.0M646.7 253.9h1.0M653.8 261.9h1.0M645.3 231.9h1.0M648.4 228.8h1.0M646.2 262.1h1.0M643.4 228.7h1.0M646.3 243.2h1.0M654.7 247.1h1.0M649.9 245.4h1.0M641.5 253.4h1.0M641.5 262.6h1.0M649.1 221.3h1.0M653.0 263.3h1.0M646.2 253.3h1.0M646.5 234.6h1.0M645.1 245.7h1.0M654.5 237.3h1.0M645.4 227.7h1.0M649.0 250.1h1.0M645.0 239.5h1.0M644.1 239.9h1.0M657.9 239.1h1.0M645.6 261.2h1.0M649.1 239.1h1.0M652.8 256.0h1.0M643.2 257.4h1.0M653.0 246.6h1.0M656.2 238.6h1.0M661.7 242.5h1.0M641.7 248.2h1.0M649.6 250.9h1.0M646.5 256.1h1.0M644.5 243.2h1.0M649.1 234.4h1.0M645.1 239.4h1.0M649.4 250.2h1.0M652.5 253.1h1.0M649.1 235.7h1.0M643.0 221.6h1.0M657.8 221.3h1.0M650.0 247.9h1.0M646.4 270.5h1.0M648.0 233.2h1.0M658.5 232.9h1.0M644.0 242.3h1.0M649.9 224.8h1.0M650.0 266.6h1.0M643.5 240.3h1.0M652.1 255.2h1.0M643.8 231.0h1.0M641.7 254.0h1.0" stroke="#2E8E2E" stroke-width="1.0" opacity="1.0"/>
<path d="M642.9 181.5h1.0M646.5 196.5h1.0M656.1 210.7h1.0M659.3 193.9h1.0M661.5 184.7h1.0M647.1 193.1h1.0M660.1 178.0h1.0M659.9 200.7h1.0M652.1 194.3h1.0M653.3 193.5h1.0M659.4 185.5h1.0M660.7 200.8h1.0M644.5 199.1h1.0M651.6 186.5h1.0M650.6 180.5h1.0M653.3 186.2h1.0M651.2 197.2h1.0M648.3 203.1h1.0M647.3 198.1h1.0M660.0 192.8h1.0M659.0 191.8h1.0M645.0 196.0h1.0M661.3 187.7h1.0M645.4 187.3h1.0M656.7 195.6h1.0M661.1 197.9h1.0M667.3 193.2h1.0M659.7 189.6h1.0M654.0 193.3h1.0M663.7 206.7h1.0M658.3 211.0h1.0M652.7 197.6h1.0M652.3 204.7h1.0M655.1 201.8h1.0M667.1 195.8h1.0M655.4 191.3h1.0M665.2 189.9h1.0M660.9 203.6h1.0M666.5 190.6h1.0M659.2 178.9h1.0M648.7 190.4h1.0M654.8 181.7h1.0M652.6 199.4h1.0M652.4 191.5h1.0M649.9 205.7h1.0M665.0 194.8h1.0M654.3 208.3h1.0M657.7 186.8h1.0M647.4 187.5h1.0M667.3 187.5h1.0M671.3 192.9h1.0M653.7 205.2h1.0M653.6 196.4h1.0M649.1 181.5h1.0M650.8 195.0h1.0M657.7 191.4h1.0M653.4 187.3h1.0M642.3 207.6h1.0M652.3 197.8h1.0M662.8 203.4h1.0M656.1 193.1h1.0M656.7 201.4h1.0M658.3 188.9h1.0M657.5 196.5h1.0M658.9 194.9h1.0M662.7 194.8h1.0M660.0 193.4h1.0M651.7 184.2h1.0M654.1 197.9h1.0M662.1 192.2h1.0M652.1 188.3h1.0M662.3 194.0h1.0M652.2 199.8h1.0M647.5 194.1h1.0M654.8 191.8h1.0M648.5 202.1h1.0M664.5 180.8h1.0M655.7 198.9h1.0M667.7 189.1h1.0M649.6 193.0h1.0M666.4 193.6h1.0M656.5 209.4h1.0M660.1 200.1h1.0M647.2 197.8h1.0M655.2 195.0h1.0M650.5 188.8h1.0M650.1 193.5h1.0M653.7 208.5h1.0M658.5 178.5h1.0M657.3 206.2h1.0M656.6 203.0h1.0M654.8 199.5h1.0M649.7 200.3h1.0M647.2 204.9h1.0M658.0 191.4h1.0M655.6 196.9h1.0M654.8 184.8h1.0M656.2 196.2h1.0M657.8 211.3h1.0M650.9 193.6h1.0M658.2 188.9h1.0M648.2 187.8h1.0M661.0 190.5h1.0M658.5 186.2h1.0M657.5 186.8h1.0" stroke="#9C2C9C" stroke-width="1.0" opacity="1.0"/>
<path d="M603.6 225.7h1.0M614.6 236.3h1.0M594.0 232.0h1.0M633.8 230.4h1.0M609.3 216.5h1.0M607.9 226.5h1.0M616.3 224.8h1.0M621.4 209.7h1.0M600.1 213.5h1.0M597.5 225.2h1.0M617.8 245.8h1.0M620.6 220.5h1.0M631.5 210.4h1.0M618.2 230.5h1.0M623.7 223.5h1.0M609.7 210.9h1.0M612.1 216.6h1.0M622.5 218.5h1.0M620.9 204.5h1.0M626.0 210.7h1.0M594.8 213.3h1.0M606.3 234.9h1.0M622.8 208.3h1.0M615.1 220.7h1.0M594.7 217.1h1.0M588.9 219.8h1.0M581.4 222.4h1.0M602.5 217.1h1.0M603.9 235.8h1.0M609.7 225.4h1.0M623.3 228.5h1.0M622.4 214.5h1.0M600.5 217.8h1.0M608.2 223.5h1.0M612.9 233.0h1.0M612.7 239.8h1.0M626.7 214.1h1.0M624.6 191.3h1.0M630.9 221.8h1.0M618.9 204.3h1.0M645.0 211.8h1.0M612.2 233.4h1.0M611.6 214.3h1.0M622.1 210.1h1.0M623.1 221.1h1.0M627.8 206.7h1.0M629.3 221.0h1.0M638.2 209.6h1.0M636.8 223.2h1.0M623.7 212.5h1.0M620.8 226.8h1.0M603.8 213.3h1.0M604.5 238.6h1.0M615.9 230.7h1.0M617.5 222.2h1.0M616.7 217.3h1.0M629.0 219.9h1.0M616.8 207.8h1.0M617.8 214.5h1.0M607.8 233.6h1.0M600.6 223.4h1.0M621.7 231.3h1.0M607.6 226.7h1.0M617.5 210.1h1.0M587.7 209.8h1.0M621.4 221.2h1.0M597.6 219.9h1.0M609.1 219.7h1.0M613.6 243.6h1.0M604.4 225.8h1.0M604.5 218.2h1.0M603.2 222.4h1.0M607.2 227.1h1.0M616.6 212.6h1.0M637.5 204.7h1.0M618.4 242.0h1.0M605.2 237.1h1.0M631.4 220.9h1.0M591.3 241.5h1.0M615.1 216.4h1.0M629.6 211.0h1.0M627.0 213.4h1.0M620.6 209.9h1.0M609.1 214.3h1.0M605.3 226.0h1.0M611.9 224.4h1.0M629.7 216.9h1.0M591.2 224.9h1.0M615.0 231.7h1.0M626.7 228.1h1.0" stroke="#333333" stroke-width="1.0" opacity="1.0"/>
<rect x="560" y="175.5" width="2" height="105.0" fill="#000" />
<rect x="560" y="278.5" width="130" height="2" fill="#000" />
<path d="M561.0 279.5v3.5M570.7 279.5v2M576.4 279.5v2M580.4 279.5v2M583.5 279.5v2M586.1 279.5v2M588.3 279.5v2M590.1 279.5v2M591.8 279.5v2M593.2 279.5v3.5M603.0 279.5v2M608.6 279.5v2M612.7 279.5v2M615.8 279.5v2M618.3 279.5v2M620.5 279.5v2M622.4 279.5v2M624.0 279.5v2M625.5 279.5v3.5M635.2 279.5v2M640.9 279.5v2M644.9 279.5v2M648.0 279.5v2M650.6 279.5v2M652.8 279.5v2M654.6 279.5v2M656.3 279.5v2M657.8 279.5v3.5M667.5 279.5v2M673.1 279.5v2M677.2 279.5v2M680.3 279.5v2M682.8 279.5v2M685.0 279.5v2M686.9 279.5v2M688.5 279.5v2M560 279.5h-4.5M560 271.7h-2.5M560 267.1h-2.5M560 263.8h-2.5M560 261.3h-2.5M560 259.3h-2.5M560 257.5h-2.5M560 256.0h-2.5M560 254.7h-2.5M560 253.5h-4.5M560 245.7h-2.5M560 241.1h-2.5M560 237.8h-2.5M560 235.3h-2.5M560 233.3h-2.5M560 231.5h-2.5M560 230.0h-2.5M560 228.7h-2.5M560 227.5h-4.5M560 219.7h-2.5M560 215.1h-2.5M560 211.8h-2.5M560 209.3h-2.5M560 207.3h-2.5M560 205.5h-2.5M560 204.0h-2.5M560 202.7h-2.5M560 201.5h-4.5M560 193.7h-2.5M560 189.1h-2.5M560 185.8h-2.5M560 183.3h-2.5M560 181.3h-2.5M560 179.5h-2.5M560 178.0h-2.5M560 176.7h-2.5" stroke="#000" stroke-width="0.8"/>
<text x="592.7" y="185.3" font-size="11" fill="#9C2C9C" text-anchor="start" font-weight="normal" textLength="31.6" lengthAdjust="spacingAndGlyphs" stroke="#9C2C9C" stroke-width="0.15">necro 3</text>
<text x="592.7" y="196.5" font-size="11" fill="#9C2C9C" text-anchor="start" font-weight="normal" textLength="26.8" lengthAdjust="spacingAndGlyphs" stroke="#9C2C9C" stroke-width="0.15">6.05%</text>
<text x="569.7" y="214.2" font-size="11" fill="#2424F0" text-anchor="start" font-weight="normal" textLength="22.1" lengthAdjust="spacingAndGlyphs" stroke="#2424F0" stroke-width="0.15">live 3</text>
<text x="569.7" y="225.4" font-size="11" fill="#2424F0" text-anchor="start" font-weight="normal" textLength="32.1" lengthAdjust="spacingAndGlyphs" stroke="#2424F0" stroke-width="0.15">82.28%</text>
<text x="656.3" y="260.7" font-size="11" fill="#2E8E2E" text-anchor="start" font-weight="normal" textLength="23.7" lengthAdjust="spacingAndGlyphs" stroke="#2E8E2E" stroke-width="0.15">apo 3</text>
<text x="656.3" y="271.3" font-size="11" fill="#2E8E2E" text-anchor="start" font-weight="normal" textLength="26.8" lengthAdjust="spacingAndGlyphs" stroke="#2E8E2E" stroke-width="0.15">6.92%</text>
<text x="556.0" y="297.7" font-size="9.5" fill="#222" text-anchor="start" font-weight="normal" textLength="8.4" lengthAdjust="spacingAndGlyphs" >10</text>
<text x="564.9" y="292.8" font-size="6.4" fill="#222" text-anchor="start" font-weight="normal" textLength="3.5" lengthAdjust="spacingAndGlyphs" >0</text>
<text x="588.1" y="297.7" font-size="9.5" fill="#222" text-anchor="start" font-weight="normal" textLength="8.4" lengthAdjust="spacingAndGlyphs" >10</text>
<text x="597.0" y="292.8" font-size="6.4" fill="#222" text-anchor="start" font-weight="normal" textLength="3.5" lengthAdjust="spacingAndGlyphs" >1</text>
<text x="620.2" y="297.7" font-size="9.5" fill="#222" text-anchor="start" font-weight="normal" textLength="8.4" lengthAdjust="spacingAndGlyphs" >10</text>
<text x="629.1" y="292.8" font-size="6.4" fill="#222" text-anchor="start" font-weight="normal" textLength="3.5" lengthAdjust="spacingAndGlyphs" >2</text>
<text x="652.3" y="297.7" font-size="9.5" fill="#222" text-anchor="start" font-weight="normal" textLength="8.4" lengthAdjust="spacingAndGlyphs" >10</text>
<text x="661.2" y="292.8" font-size="6.4" fill="#222" text-anchor="start" font-weight="normal" textLength="3.5" lengthAdjust="spacingAndGlyphs" >3</text>
<text x="684.4" y="297.7" font-size="9.5" fill="#222" text-anchor="start" font-weight="normal" textLength="8.4" lengthAdjust="spacingAndGlyphs" >10</text>
<clipPath id="sc561"><rect x="521" y="280" width="173.2" height="20"/></clipPath>
<g clip-path="url(#sc561)">
<text x="693.3" y="292.8" font-size="6.4" fill="#222" text-anchor="start" font-weight="normal" textLength="3.5" lengthAdjust="spacingAndGlyphs" >4</text>
</g>
<text x="624.6" y="307.5" font-size="10.5" fill="#222" text-anchor="middle" font-weight="normal" textLength="26.7" lengthAdjust="spacingAndGlyphs" >FL1-H</text>
<text x="543.3" y="284.0" font-size="9.5" fill="#222" text-anchor="start" font-weight="normal" textLength="8.4" lengthAdjust="spacingAndGlyphs" >10</text>
<text x="552" y="277.5" font-size="6.4" fill="#222" text-anchor="start" font-weight="normal" textLength="3.5" lengthAdjust="spacingAndGlyphs" >0</text>
<text x="543.3" y="258.0" font-size="9.5" fill="#222" text-anchor="start" font-weight="normal" textLength="8.4" lengthAdjust="spacingAndGlyphs" >10</text>
<text x="552" y="251.5" font-size="6.4" fill="#222" text-anchor="start" font-weight="normal" textLength="3.5" lengthAdjust="spacingAndGlyphs" >1</text>
<text x="543.3" y="232.0" font-size="9.5" fill="#222" text-anchor="start" font-weight="normal" textLength="8.4" lengthAdjust="spacingAndGlyphs" >10</text>
<text x="552" y="225.5" font-size="6.4" fill="#222" text-anchor="start" font-weight="normal" textLength="3.5" lengthAdjust="spacingAndGlyphs" >2</text>
<text x="543.3" y="206.0" font-size="9.5" fill="#222" text-anchor="start" font-weight="normal" textLength="8.4" lengthAdjust="spacingAndGlyphs" >10</text>
<text x="552" y="199.5" font-size="6.4" fill="#222" text-anchor="start" font-weight="normal" textLength="3.5" lengthAdjust="spacingAndGlyphs" >3</text>
<text x="543.3" y="180.0" font-size="9.5" fill="#222" text-anchor="start" font-weight="normal" textLength="8.4" lengthAdjust="spacingAndGlyphs" >10</text>
<text x="552" y="173.5" font-size="6.4" fill="#222" text-anchor="start" font-weight="normal" textLength="3.5" lengthAdjust="spacingAndGlyphs" >4</text>
<text x="0" y="0" font-size="10.5" fill="#222" text-anchor="middle" textLength="26.2" lengthAdjust="spacingAndGlyphs" transform="translate(531.7,227.3) rotate(-90)">FL3-H</text>
</g>
<defs><linearGradient id="hdr" x1="0" y1="0" x2="0" y2="1"><stop offset="0" stop-color="#FBFBFB"/><stop offset="1" stop-color="#EDEDED"/></linearGradient><linearGradient id="hdrF" x1="0" y1="0" x2="0" y2="1"><stop offset="0" stop-color="#D6F0FC"/><stop offset="1" stop-color="#B4E0F8"/></linearGradient><linearGradient id="thumbH" x1="0" y1="0" x2="0" y2="1"><stop offset="0" stop-color="#F6F6F6"/><stop offset="1" stop-color="#C4C4C4"/></linearGradient><linearGradient id="thumbV" x1="0" y1="0" x2="1" y2="0"><stop offset="0" stop-color="#F6F6F6"/><stop offset="1" stop-color="#C4C4C4"/></linearGradient></defs>
<rect x="100" y="334.8" width="506.79999999999995" height="83.2" fill="#fff" stroke="#8CC08C" stroke-width="1"/>
<rect x="102" y="339.3" width="487" height="15.2" fill="url(#hdr)" />
<rect x="463" y="339.3" width="65" height="15.2" fill="url(#hdrF)" />
<rect x="189.5" y="339.3" width="1" height="15.2" fill="#DCDCDC" />
<rect x="254.3" y="339.3" width="1" height="15.2" fill="#DCDCDC" />
<rect x="319.4" y="339.3" width="1" height="15.2" fill="#DCDCDC" />
<rect x="463" y="339.3" width="1" height="15.2" fill="#DCDCDC" />
<rect x="528" y="339.3" width="1" height="15.2" fill="#DCDCDC" />
<rect x="463" y="339.3" width="1" height="15.2" fill="#A8D8F0" />
<rect x="528" y="339.3" width="1" height="15.2" fill="#A8D8F0" />
<rect x="102" y="354" width="487" height="0.8" fill="#D2D2D2" />
<rect x="189.0" y="354.5" width="1" height="46" fill="#A6A6A6" />
<rect x="253.8" y="354.5" width="1" height="46" fill="#A6A6A6" />
<rect x="318.9" y="354.5" width="1" height="46" fill="#A6A6A6" />
<rect x="462.5" y="354.5" width="1" height="46" fill="#A6A6A6" />
<rect x="527.5" y="354.5" width="1" height="46" fill="#A6A6A6" />
<rect x="102" y="370.0" width="361" height="1" fill="#A6A6A6" />
<rect x="528" y="370.0" width="61" height="1" fill="#A6A6A6" />
<rect x="102" y="385.0" width="487" height="1" fill="#A6A6A6" />
<rect x="102" y="400" width="487" height="0.8" fill="#B4B4B4" />
<rect x="462" y="355" width="1.3" height="16" fill="#2A7BE0" />
<rect x="527.3" y="355" width="1.3" height="13" fill="#2A7BE0" />
<rect x="526.8" y="367.5" width="2.5" height="2.5" fill="#2A7BE0" />
<text x="161.9" y="350.8" font-size="8.5" fill="#333" text-anchor="middle" font-weight="normal" >B</text>
<text x="222.6" y="350.8" font-size="8.5" fill="#333" text-anchor="middle" font-weight="normal" >C</text>
<text x="287.2" y="350.8" font-size="8.5" fill="#333" text-anchor="middle" font-weight="normal" >D</text>
<text x="391.5" y="350.8" font-size="8.5" fill="#333" text-anchor="middle" font-weight="normal" >E</text>
<text x="495.5" y="350.8" font-size="8.5" fill="#333" text-anchor="middle" font-weight="normal" >F</text>
<text x="560.5" y="350.8" font-size="8.5" fill="#333" text-anchor="middle" font-weight="normal" >G</text>
<text x="174.1" y="366" font-size="10.2" fill="#1A1A1A" text-anchor="start" font-weight="normal" textLength="13.6" lengthAdjust="spacingAndGlyphs" stroke="#1A1A1A" stroke-width="0.12">6.7</text>
<text x="233.3" y="366" font-size="10.2" fill="#1A1A1A" text-anchor="start" font-weight="normal" textLength="19.0" lengthAdjust="spacingAndGlyphs" stroke="#1A1A1A" stroke-width="0.12">6.54</text>
<text x="298.9" y="366" font-size="10.2" fill="#1A1A1A" text-anchor="start" font-weight="normal" textLength="19.0" lengthAdjust="spacingAndGlyphs" stroke="#1A1A1A" stroke-width="0.12">6.92</text>
<text x="442.0" y="366" font-size="10.2" fill="#1A1A1A" text-anchor="start" font-weight="normal" textLength="19.0" lengthAdjust="spacingAndGlyphs" stroke="#1A1A1A" stroke-width="0.12">6.72</text>
<text x="168.7" y="381" font-size="10.2" fill="#1A1A1A" text-anchor="start" font-weight="normal" textLength="19.0" lengthAdjust="spacingAndGlyphs" stroke="#1A1A1A" stroke-width="0.12">5.55</text>
<text x="233.3" y="381" font-size="10.2" fill="#1A1A1A" text-anchor="start" font-weight="normal" textLength="19.0" lengthAdjust="spacingAndGlyphs" stroke="#1A1A1A" stroke-width="0.12">5.65</text>
<text x="298.9" y="381" font-size="10.2" fill="#1A1A1A" text-anchor="start" font-weight="normal" textLength="19.0" lengthAdjust="spacingAndGlyphs" stroke="#1A1A1A" stroke-width="0.12">6.05</text>
<rect x="102" y="400.8" width="487" height="15.2" fill="#E9E9E9" />
<rect x="203.5" y="402.5" width="371" height="10" rx="2" fill="url(#thumbH)" stroke="#B8B8B8" stroke-width="0.8"/>
<path d="M386 405v4.5M388 405v4.5M390 405v4.5" stroke="#777" stroke-width="0.8"/>
<path d="M580.5 404.5 v6 l3.2 -3 z" fill="#555"/>
<rect x="589" y="339.2" width="12.7" height="74.3" fill="#E9E9E9" />
<rect x="589.7" y="353.5" width="11" height="24.5" rx="2" fill="url(#thumbV)" stroke="#B8B8B8" stroke-width="0.8"/>
<path d="M592.5 362.5h5M592.5 364.5h5M592.5 366.5h5M592.5 368.5h5" stroke="#777" stroke-width="0.8"/>
<path d="M592.5 348 h5 l-2.5 -3 z" fill="#555"/>
<path d="M592.5 393.5 h5 l-2.5 3 z" fill="#555"/>
<circle cx="357" cy="334.8" r="3.4" fill="#fff" stroke="#808080" stroke-width="1.2"/>
<circle cx="357" cy="418" r="3.4" fill="#fff" stroke="#808080" stroke-width="1.2"/>
<circle cx="606.8" cy="335" r="3.4" fill="#fff" stroke="#808080" stroke-width="1.2"/>
<circle cx="606.8" cy="376.5" r="3.4" fill="#fff" stroke="#808080" stroke-width="1.2"/>
<circle cx="606.8" cy="418.2" r="3.4" fill="#fff" stroke="#808080" stroke-width="1.2"/>
<defs><linearGradient id="shd" x1="0" y1="0" x2="1" y2="0"><stop offset="0" stop-color="#000" stop-opacity="0.16"/><stop offset="1" stop-color="#000" stop-opacity="0"/></linearGradient></defs>
<rect x="145" y="101" width="3" height="692" fill="url(#shd)" />
<rect x="9" y="101" width="1" height="692" fill="#D2D2D2" />
<rect x="10" y="101" width="135" height="692" fill="#FFFFFF" />
<rect x="144" y="101" width="1" height="692" fill="#C4C4C4" />
<rect x="9" y="100.5" width="136" height="1" fill="#C4C4C4" />
<defs><linearGradient id="sbg" x1="0" y1="0" x2="0" y2="1"><stop offset="0" stop-color="#FAFAFA"/><stop offset="0.5" stop-color="#EBEBEB"/><stop offset="1" stop-color="#CDCDCD"/></linearGradient></defs>
<clipPath id="lc"><rect x="10" y="112" width="135" height="670"/></clipPath>
<g clip-path="url(#lc)">
<text x="36" y="124.1" font-size="9.8" fill="#555555" text-anchor="start" font-weight="normal" textLength="46.5" lengthAdjust="spacingAndGlyphs" >GAMMALN</text>
<g transform="translate(16,115.90)"><rect width="8" height="8.3" fill="#2F70C6"/><rect y="8.3" width="8" height="2.3" fill="#AFC9EA"/><rect width="1" height="10.6" fill="#2A64B4"/><rect x="1.5" y="2.2" width="5.5" height="4.6" fill="#FFFFFF"/><path d="M2.6 5.8 L4.3 4.5 L6.3 3.2" stroke="#3E7ED0" stroke-width="1.1" fill="none"/></g>
<text x="36" y="142.46" font-size="9.8" fill="#555555" text-anchor="start" font-weight="normal" textLength="80.3" lengthAdjust="spacingAndGlyphs" >GAMMALN.PRECISE</text>
<g transform="translate(16,134.26)"><rect width="8" height="8.3" fill="#2F70C6"/><rect y="8.3" width="8" height="2.3" fill="#AFC9EA"/><rect width="1" height="10.6" fill="#2A64B4"/><rect x="1.5" y="2.2" width="5.5" height="4.6" fill="#FFFFFF"/><path d="M2.6 5.8 L4.3 4.5 L6.3 3.2" stroke="#3E7ED0" stroke-width="1.1" fill="none"/></g>
<text x="36" y="160.82" font-size="9.8" fill="#555555" text-anchor="start" font-weight="normal" textLength="28.9" lengthAdjust="spacingAndGlyphs" >GAUSS</text>
<g transform="translate(16,152.62)"><rect width="8" height="8.3" fill="#2F70C6"/><rect y="8.3" width="8" height="2.3" fill="#AFC9EA"/><rect width="1" height="10.6" fill="#2A64B4"/><rect x="1.5" y="2.2" width="5.5" height="4.6" fill="#FFFFFF"/><path d="M2.6 5.8 L4.3 4.5 L6.3 3.2" stroke="#3E7ED0" stroke-width="1.1" fill="none"/></g>
<text x="36" y="179.18" font-size="9.8" fill="#555555" text-anchor="start" font-weight="normal" textLength="42.2" lengthAdjust="spacingAndGlyphs" >GEOMEAN</text>
<g transform="translate(16,170.98)"><rect width="8" height="8.3" fill="#2F70C6"/><rect y="8.3" width="8" height="2.3" fill="#AFC9EA"/><rect width="1" height="10.6" fill="#2A64B4"/><rect x="1.5" y="2.2" width="5.5" height="4.6" fill="#FFFFFF"/><path d="M2.6 5.8 L4.3 4.5 L6.3 3.2" stroke="#3E7ED0" stroke-width="1.1" fill="none"/></g>
<text x="36" y="197.54" font-size="9.8" fill="#555555" text-anchor="start" font-weight="normal" textLength="63.3" lengthAdjust="spacingAndGlyphs" >HYPGEOM.DIST</text>
<g transform="translate(16,189.34)"><rect width="8" height="8.3" fill="#2F70C6"/><rect y="8.3" width="8" height="2.3" fill="#AFC9EA"/><rect width="1" height="10.6" fill="#2A64B4"/><rect x="1.5" y="2.2" width="5.5" height="4.6" fill="#FFFFFF"/><path d="M2.6 5.8 L4.3 4.5 L6.3 3.2" stroke="#3E7ED0" stroke-width="1.1" fill="none"/></g>
<text x="36" y="215.9" font-size="9.8" fill="#555555" text-anchor="start" font-weight="normal" textLength="46.8" lengthAdjust="spacingAndGlyphs" >INTERCEPT</text>
<g transform="translate(16,207.70)"><rect width="8" height="8.3" fill="#2F70C6"/><rect y="8.3" width="8" height="2.3" fill="#AFC9EA"/><rect width="1" height="10.6" fill="#2A64B4"/><rect x="1.5" y="2.2" width="5.5" height="4.6" fill="#FFFFFF"/><path d="M2.6 5.8 L4.3 4.5 L6.3 3.2" stroke="#3E7ED0" stroke-width="1.1" fill="none"/></g>
<text x="36" y="234.26" font-size="9.8" fill="#555555" text-anchor="start" font-weight="normal" textLength="28.0" lengthAdjust="spacingAndGlyphs" >LARGE</text>
<g transform="translate(16,226.06)"><rect width="8" height="8.3" fill="#2F70C6"/><rect y="8.3" width="8" height="2.3" fill="#AFC9EA"/><rect width="1" height="10.6" fill="#2A64B4"/><rect x="1.5" y="2.2" width="5.5" height="4.6" fill="#FFFFFF"/><path d="M2.6 5.8 L4.3 4.5 L6.3 3.2" stroke="#3E7ED0" stroke-width="1.1" fill="none"/></g>
<text x="36" y="252.62" font-size="9.8" fill="#555555" text-anchor="start" font-weight="normal" textLength="17.9" lengthAdjust="spacingAndGlyphs" >MAX</text>
<g transform="translate(16,244.42)"><rect width="8" height="8.3" fill="#2F70C6"/><rect y="8.3" width="8" height="2.3" fill="#AFC9EA"/><rect width="1" height="10.6" fill="#2A64B4"/><rect x="1.5" y="2.2" width="5.5" height="4.6" fill="#FFFFFF"/><path d="M2.6 5.8 L4.3 4.5 L6.3 3.2" stroke="#3E7ED0" stroke-width="1.1" fill="none"/></g>
<text x="36" y="270.98" font-size="9.8" fill="#555555" text-anchor="start" font-weight="normal" textLength="23.4" lengthAdjust="spacingAndGlyphs" >MAXA</text>
<g transform="translate(16,262.78)"><rect width="8" height="8.3" fill="#2F70C6"/><rect y="8.3" width="8" height="2.3" fill="#AFC9EA"/><rect width="1" height="10.6" fill="#2A64B4"/><rect x="1.5" y="2.2" width="5.5" height="4.6" fill="#FFFFFF"/><path d="M2.6 5.8 L4.3 4.5 L6.3 3.2" stroke="#3E7ED0" stroke-width="1.1" fill="none"/></g>
<text x="36" y="289.34" font-size="9.8" fill="#555555" text-anchor="start" font-weight="normal" textLength="32.1" lengthAdjust="spacingAndGlyphs" >MEDIAN</text>
<g transform="translate(16,281.14)"><rect width="8" height="8.3" fill="#2F70C6"/><rect y="8.3" width="8" height="2.3" fill="#AFC9EA"/><rect width="1" height="10.6" fill="#2A64B4"/><rect x="1.5" y="2.2" width="5.5" height="4.6" fill="#FFFFFF"/><path d="M2.6 5.8 L4.3 4.5 L6.3 3.2" stroke="#3E7ED0" stroke-width="1.1" fill="none"/></g>
<text x="36" y="307.7" font-size="9.8" fill="#555555" text-anchor="start" font-weight="normal" textLength="15.1" lengthAdjust="spacingAndGlyphs" >MIN</text>
<g transform="translate(16,299.50)"><rect width="8" height="8.3" fill="#2F70C6"/><rect y="8.3" width="8" height="2.3" fill="#AFC9EA"/><rect width="1" height="10.6" fill="#2A64B4"/><rect x="1.5" y="2.2" width="5.5" height="4.6" fill="#FFFFFF"/><path d="M2.6 5.8 L4.3 4.5 L6.3 3.2" stroke="#3E7ED0" stroke-width="1.1" fill="none"/></g>
<text x="36" y="326.06" font-size="9.8" fill="#555555" text-anchor="start" font-weight="normal" textLength="20.6" lengthAdjust="spacingAndGlyphs" >MINA</text>
<g transform="translate(16,317.86)"><rect width="8" height="8.3" fill="#2F70C6"/><rect y="8.3" width="8" height="2.3" fill="#AFC9EA"/><rect width="1" height="10.6" fill="#2A64B4"/><rect x="1.5" y="2.2" width="5.5" height="4.6" fill="#FFFFFF"/><path d="M2.6 5.8 L4.3 4.5 L6.3 3.2" stroke="#3E7ED0" stroke-width="1.1" fill="none"/></g>
<text x="36" y="344.42" font-size="9.8" fill="#555555" text-anchor="start" font-weight="normal" textLength="46.3" lengthAdjust="spacingAndGlyphs" >NORM.DIST</text>
<g transform="translate(16,336.22)"><rect width="8" height="8.3" fill="#2F70C6"/><rect y="8.3" width="8" height="2.3" fill="#AFC9EA"/><rect width="1" height="10.6" fill="#2A64B4"/><rect x="1.5" y="2.2" width="5.5" height="4.6" fill="#FFFFFF"/><path d="M2.6 5.8 L4.3 4.5 L6.3 3.2" stroke="#3E7ED0" stroke-width="1.1" fill="none"/></g>
<text x="36" y="362.78" font-size="9.8" fill="#555555" text-anchor="start" font-weight="normal" textLength="41.3" lengthAdjust="spacingAndGlyphs" >NORM.INV</text>
<g transform="translate(16,354.58)"><rect width="8" height="8.3" fill="#2F70C6"/><rect y="8.3" width="8" height="2.3" fill="#AFC9EA"/><rect width="1" height="10.6" fill="#2A64B4"/><rect x="1.5" y="2.2" width="5.5" height="4.6" fill="#FFFFFF"/><path d="M2.6 5.8 L4.3 4.5 L6.3 3.2" stroke="#3E7ED0" stroke-width="1.1" fill="none"/></g>
<text x="36" y="381.14" font-size="9.8" fill="#555555" text-anchor="start" font-weight="normal" textLength="54.1" lengthAdjust="spacingAndGlyphs" >NORM.S.DIST</text>
<g transform="translate(16,372.94)"><rect width="8" height="8.3" fill="#2F70C6"/><rect y="8.3" width="8" height="2.3" fill="#AFC9EA"/><rect width="1" height="10.6" fill="#2A64B4"/><rect x="1.5" y="2.2" width="5.5" height="4.6" fill="#FFFFFF"/><path d="M2.6 5.8 L4.3 4.5 L6.3 3.2" stroke="#3E7ED0" stroke-width="1.1" fill="none"/></g>
<text x="36" y="399.5" font-size="9.8" fill="#555555" text-anchor="start" font-weight="normal" textLength="49.1" lengthAdjust="spacingAndGlyphs" >NORM.S.INV</text>
<g transform="translate(16,391.30)"><rect width="8" height="8.3" fill="#2F70C6"/><rect y="8.3" width="8" height="2.3" fill="#AFC9EA"/><rect width="1" height="10.6" fill="#2A64B4"/><rect x="1.5" y="2.2" width="5.5" height="4.6" fill="#FFFFFF"/><path d="M2.6 5.8 L4.3 4.5 L6.3 3.2" stroke="#3E7ED0" stroke-width="1.1" fill="none"/></g>
<text x="36" y="417.86" font-size="9.8" fill="#555555" text-anchor="start" font-weight="normal" textLength="40.4" lengthAdjust="spacingAndGlyphs" >PEARSON</text>
<g transform="translate(16,409.66)"><rect width="8" height="8.3" fill="#2F70C6"/><rect y="8.3" width="8" height="2.3" fill="#AFC9EA"/><rect width="1" height="10.6" fill="#2A64B4"/><rect x="1.5" y="2.2" width="5.5" height="4.6" fill="#FFFFFF"/><path d="M2.6 5.8 L4.3 4.5 L6.3 3.2" stroke="#3E7ED0" stroke-width="1.1" fill="none"/></g>
<text x="36" y="436.22" font-size="9.8" fill="#555555" text-anchor="start" font-weight="normal" textLength="71.1" lengthAdjust="spacingAndGlyphs" >PERCENTILE.EXC</text>
<g transform="translate(16,428.02)"><rect width="8" height="8.3" fill="#2F70C6"/><rect y="8.3" width="8" height="2.3" fill="#AFC9EA"/><rect width="1" height="10.6" fill="#2A64B4"/><rect x="1.5" y="2.2" width="5.5" height="4.6" fill="#FFFFFF"/><path d="M2.6 5.8 L4.3 4.5 L6.3 3.2" stroke="#3E7ED0" stroke-width="1.1" fill="none"/></g>
<text x="36" y="454.58" font-size="9.8" fill="#555555" text-anchor="start" font-weight="normal" textLength="68.4" lengthAdjust="spacingAndGlyphs" >PERCENTILE.INC</text>
<g transform="translate(16,446.38)"><rect width="8" height="8.3" fill="#2F70C6"/><rect y="8.3" width="8" height="2.3" fill="#AFC9EA"/><rect width="1" height="10.6" fill="#2A64B4"/><rect x="1.5" y="2.2" width="5.5" height="4.6" fill="#FFFFFF"/><path d="M2.6 5.8 L4.3 4.5 L6.3 3.2" stroke="#3E7ED0" stroke-width="1.1" fill="none"/></g>
<text x="36" y="472.94" font-size="9.8" fill="#555555" text-anchor="start" font-weight="normal" textLength="34.9" lengthAdjust="spacingAndGlyphs" >PERMUT</text>
<g transform="translate(16,464.74)"><rect width="8" height="8.3" fill="#2F70C6"/><rect y="8.3" width="8" height="2.3" fill="#AFC9EA"/><rect width="1" height="10.6" fill="#2A64B4"/><rect x="1.5" y="2.2" width="5.5" height="4.6" fill="#FFFFFF"/><path d="M2.6 5.8 L4.3 4.5 L6.3 3.2" stroke="#3E7ED0" stroke-width="1.1" fill="none"/></g>
<text x="36" y="491.3" font-size="9.8" fill="#555555" text-anchor="start" font-weight="normal" textLength="58.7" lengthAdjust="spacingAndGlyphs" >POISSON.DIST</text>
<g transform="translate(16,483.10)"><rect width="8" height="8.3" fill="#2F70C6"/><rect y="8.3" width="8" height="2.3" fill="#AFC9EA"/><rect width="1" height="10.6" fill="#2A64B4"/><rect x="1.5" y="2.2" width="5.5" height="4.6" fill="#FFFFFF"/><path d="M2.6 5.8 L4.3 4.5 L6.3 3.2" stroke="#3E7ED0" stroke-width="1.1" fill="none"/></g>
<text x="36" y="509.66" font-size="9.8" fill="#555555" text-anchor="start" font-weight="normal" textLength="60.4" lengthAdjust="spacingAndGlyphs" >QUARTILE.EXC</text>
<g transform="translate(16,501.46)"><rect width="8" height="8.3" fill="#2F70C6"/><rect y="8.3" width="8" height="2.3" fill="#AFC9EA"/><rect width="1" height="10.6" fill="#2A64B4"/><rect x="1.5" y="2.2" width="5.5" height="4.6" fill="#FFFFFF"/><path d="M2.6 5.8 L4.3 4.5 L6.3 3.2" stroke="#3E7ED0" stroke-width="1.1" fill="none"/></g>
<text x="36" y="528.02" font-size="9.8" fill="#555555" text-anchor="start" font-weight="normal" textLength="57.7" lengthAdjust="spacingAndGlyphs" >QUARTILE.INC</text>
<g transform="translate(16,519.82)"><rect width="8" height="8.3" fill="#2F70C6"/><rect y="8.3" width="8" height="2.3" fill="#AFC9EA"/><rect width="1" height="10.6" fill="#2A64B4"/><rect x="1.5" y="2.2" width="5.5" height="4.6" fill="#FFFFFF"/><path d="M2.6 5.8 L4.3 4.5 L6.3 3.2" stroke="#3E7ED0" stroke-width="1.1" fill="none"/></g>
<text x="36" y="546.38" font-size="9.8" fill="#555555" text-anchor="start" font-weight="normal" textLength="42.1" lengthAdjust="spacingAndGlyphs" >RANK.AVG</text>
<g transform="translate(16,538.18)"><rect width="8" height="8.3" fill="#2F70C6"/><rect y="8.3" width="8" height="2.3" fill="#AFC9EA"/><rect width="1" height="10.6" fill="#2A64B4"/><rect x="1.5" y="2.2" width="5.5" height="4.6" fill="#FFFFFF"/><path d="M2.6 5.8 L4.3 4.5 L6.3 3.2" stroke="#3E7ED0" stroke-width="1.1" fill="none"/></g>
<text x="36" y="564.74" font-size="9.8" fill="#555555" text-anchor="start" font-weight="normal" textLength="37.2" lengthAdjust="spacingAndGlyphs" >RANK.EQ</text>
<g transform="translate(16,556.54)"><rect width="8" height="8.3" fill="#2F70C6"/><rect y="8.3" width="8" height="2.3" fill="#AFC9EA"/><rect width="1" height="10.6" fill="#2A64B4"/><rect x="1.5" y="2.2" width="5.5" height="4.6" fill="#FFFFFF"/><path d="M2.6 5.8 L4.3 4.5 L6.3 3.2" stroke="#3E7ED0" stroke-width="1.1" fill="none"/></g>
<text x="36" y="583.1" font-size="9.8" fill="#555555" text-anchor="start" font-weight="normal" textLength="17.9" lengthAdjust="spacingAndGlyphs" >RSQ</text>
<g transform="translate(16,574.90)"><rect width="8" height="8.3" fill="#2F70C6"/><rect y="8.3" width="8" height="2.3" fill="#AFC9EA"/><rect width="1" height="10.6" fill="#2A64B4"/><rect x="1.5" y="2.2" width="5.5" height="4.6" fill="#FFFFFF"/><path d="M2.6 5.8 L4.3 4.5 L6.3 3.2" stroke="#3E7ED0" stroke-width="1.1" fill="none"/></g>
<text x="36" y="601.46" font-size="9.8" fill="#555555" text-anchor="start" font-weight="normal" textLength="24.3" lengthAdjust="spacingAndGlyphs" >SKEW</text>
<g transform="translate(16,593.26)"><rect width="8" height="8.3" fill="#2F70C6"/><rect y="8.3" width="8" height="2.3" fill="#AFC9EA"/><rect width="1" height="10.6" fill="#2A64B4"/><rect x="1.5" y="2.2" width="5.5" height="4.6" fill="#FFFFFF"/><path d="M2.6 5.8 L4.3 4.5 L6.3 3.2" stroke="#3E7ED0" stroke-width="1.1" fill="none"/></g>
<text x="36" y="619.82" font-size="9.8" fill="#555555" text-anchor="start" font-weight="normal" textLength="31.7" lengthAdjust="spacingAndGlyphs" >SKEW.P</text>
<g transform="translate(16,611.62)"><rect width="8" height="8.3" fill="#2F70C6"/><rect y="8.3" width="8" height="2.3" fill="#AFC9EA"/><rect width="1" height="10.6" fill="#2A64B4"/><rect x="1.5" y="2.2" width="5.5" height="4.6" fill="#FFFFFF"/><path d="M2.6 5.8 L4.3 4.5 L6.3 3.2" stroke="#3E7ED0" stroke-width="1.1" fill="none"/></g>
<text x="36" y="638.18" font-size="9.8" fill="#555555" text-anchor="start" font-weight="normal" textLength="27.5" lengthAdjust="spacingAndGlyphs" >SLOPE</text>
<g transform="translate(16,629.98)"><rect width="8" height="8.3" fill="#2F70C6"/><rect y="8.3" width="8" height="2.3" fill="#AFC9EA"/><rect width="1" height="10.6" fill="#2A64B4"/><rect x="1.5" y="2.2" width="5.5" height="4.6" fill="#FFFFFF"/><path d="M2.6 5.8 L4.3 4.5 L6.3 3.2" stroke="#3E7ED0" stroke-width="1.1" fill="none"/></g>
<text x="36" y="656.54" font-size="9.8" fill="#555555" text-anchor="start" font-weight="normal" textLength="27.1" lengthAdjust="spacingAndGlyphs" >SMALL</text>
<g transform="translate(16,648.34)"><rect width="8" height="8.3" fill="#2F70C6"/><rect y="8.3" width="8" height="2.3" fill="#AFC9EA"/><rect width="1" height="10.6" fill="#2A64B4"/><rect x="1.5" y="2.2" width="5.5" height="4.6" fill="#FFFFFF"/><path d="M2.6 5.8 L4.3 4.5 L6.3 3.2" stroke="#3E7ED0" stroke-width="1.1" fill="none"/></g>
<text x="36" y="674.9" font-size="9.8" fill="#555555" text-anchor="start" font-weight="normal" textLength="57.6" lengthAdjust="spacingAndGlyphs" >STANDARDIZE</text>
<g transform="translate(16,666.70)"><rect width="8" height="8.3" fill="#2F70C6"/><rect y="8.3" width="8" height="2.3" fill="#AFC9EA"/><rect width="1" height="10.6" fill="#2A64B4"/><rect x="1.5" y="2.2" width="5.5" height="4.6" fill="#FFFFFF"/><path d="M2.6 5.8 L4.3 4.5 L6.3 3.2" stroke="#3E7ED0" stroke-width="1.1" fill="none"/></g>
<text x="36" y="693.26" font-size="9.8" fill="#555555" text-anchor="start" font-weight="normal" textLength="34.6" lengthAdjust="spacingAndGlyphs" >STDEV.P</text>
<g transform="translate(16,685.06)"><rect width="8" height="8.3" fill="#2F70C6"/><rect y="8.3" width="8" height="2.3" fill="#AFC9EA"/><rect width="1" height="10.6" fill="#2A64B4"/><rect x="1.5" y="2.2" width="5.5" height="4.6" fill="#FFFFFF"/><path d="M2.6 5.8 L4.3 4.5 L6.3 3.2" stroke="#3E7ED0" stroke-width="1.1" fill="none"/></g>
<text x="36" y="711.62" font-size="9.8" fill="#555555" text-anchor="start" font-weight="normal" textLength="34.6" lengthAdjust="spacingAndGlyphs" >STDEV.S</text>
<g transform="translate(16,703.42)"><rect width="8" height="8.3" fill="#2F70C6"/><rect y="8.3" width="8" height="2.3" fill="#AFC9EA"/><rect width="1" height="10.6" fill="#2A64B4"/><rect x="1.5" y="2.2" width="5.5" height="4.6" fill="#FFFFFF"/><path d="M2.6 5.8 L4.3 4.5 L6.3 3.2" stroke="#3E7ED0" stroke-width="1.1" fill="none"/></g>
<text x="36" y="729.98" font-size="9.8" fill="#555555" text-anchor="start" font-weight="normal" textLength="32.4" lengthAdjust="spacingAndGlyphs" >STDEVA</text>
<g transform="translate(16,721.78)"><rect width="8" height="8.3" fill="#2F70C6"/><rect y="8.3" width="8" height="2.3" fill="#AFC9EA"/><rect width="1" height="10.6" fill="#2A64B4"/><rect x="1.5" y="2.2" width="5.5" height="4.6" fill="#FFFFFF"/><path d="M2.6 5.8 L4.3 4.5 L6.3 3.2" stroke="#3E7ED0" stroke-width="1.1" fill="none"/></g>
<text x="36" y="748.34" font-size="9.8" fill="#555555" text-anchor="start" font-weight="normal" textLength="37.9" lengthAdjust="spacingAndGlyphs" >STDEVPA</text>
<g transform="translate(16,740.14)"><rect width="8" height="8.3" fill="#2F70C6"/><rect y="8.3" width="8" height="2.3" fill="#AFC9EA"/><rect width="1" height="10.6" fill="#2A64B4"/><rect x="1.5" y="2.2" width="5.5" height="4.6" fill="#FFFFFF"/><path d="M2.6 5.8 L4.3 4.5 L6.3 3.2" stroke="#3E7ED0" stroke-width="1.1" fill="none"/></g>
<text x="36" y="766.7" font-size="9.8" fill="#555555" text-anchor="start" font-weight="normal" textLength="27.1" lengthAdjust="spacingAndGlyphs" >STEYX</text>
<g transform="translate(16,758.50)"><rect width="8" height="8.3" fill="#2F70C6"/><rect y="8.3" width="8" height="2.3" fill="#AFC9EA"/><rect width="1" height="10.6" fill="#2A64B4"/><rect x="1.5" y="2.2" width="5.5" height="4.6" fill="#FFFFFF"/><path d="M2.6 5.8 L4.3 4.5 L6.3 3.2" stroke="#3E7ED0" stroke-width="1.1" fill="none"/></g>
<text x="36" y="785.06" font-size="9.8" fill="#555555" text-anchor="start" font-weight="normal" textLength="25.2" lengthAdjust="spacingAndGlyphs" >T.DIST</text>
<g transform="translate(16,776.86)"><rect width="8" height="8.3" fill="#2F70C6"/><rect y="8.3" width="8" height="2.3" fill="#AFC9EA"/><rect width="1" height="10.6" fill="#2A64B4"/><rect x="1.5" y="2.2" width="5.5" height="4.6" fill="#FFFFFF"/><path d="M2.6 5.8 L4.3 4.5 L6.3 3.2" stroke="#3E7ED0" stroke-width="1.1" fill="none"/></g>
</g>
<rect x="11" y="102.5" width="132" height="9" rx="1.5" fill="url(#sbg)" stroke="#A0A0A0" stroke-width="1"/>
<path d="M74.5 108 h4 l-2 -2.2 z" fill="#444"/>
<rect x="11" y="782.5" width="132" height="9" rx="1.5" fill="url(#sbg)" stroke="#A0A0A0" stroke-width="1"/>
<path d="M74.5 786 h4 l-2 2.2 z" fill="#444"/>
<circle cx="57.8" cy="60.2" r="8" fill="#000"/>
<text x="57.8" y="65.0" font-size="13.5" font-weight="bold" fill="#D4D4D4" text-anchor="middle" textLength="7.2" lengthAdjust="spacingAndGlyphs">3</text>
<circle cx="311.4" cy="33.6" r="8" fill="#000"/>
<text x="311.4" y="38.4" font-size="13.5" font-weight="bold" fill="#D4D4D4" text-anchor="middle" textLength="7.2" lengthAdjust="spacingAndGlyphs">2</text>
<circle cx="496.5" cy="364.4" r="8.3" fill="#000"/>
<path d="M497.1 368.7 V360.09999999999997 L494.1 362.2" stroke="#D4D4D4" stroke-width="1.9" fill="none" stroke-linejoin="round"/>
<circle cx="93" cy="784.5" r="8" fill="#000"/>
<text x="93" y="789.3" font-size="13.5" font-weight="bold" fill="#D4D4D4" text-anchor="middle" textLength="7.2" lengthAdjust="spacingAndGlyphs">4</text>
<circle cx="150.3" cy="710" r="8" fill="#000"/>
<text x="150.3" y="714.8" font-size="13.5" font-weight="bold" fill="#D4D4D4" text-anchor="middle" textLength="7.2" lengthAdjust="spacingAndGlyphs">5</text>
<path d="M137.3 714 L76.5 722.5" stroke="#000" stroke-width="2" fill="none"/>
<path d="M85.5 715.3 L76 722.6 L86.8 726.8" stroke="#000" stroke-width="2" fill="none" stroke-linejoin="miter"/>
</svg>
</body></html>
